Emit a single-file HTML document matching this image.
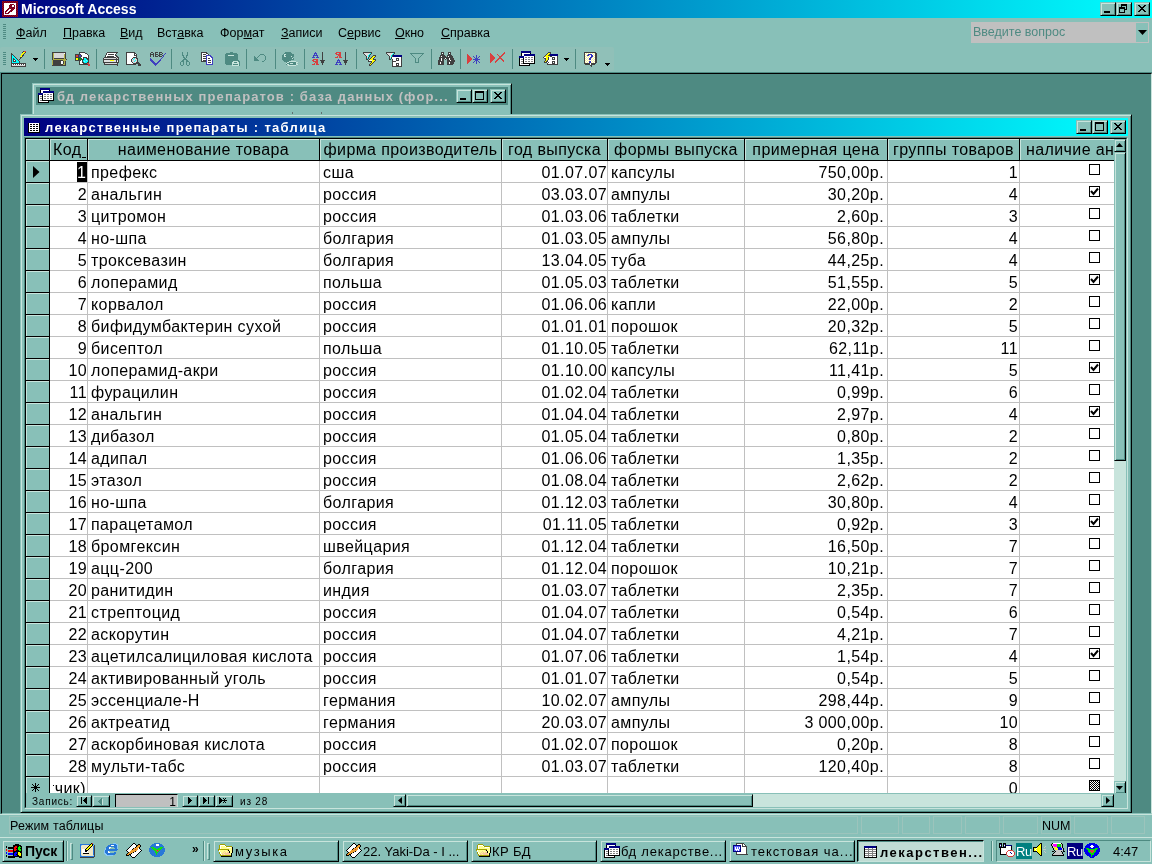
<!DOCTYPE html><html><head><meta charset="utf-8"><style>
html,body{margin:0;padding:0}
body{width:1152px;height:864px;overflow:hidden;position:relative;background:#88C0B8;font-family:"Liberation Sans",sans-serif;color:#000}
div,span,svg{position:absolute;box-sizing:border-box}
.t{white-space:nowrap;line-height:1;will-change:transform}
.rb{background:#88C0B8;border:1px solid;border-color:#88C0B8 #000 #000 #88C0B8;box-shadow:inset 1px 1px 0 #C8E4DC,inset -1px -1px 0 #4E8A82}
.sep{width:2px;border-left:1px solid #4E8A82;border-right:1px solid #C8E4DC}
.cell{font-size:16px;letter-spacing:0.4px;line-height:21px;height:21px;white-space:nowrap;overflow:hidden;will-change:transform}
</style></head><body>

<div style="left:0;top:0;width:1152px;height:18px;background:linear-gradient(to right,#000080,#00FFFF)"></div>
<svg style="left:2px;top:1px;" width="16" height="16" viewBox="0 0 16 16" shape-rendering="crispEdges"><rect x="0" y="0" width="1" height="1" fill="#800040"/><rect x="1" y="0" width="1" height="1" fill="#800000"/><rect x="2" y="0" width="1" height="1" fill="#800040"/><rect x="3" y="0" width="1" height="1" fill="#800000"/><rect x="4" y="0" width="1" height="1" fill="#800040"/><rect x="5" y="0" width="1" height="1" fill="#800000"/><rect x="6" y="0" width="1" height="1" fill="#800040"/><rect x="7" y="0" width="1" height="1" fill="#800000"/><rect x="8" y="0" width="1" height="1" fill="#800040"/><rect x="9" y="0" width="1" height="1" fill="#800000"/><rect x="10" y="0" width="1" height="1" fill="#800040"/><rect x="11" y="0" width="1" height="1" fill="#800000"/><rect x="12" y="0" width="1" height="1" fill="#800040"/><rect x="13" y="0" width="1" height="1" fill="#800000"/><rect x="14" y="0" width="1" height="1" fill="#800040"/><rect x="15" y="0" width="1" height="1" fill="#800000"/><rect x="0" y="1" width="1" height="1" fill="#800000"/><rect x="1" y="1" width="1" height="1" fill="#800040"/><rect x="2" y="1" width="1" height="1" fill="#800000"/><rect x="3" y="1" width="1" height="1" fill="#800040"/><rect x="4" y="1" width="1" height="1" fill="#800000"/><rect x="5" y="1" width="1" height="1" fill="#800040"/><rect x="6" y="1" width="1" height="1" fill="#800000"/><rect x="7" y="1" width="1" height="1" fill="#800040"/><rect x="8" y="1" width="1" height="1" fill="#800000"/><rect x="9" y="1" width="1" height="1" fill="#800040"/><rect x="10" y="1" width="1" height="1" fill="#800000"/><rect x="11" y="1" width="1" height="1" fill="#800040"/><rect x="12" y="1" width="1" height="1" fill="#800000"/><rect x="13" y="1" width="1" height="1" fill="#800040"/><rect x="14" y="1" width="1" height="1" fill="#800000"/><rect x="15" y="1" width="1" height="1" fill="#800040"/><rect x="0" y="2" width="1" height="1" fill="#800040"/><rect x="1" y="2" width="1" height="1" fill="#800000"/><rect x="2" y="2" width="12" height="1" fill="#FFFFFF"/><rect x="14" y="2" width="1" height="1" fill="#800040"/><rect x="15" y="2" width="1" height="1" fill="#800000"/><rect x="0" y="3" width="1" height="1" fill="#800000"/><rect x="1" y="3" width="1" height="1" fill="#800040"/><rect x="2" y="3" width="6" height="1" fill="#FFFFFF"/><rect x="8" y="3" width="1" height="1" fill="#800000"/><rect x="9" y="3" width="1" height="1" fill="#800040"/><rect x="10" y="3" width="1" height="1" fill="#800000"/><rect x="11" y="3" width="1" height="1" fill="#800040"/><rect x="12" y="3" width="2" height="1" fill="#FFFFFF"/><rect x="14" y="3" width="1" height="1" fill="#800000"/><rect x="15" y="3" width="1" height="1" fill="#800040"/><rect x="0" y="4" width="1" height="1" fill="#800040"/><rect x="1" y="4" width="1" height="1" fill="#800000"/><rect x="2" y="4" width="5" height="1" fill="#FFFFFF"/><rect x="7" y="4" width="1" height="1" fill="#800000"/><rect x="8" y="4" width="1" height="1" fill="#800040"/><rect x="9" y="4" width="1" height="1" fill="#800000"/><rect x="10" y="4" width="2" height="1" fill="#FFFFFF"/><rect x="12" y="4" width="1" height="1" fill="#800000"/><rect x="13" y="4" width="1" height="1" fill="#FFFFFF"/><rect x="14" y="4" width="1" height="1" fill="#800040"/><rect x="15" y="4" width="1" height="1" fill="#800000"/><rect x="0" y="5" width="1" height="1" fill="#800000"/><rect x="1" y="5" width="1" height="1" fill="#800040"/><rect x="2" y="5" width="5" height="1" fill="#FFFFFF"/><rect x="7" y="5" width="1" height="1" fill="#800040"/><rect x="8" y="5" width="1" height="1" fill="#800000"/><rect x="9" y="5" width="1" height="1" fill="#800040"/><rect x="10" y="5" width="2" height="1" fill="#FFFFFF"/><rect x="12" y="5" width="1" height="1" fill="#800040"/><rect x="13" y="5" width="1" height="1" fill="#FFFFFF"/><rect x="14" y="5" width="1" height="1" fill="#800000"/><rect x="15" y="5" width="1" height="1" fill="#800040"/><rect x="0" y="6" width="1" height="1" fill="#800040"/><rect x="1" y="6" width="1" height="1" fill="#800000"/><rect x="2" y="6" width="5" height="1" fill="#FFFFFF"/><rect x="7" y="6" width="1" height="1" fill="#800000"/><rect x="8" y="6" width="1" height="1" fill="#800040"/><rect x="9" y="6" width="1" height="1" fill="#800000"/><rect x="10" y="6" width="1" height="1" fill="#800040"/><rect x="11" y="6" width="1" height="1" fill="#800000"/><rect x="12" y="6" width="1" height="1" fill="#800040"/><rect x="13" y="6" width="1" height="1" fill="#FFFFFF"/><rect x="14" y="6" width="1" height="1" fill="#800040"/><rect x="15" y="6" width="1" height="1" fill="#800000"/><rect x="0" y="7" width="1" height="1" fill="#800000"/><rect x="1" y="7" width="1" height="1" fill="#800040"/><rect x="2" y="7" width="4" height="1" fill="#FFFFFF"/><rect x="6" y="7" width="1" height="1" fill="#800000"/><rect x="7" y="7" width="1" height="1" fill="#800040"/><rect x="8" y="7" width="1" height="1" fill="#800000"/><rect x="9" y="7" width="1" height="1" fill="#800040"/><rect x="10" y="7" width="1" height="1" fill="#800000"/><rect x="11" y="7" width="1" height="1" fill="#800040"/><rect x="12" y="7" width="1" height="1" fill="#800000"/><rect x="13" y="7" width="1" height="1" fill="#FFFFFF"/><rect x="14" y="7" width="1" height="1" fill="#800000"/><rect x="15" y="7" width="1" height="1" fill="#800040"/><rect x="0" y="8" width="1" height="1" fill="#800040"/><rect x="1" y="8" width="1" height="1" fill="#800000"/><rect x="2" y="8" width="3" height="1" fill="#FFFFFF"/><rect x="5" y="8" width="1" height="1" fill="#800000"/><rect x="6" y="8" width="1" height="1" fill="#800040"/><rect x="7" y="8" width="2" height="1" fill="#FFFFFF"/><rect x="9" y="8" width="1" height="1" fill="#800000"/><rect x="10" y="8" width="1" height="1" fill="#800040"/><rect x="11" y="8" width="1" height="1" fill="#800000"/><rect x="12" y="8" width="2" height="1" fill="#FFFFFF"/><rect x="14" y="8" width="1" height="1" fill="#800040"/><rect x="15" y="8" width="1" height="1" fill="#800000"/><rect x="0" y="9" width="1" height="1" fill="#800000"/><rect x="1" y="9" width="1" height="1" fill="#800040"/><rect x="2" y="9" width="2" height="1" fill="#FFFFFF"/><rect x="4" y="9" width="1" height="1" fill="#800000"/><rect x="5" y="9" width="1" height="1" fill="#800040"/><rect x="6" y="9" width="2" height="1" fill="#FFFFFF"/><rect x="8" y="9" width="1" height="1" fill="#800040"/><rect x="9" y="9" width="1" height="1" fill="#800000"/><rect x="10" y="9" width="1" height="1" fill="#800040"/><rect x="11" y="9" width="3" height="1" fill="#FFFFFF"/><rect x="14" y="9" width="1" height="1" fill="#800000"/><rect x="15" y="9" width="1" height="1" fill="#800040"/><rect x="0" y="10" width="1" height="1" fill="#800040"/><rect x="1" y="10" width="1" height="1" fill="#800000"/><rect x="2" y="10" width="1" height="1" fill="#FFFFFF"/><rect x="3" y="10" width="1" height="1" fill="#800000"/><rect x="4" y="10" width="1" height="1" fill="#800040"/><rect x="5" y="10" width="2" height="1" fill="#FFFFFF"/><rect x="7" y="10" width="1" height="1" fill="#800000"/><rect x="8" y="10" width="1" height="1" fill="#800040"/><rect x="9" y="10" width="1" height="1" fill="#800000"/><rect x="10" y="10" width="4" height="1" fill="#FFFFFF"/><rect x="14" y="10" width="1" height="1" fill="#800040"/><rect x="15" y="10" width="1" height="1" fill="#800000"/><rect x="0" y="11" width="1" height="1" fill="#800000"/><rect x="1" y="11" width="1" height="1" fill="#800040"/><rect x="2" y="11" width="1" height="1" fill="#FFFFFF"/><rect x="3" y="11" width="1" height="1" fill="#800040"/><rect x="4" y="11" width="2" height="1" fill="#FFFFFF"/><rect x="6" y="11" width="1" height="1" fill="#800000"/><rect x="7" y="11" width="1" height="1" fill="#800040"/><rect x="8" y="11" width="6" height="1" fill="#FFFFFF"/><rect x="14" y="11" width="1" height="1" fill="#800000"/><rect x="15" y="11" width="1" height="1" fill="#800040"/><rect x="0" y="12" width="1" height="1" fill="#800040"/><rect x="1" y="12" width="1" height="1" fill="#800000"/><rect x="2" y="12" width="1" height="1" fill="#FFFFFF"/><rect x="3" y="12" width="1" height="1" fill="#800000"/><rect x="4" y="12" width="1" height="1" fill="#800040"/><rect x="5" y="12" width="1" height="1" fill="#800000"/><rect x="6" y="12" width="1" height="1" fill="#800040"/><rect x="7" y="12" width="7" height="1" fill="#FFFFFF"/><rect x="14" y="12" width="1" height="1" fill="#800040"/><rect x="15" y="12" width="1" height="1" fill="#800000"/><rect x="0" y="13" width="1" height="1" fill="#800000"/><rect x="1" y="13" width="1" height="1" fill="#800040"/><rect x="2" y="13" width="12" height="1" fill="#FFFFFF"/><rect x="14" y="13" width="1" height="1" fill="#800000"/><rect x="15" y="13" width="1" height="1" fill="#800040"/><rect x="0" y="14" width="1" height="1" fill="#800040"/><rect x="1" y="14" width="1" height="1" fill="#800000"/><rect x="2" y="14" width="1" height="1" fill="#800040"/><rect x="3" y="14" width="1" height="1" fill="#800000"/><rect x="4" y="14" width="1" height="1" fill="#800040"/><rect x="5" y="14" width="1" height="1" fill="#800000"/><rect x="6" y="14" width="1" height="1" fill="#800040"/><rect x="7" y="14" width="1" height="1" fill="#800000"/><rect x="8" y="14" width="1" height="1" fill="#800040"/><rect x="9" y="14" width="1" height="1" fill="#800000"/><rect x="10" y="14" width="1" height="1" fill="#800040"/><rect x="11" y="14" width="1" height="1" fill="#800000"/><rect x="12" y="14" width="1" height="1" fill="#800040"/><rect x="13" y="14" width="1" height="1" fill="#800000"/><rect x="14" y="14" width="1" height="1" fill="#800040"/><rect x="15" y="14" width="1" height="1" fill="#800000"/><rect x="0" y="15" width="1" height="1" fill="#800000"/><rect x="1" y="15" width="1" height="1" fill="#800040"/><rect x="2" y="15" width="1" height="1" fill="#800000"/><rect x="3" y="15" width="1" height="1" fill="#800040"/><rect x="4" y="15" width="1" height="1" fill="#800000"/><rect x="5" y="15" width="1" height="1" fill="#800040"/><rect x="6" y="15" width="1" height="1" fill="#800000"/><rect x="7" y="15" width="1" height="1" fill="#800040"/><rect x="8" y="15" width="1" height="1" fill="#800000"/><rect x="9" y="15" width="1" height="1" fill="#800040"/><rect x="10" y="15" width="1" height="1" fill="#800000"/><rect x="11" y="15" width="1" height="1" fill="#800040"/><rect x="12" y="15" width="1" height="1" fill="#800000"/><rect x="13" y="15" width="1" height="1" fill="#800040"/><rect x="14" y="15" width="1" height="1" fill="#800000"/><rect x="15" y="15" width="1" height="1" fill="#800040"/></svg>
<div class="t" style="left:21px;top:2px;font-size:14px;font-weight:bold;color:#fff;line-height:14px">Microsoft Access</div>
<div class="rb" style="left:1100px;top:2px;width:16px;height:14px;"></div>
<div style="left:1104px;top:11px;width:6px;height:2px;background:#000"></div>
<div class="rb" style="left:1116px;top:2px;width:16px;height:14px;"></div>
<svg style="left:1119px;top:4px" width="9" height="9" viewBox="0 0 9 9" shape-rendering="crispEdges">
<path d="M2 0h6v6h-2v-1h1v-3h-4v1h-1z" fill="#000"/><rect x="2" y="0" width="6" height="2" fill="#000"/>
<path d="M0 3h6v6h-6z M1 5v3h4v-3z" fill="#000" fill-rule="evenodd"/></svg>
<div class="rb" style="left:1134px;top:2px;width:16px;height:14px;"></div>
<svg style="left:1138px;top:5px" width="8" height="7" viewBox="0 0 8 7" shape-rendering="crispEdges">
<path d="M0 0h2v1h-2z M6 0h2v1h-2z M1 1h2v1h-2z M5 1h2v1h-2z M2 2h4v1h-4z M3 3h2v1h-2z M2 4h4v1h-4z M1 5h2v1h-2z M5 5h2v1h-2z M0 6h2v1h-2z M6 6h2v1h-2z" fill="#000"/></svg>
<div style="left:3px;top:24px;width:3px;height:1px;background:#4E8A82"></div>
<div style="left:3px;top:26px;width:3px;height:1px;background:#4E8A82"></div>
<div style="left:3px;top:28px;width:3px;height:1px;background:#4E8A82"></div>
<div style="left:3px;top:30px;width:3px;height:1px;background:#4E8A82"></div>
<div style="left:3px;top:32px;width:3px;height:1px;background:#4E8A82"></div>
<div style="left:3px;top:34px;width:3px;height:1px;background:#4E8A82"></div>
<div style="left:3px;top:36px;width:3px;height:1px;background:#4E8A82"></div>
<div style="left:3px;top:38px;width:3px;height:1px;background:#4E8A82"></div>
<div class="t" style="left:16px;top:27px;font-size:12.5px;line-height:13px"><span style="position:static;text-decoration:underline;text-underline-offset:1px">Ф</span>айл</div>
<div class="t" style="left:63px;top:27px;font-size:12.5px;line-height:13px"><span style="position:static;text-decoration:underline;text-underline-offset:1px">П</span>равка</div>
<div class="t" style="left:120px;top:27px;font-size:12.5px;line-height:13px"><span style="position:static;text-decoration:underline;text-underline-offset:1px">В</span>ид</div>
<div class="t" style="left:157px;top:27px;font-size:12.5px;line-height:13px">Вст<span style="position:static;text-decoration:underline;text-underline-offset:1px">а</span>вка</div>
<div class="t" style="left:220px;top:27px;font-size:12.5px;line-height:13px">Фор<span style="position:static;text-decoration:underline;text-underline-offset:1px">м</span>ат</div>
<div class="t" style="left:281px;top:27px;font-size:12.5px;line-height:13px"><span style="position:static;text-decoration:underline;text-underline-offset:1px">З</span>аписи</div>
<div class="t" style="left:338px;top:27px;font-size:12.5px;line-height:13px">С<span style="position:static;text-decoration:underline;text-underline-offset:1px">е</span>рвис</div>
<div class="t" style="left:395px;top:27px;font-size:12.5px;line-height:13px"><span style="position:static;text-decoration:underline;text-underline-offset:1px">О</span>кно</div>
<div class="t" style="left:441px;top:27px;font-size:12.5px;line-height:13px"><span style="position:static;text-decoration:underline;text-underline-offset:1px">С</span>правка</div>
<div style="left:971px;top:22px;width:178px;height:21px;background:#C0C0C0"></div>
<div style="left:1136px;top:23px;width:12px;height:19px;background:#88C0B8"></div>
<svg style="left:1138px;top:30px" width="9" height="5" viewBox="0 0 9 5"><path d="M0 0h9l-4.5 5z" fill="#000"/></svg>
<div class="t" style="left:973px;top:26px;font-size:12.5px;line-height:13px;color:#4E8A82">Введите вопрос</div>
<div style="left:0;top:47px;width:614px;height:24px;background:#90C0B8;border-radius:2px"></div>
<div style="left:3px;top:52px;width:3px;height:1px;background:#4E8A82"></div>
<div style="left:3px;top:54px;width:3px;height:1px;background:#4E8A82"></div>
<div style="left:3px;top:56px;width:3px;height:1px;background:#4E8A82"></div>
<div style="left:3px;top:58px;width:3px;height:1px;background:#4E8A82"></div>
<div style="left:3px;top:60px;width:3px;height:1px;background:#4E8A82"></div>
<div style="left:3px;top:62px;width:3px;height:1px;background:#4E8A82"></div>
<div style="left:3px;top:64px;width:3px;height:1px;background:#4E8A82"></div>
<div style="left:44px;top:49px;width:1px;height:20px;background:#4E8A82"></div>
<div style="left:96px;top:49px;width:1px;height:20px;background:#4E8A82"></div>
<div style="left:171px;top:49px;width:1px;height:20px;background:#4E8A82"></div>
<div style="left:246px;top:49px;width:1px;height:20px;background:#4E8A82"></div>
<div style="left:275px;top:49px;width:1px;height:20px;background:#4E8A82"></div>
<div style="left:304px;top:49px;width:1px;height:20px;background:#4E8A82"></div>
<div style="left:356px;top:49px;width:1px;height:20px;background:#4E8A82"></div>
<div style="left:431px;top:49px;width:1px;height:20px;background:#4E8A82"></div>
<div style="left:460px;top:49px;width:1px;height:20px;background:#4E8A82"></div>
<div style="left:512px;top:49px;width:1px;height:20px;background:#4E8A82"></div>
<div style="left:575px;top:49px;width:1px;height:20px;background:#4E8A82"></div>
<svg style="left:11px;top:51px;" width="16" height="16" viewBox="0 0 16 16" shape-rendering="crispEdges"><rect x="12" y="0" width="1" height="1" fill="#404040"/><rect x="13" y="0" width="2" height="1" fill="#D84040"/><rect x="11" y="1" width="1" height="1" fill="#404040"/><rect x="12" y="1" width="2" height="1" fill="#FFFF00"/><rect x="14" y="1" width="1" height="1" fill="#404040"/><rect x="0" y="2" width="1" height="1" fill="#404040"/><rect x="11" y="2" width="2" height="1" fill="#FFFF00"/><rect x="13" y="2" width="1" height="1" fill="#404040"/><rect x="0" y="3" width="2" height="1" fill="#404040"/><rect x="10" y="3" width="2" height="1" fill="#FFFF00"/><rect x="12" y="3" width="1" height="1" fill="#404040"/><rect x="0" y="4" width="1" height="1" fill="#404040"/><rect x="1" y="4" width="1" height="1" fill="#00FFFF"/><rect x="2" y="4" width="1" height="1" fill="#404040"/><rect x="10" y="4" width="1" height="1" fill="#FFFF00"/><rect x="11" y="4" width="2" height="1" fill="#404040"/><rect x="0" y="5" width="1" height="1" fill="#404040"/><rect x="1" y="5" width="2" height="1" fill="#00FFFF"/><rect x="3" y="5" width="1" height="1" fill="#404040"/><rect x="9" y="5" width="2" height="1" fill="#FFFF00"/><rect x="11" y="5" width="1" height="1" fill="#404040"/><rect x="0" y="6" width="1" height="1" fill="#404040"/><rect x="1" y="6" width="3" height="1" fill="#00FFFF"/><rect x="4" y="6" width="1" height="1" fill="#404040"/><rect x="9" y="6" width="2" height="1" fill="#404040"/><rect x="0" y="7" width="1" height="1" fill="#404040"/><rect x="1" y="7" width="1" height="1" fill="#00FFFF"/><rect x="2" y="7" width="1" height="1" fill="#404040"/><rect x="3" y="7" width="2" height="1" fill="#00FFFF"/><rect x="5" y="7" width="1" height="1" fill="#404040"/><rect x="9" y="7" width="1" height="1" fill="#404040"/><rect x="0" y="8" width="1" height="1" fill="#404040"/><rect x="1" y="8" width="1" height="1" fill="#00FFFF"/><rect x="2" y="8" width="2" height="1" fill="#404040"/><rect x="4" y="8" width="2" height="1" fill="#00FFFF"/><rect x="6" y="8" width="1" height="1" fill="#404040"/><rect x="8" y="8" width="1" height="1" fill="#404040"/><rect x="0" y="9" width="1" height="1" fill="#404040"/><rect x="1" y="9" width="1" height="1" fill="#00FFFF"/><rect x="2" y="9" width="1" height="1" fill="#404040"/><rect x="3" y="9" width="1" height="1" fill="#FFFFFF"/><rect x="4" y="9" width="1" height="1" fill="#404040"/><rect x="5" y="9" width="2" height="1" fill="#00FFFF"/><rect x="7" y="9" width="1" height="1" fill="#404040"/><rect x="0" y="10" width="1" height="1" fill="#404040"/><rect x="1" y="10" width="1" height="1" fill="#00FFFF"/><rect x="2" y="10" width="3" height="1" fill="#404040"/><rect x="5" y="10" width="3" height="1" fill="#00FFFF"/><rect x="8" y="10" width="1" height="1" fill="#404040"/><rect x="0" y="11" width="1" height="1" fill="#404040"/><rect x="1" y="11" width="7" height="1" fill="#00FFFF"/><rect x="8" y="11" width="1" height="1" fill="#404040"/><rect x="0" y="12" width="15" height="1" fill="#404040"/><rect x="0" y="13" width="1" height="1" fill="#404040"/><rect x="1" y="13" width="1" height="1" fill="#FFFFFF"/><rect x="2" y="13" width="1" height="1" fill="#404040"/><rect x="3" y="13" width="1" height="1" fill="#FFFFFF"/><rect x="4" y="13" width="1" height="1" fill="#404040"/><rect x="5" y="13" width="1" height="1" fill="#FFFFFF"/><rect x="6" y="13" width="1" height="1" fill="#404040"/><rect x="7" y="13" width="1" height="1" fill="#FFFFFF"/><rect x="8" y="13" width="1" height="1" fill="#404040"/><rect x="9" y="13" width="1" height="1" fill="#FFFFFF"/><rect x="10" y="13" width="1" height="1" fill="#404040"/><rect x="11" y="13" width="1" height="1" fill="#FFFFFF"/><rect x="12" y="13" width="1" height="1" fill="#404040"/><rect x="13" y="13" width="1" height="1" fill="#FFFFFF"/><rect x="14" y="13" width="1" height="1" fill="#404040"/><rect x="0" y="14" width="1" height="1" fill="#404040"/><rect x="1" y="14" width="13" height="1" fill="#D8D8D8"/><rect x="14" y="14" width="1" height="1" fill="#404040"/><rect x="0" y="15" width="15" height="1" fill="#404040"/></svg>
<svg style="left:33px;top:58px;" width="5" height="3" viewBox="0 0 5 3" shape-rendering="crispEdges"><rect x="0" y="0" width="5" height="1" fill="#000000"/><rect x="1" y="1" width="3" height="1" fill="#000000"/><rect x="2" y="2" width="1" height="1" fill="#000000"/></svg>
<svg style="left:52px;top:52px;" width="15" height="14" viewBox="0 0 15 14" shape-rendering="crispEdges"><rect x="0" y="0" width="14" height="1" fill="#404040"/><rect x="0" y="1" width="1" height="1" fill="#404040"/><rect x="1" y="1" width="1" height="1" fill="#B0B048"/><rect x="2" y="1" width="10" height="1" fill="#D8D8D8"/><rect x="12" y="1" width="1" height="1" fill="#FFFFFF"/><rect x="13" y="1" width="1" height="1" fill="#404040"/><rect x="0" y="2" width="1" height="1" fill="#404040"/><rect x="1" y="2" width="1" height="1" fill="#B0B048"/><rect x="2" y="2" width="10" height="1" fill="#D8D8D8"/><rect x="12" y="2" width="1" height="1" fill="#B0B048"/><rect x="13" y="2" width="1" height="1" fill="#404040"/><rect x="0" y="3" width="1" height="1" fill="#404040"/><rect x="1" y="3" width="1" height="1" fill="#B0B048"/><rect x="2" y="3" width="10" height="1" fill="#D8D8D8"/><rect x="12" y="3" width="1" height="1" fill="#B0B048"/><rect x="13" y="3" width="1" height="1" fill="#404040"/><rect x="0" y="4" width="1" height="1" fill="#404040"/><rect x="1" y="4" width="1" height="1" fill="#B0B048"/><rect x="2" y="4" width="10" height="1" fill="#D8D8D8"/><rect x="12" y="4" width="1" height="1" fill="#B0B048"/><rect x="13" y="4" width="1" height="1" fill="#404040"/><rect x="0" y="5" width="1" height="1" fill="#404040"/><rect x="1" y="5" width="1" height="1" fill="#B0B048"/><rect x="2" y="5" width="10" height="1" fill="#D8D8D8"/><rect x="12" y="5" width="1" height="1" fill="#B0B048"/><rect x="13" y="5" width="1" height="1" fill="#404040"/><rect x="0" y="6" width="1" height="1" fill="#404040"/><rect x="1" y="6" width="1" height="1" fill="#B0B048"/><rect x="2" y="6" width="10" height="1" fill="#404040"/><rect x="12" y="6" width="1" height="1" fill="#B0B048"/><rect x="13" y="6" width="1" height="1" fill="#404040"/><rect x="0" y="7" width="1" height="1" fill="#404040"/><rect x="1" y="7" width="13" height="1" fill="#B0B048"/><rect x="14" y="7" width="1" height="1" fill="#404040"/><rect x="0" y="8" width="1" height="1" fill="#B0B048"/><rect x="1" y="8" width="10" height="1" fill="#404040"/><rect x="11" y="8" width="3" height="1" fill="#B0B048"/><rect x="0" y="9" width="1" height="1" fill="#B0B048"/><rect x="1" y="9" width="8" height="1" fill="#404040"/><rect x="9" y="9" width="2" height="1" fill="#FFFFFF"/><rect x="11" y="9" width="1" height="1" fill="#404040"/><rect x="12" y="9" width="1" height="1" fill="#B0B048"/><rect x="13" y="9" width="1" height="1" fill="#404040"/><rect x="0" y="10" width="1" height="1" fill="#B0B048"/><rect x="1" y="10" width="8" height="1" fill="#404040"/><rect x="9" y="10" width="2" height="1" fill="#FFFFFF"/><rect x="11" y="10" width="1" height="1" fill="#404040"/><rect x="12" y="10" width="1" height="1" fill="#B0B048"/><rect x="13" y="10" width="1" height="1" fill="#404040"/><rect x="0" y="11" width="1" height="1" fill="#B0B048"/><rect x="1" y="11" width="8" height="1" fill="#404040"/><rect x="9" y="11" width="2" height="1" fill="#FFFFFF"/><rect x="11" y="11" width="1" height="1" fill="#404040"/><rect x="12" y="11" width="1" height="1" fill="#B0B048"/><rect x="13" y="11" width="1" height="1" fill="#404040"/><rect x="0" y="12" width="1" height="1" fill="#B0B048"/><rect x="1" y="12" width="10" height="1" fill="#404040"/><rect x="11" y="12" width="2" height="1" fill="#B0B048"/><rect x="13" y="12" width="1" height="1" fill="#404040"/><rect x="0" y="13" width="14" height="1" fill="#404040"/></svg>
<svg style="left:75px;top:52px;" width="16" height="14" viewBox="0 0 16 14" shape-rendering="crispEdges"><rect x="4" y="0" width="6" height="1" fill="#404040"/><rect x="4" y="1" width="1" height="1" fill="#404040"/><rect x="5" y="1" width="5" height="1" fill="#FFFFFF"/><rect x="10" y="1" width="2" height="1" fill="#404040"/><rect x="0" y="2" width="6" height="1" fill="#404040"/><rect x="6" y="2" width="6" height="1" fill="#FFFFFF"/><rect x="12" y="2" width="1" height="1" fill="#404040"/><rect x="0" y="3" width="1" height="1" fill="#404040"/><rect x="1" y="3" width="2" height="1" fill="#D84040"/><rect x="3" y="3" width="1" height="1" fill="#404040"/><rect x="4" y="3" width="2" height="1" fill="#4040C0"/><rect x="6" y="3" width="1" height="1" fill="#404040"/><rect x="7" y="3" width="6" height="1" fill="#FFFFFF"/><rect x="13" y="3" width="1" height="1" fill="#404040"/><rect x="0" y="4" width="1" height="1" fill="#404040"/><rect x="1" y="4" width="2" height="1" fill="#D84040"/><rect x="3" y="4" width="1" height="1" fill="#404040"/><rect x="4" y="4" width="2" height="1" fill="#4040C0"/><rect x="6" y="4" width="1" height="1" fill="#404040"/><rect x="7" y="4" width="6" height="1" fill="#FFFFFF"/><rect x="13" y="4" width="1" height="1" fill="#404040"/><rect x="0" y="5" width="6" height="1" fill="#404040"/><rect x="6" y="5" width="2" height="1" fill="#FFFFFF"/><rect x="8" y="5" width="4" height="1" fill="#404040"/><rect x="12" y="5" width="1" height="1" fill="#FFFFFF"/><rect x="13" y="5" width="1" height="1" fill="#404040"/><rect x="0" y="6" width="1" height="1" fill="#404040"/><rect x="1" y="6" width="2" height="1" fill="#FFFF00"/><rect x="3" y="6" width="1" height="1" fill="#404040"/><rect x="4" y="6" width="2" height="1" fill="#00A000"/><rect x="6" y="6" width="1" height="1" fill="#404040"/><rect x="7" y="6" width="1" height="1" fill="#FFFFFF"/><rect x="8" y="6" width="1" height="1" fill="#404040"/><rect x="9" y="6" width="2" height="1" fill="#00FFFF"/><rect x="11" y="6" width="3" height="1" fill="#404040"/><rect x="0" y="7" width="1" height="1" fill="#404040"/><rect x="1" y="7" width="2" height="1" fill="#FFFF00"/><rect x="3" y="7" width="1" height="1" fill="#404040"/><rect x="4" y="7" width="2" height="1" fill="#00A000"/><rect x="6" y="7" width="3" height="1" fill="#404040"/><rect x="9" y="7" width="3" height="1" fill="#00FFFF"/><rect x="12" y="7" width="2" height="1" fill="#404040"/><rect x="0" y="8" width="6" height="1" fill="#404040"/><rect x="6" y="8" width="1" height="1" fill="#FFFFFF"/><rect x="7" y="8" width="1" height="1" fill="#404040"/><rect x="8" y="8" width="3" height="1" fill="#00FFFF"/><rect x="11" y="8" width="1" height="1" fill="#A0E0F0"/><rect x="12" y="8" width="1" height="1" fill="#00FFFF"/><rect x="13" y="8" width="1" height="1" fill="#404040"/><rect x="4" y="9" width="1" height="1" fill="#404040"/><rect x="5" y="9" width="2" height="1" fill="#FFFFFF"/><rect x="7" y="9" width="1" height="1" fill="#404040"/><rect x="8" y="9" width="1" height="1" fill="#00FFFF"/><rect x="9" y="9" width="1" height="1" fill="#A0E0F0"/><rect x="10" y="9" width="3" height="1" fill="#00FFFF"/><rect x="13" y="9" width="1" height="1" fill="#404040"/><rect x="4" y="10" width="1" height="1" fill="#404040"/><rect x="5" y="10" width="2" height="1" fill="#FFFFFF"/><rect x="7" y="10" width="2" height="1" fill="#404040"/><rect x="9" y="10" width="3" height="1" fill="#00FFFF"/><rect x="12" y="10" width="2" height="1" fill="#404040"/><rect x="4" y="11" width="1" height="1" fill="#404040"/><rect x="5" y="11" width="3" height="1" fill="#FFFFFF"/><rect x="8" y="11" width="4" height="1" fill="#404040"/><rect x="12" y="11" width="2" height="1" fill="#D84040"/><rect x="4" y="12" width="9" height="1" fill="#404040"/><rect x="13" y="12" width="2" height="1" fill="#D84040"/><rect x="13" y="13" width="2" height="1" fill="#D84040"/></svg>
<svg style="left:103px;top:52px;" width="16" height="14" viewBox="0 0 16 14" shape-rendering="crispEdges"><rect x="4" y="0" width="11" height="1" fill="#404040"/><rect x="3" y="1" width="1" height="1" fill="#404040"/><rect x="4" y="1" width="9" height="1" fill="#FFFFFF"/><rect x="13" y="1" width="1" height="1" fill="#404040"/><rect x="3" y="2" width="1" height="1" fill="#404040"/><rect x="4" y="2" width="1" height="1" fill="#FFFFFF"/><rect x="5" y="2" width="6" height="1" fill="#404040"/><rect x="11" y="2" width="1" height="1" fill="#FFFFFF"/><rect x="12" y="2" width="1" height="1" fill="#404040"/><rect x="2" y="3" width="1" height="1" fill="#404040"/><rect x="3" y="3" width="9" height="1" fill="#FFFFFF"/><rect x="12" y="3" width="2" height="1" fill="#404040"/><rect x="2" y="4" width="1" height="1" fill="#404040"/><rect x="3" y="4" width="1" height="1" fill="#FFFFFF"/><rect x="4" y="4" width="7" height="1" fill="#404040"/><rect x="11" y="4" width="2" height="1" fill="#FFFFFF"/><rect x="13" y="4" width="2" height="1" fill="#404040"/><rect x="1" y="5" width="12" height="1" fill="#404040"/><rect x="13" y="5" width="1" height="1" fill="#D8D8D8"/><rect x="14" y="5" width="2" height="1" fill="#404040"/><rect x="0" y="6" width="1" height="1" fill="#404040"/><rect x="1" y="6" width="12" height="1" fill="#D8D8D8"/><rect x="13" y="6" width="1" height="1" fill="#404040"/><rect x="14" y="6" width="1" height="1" fill="#D8D8D8"/><rect x="15" y="6" width="1" height="1" fill="#404040"/><rect x="0" y="7" width="16" height="1" fill="#404040"/><rect x="0" y="8" width="1" height="1" fill="#404040"/><rect x="1" y="8" width="6" height="1" fill="#E0E0E0"/><rect x="7" y="8" width="4" height="1" fill="#FFFF00"/><rect x="11" y="8" width="2" height="1" fill="#E0E0E0"/><rect x="13" y="8" width="1" height="1" fill="#404040"/><rect x="14" y="8" width="1" height="1" fill="#D8D8D8"/><rect x="15" y="8" width="1" height="1" fill="#404040"/><rect x="0" y="9" width="1" height="1" fill="#404040"/><rect x="1" y="9" width="12" height="1" fill="#E0E0E0"/><rect x="13" y="9" width="1" height="1" fill="#404040"/><rect x="14" y="9" width="1" height="1" fill="#FFFFFF"/><rect x="15" y="9" width="1" height="1" fill="#404040"/><rect x="0" y="10" width="16" height="1" fill="#404040"/><rect x="1" y="11" width="1" height="1" fill="#404040"/><rect x="2" y="11" width="12" height="1" fill="#D8D8D8"/><rect x="14" y="11" width="1" height="1" fill="#404040"/><rect x="1" y="12" width="14" height="1" fill="#404040"/><rect x="14" y="13" width="1" height="1" fill="#404040"/></svg>
<svg style="left:126px;top:52px;" width="16" height="14" viewBox="0 0 16 14" shape-rendering="crispEdges"><rect x="0" y="0" width="9" height="1" fill="#404040"/><rect x="0" y="1" width="1" height="1" fill="#404040"/><rect x="1" y="1" width="7" height="1" fill="#FFFFFF"/><rect x="8" y="1" width="2" height="1" fill="#404040"/><rect x="0" y="2" width="1" height="1" fill="#404040"/><rect x="1" y="2" width="7" height="1" fill="#FFFFFF"/><rect x="8" y="2" width="1" height="1" fill="#404040"/><rect x="9" y="2" width="1" height="1" fill="#FFFFFF"/><rect x="10" y="2" width="1" height="1" fill="#404040"/><rect x="0" y="3" width="1" height="1" fill="#404040"/><rect x="1" y="3" width="7" height="1" fill="#FFFFFF"/><rect x="8" y="3" width="3" height="1" fill="#404040"/><rect x="0" y="4" width="1" height="1" fill="#404040"/><rect x="1" y="4" width="9" height="1" fill="#FFFFFF"/><rect x="10" y="4" width="1" height="1" fill="#404040"/><rect x="0" y="5" width="1" height="1" fill="#404040"/><rect x="1" y="5" width="6" height="1" fill="#FFFFFF"/><rect x="7" y="5" width="4" height="1" fill="#404040"/><rect x="0" y="6" width="1" height="1" fill="#404040"/><rect x="1" y="6" width="5" height="1" fill="#FFFFFF"/><rect x="6" y="6" width="1" height="1" fill="#404040"/><rect x="7" y="6" width="1" height="1" fill="#D8D8D8"/><rect x="8" y="6" width="1" height="1" fill="#00FFFF"/><rect x="9" y="6" width="1" height="1" fill="#D8D8D8"/><rect x="10" y="6" width="2" height="1" fill="#404040"/><rect x="0" y="7" width="1" height="1" fill="#404040"/><rect x="1" y="7" width="4" height="1" fill="#FFFFFF"/><rect x="5" y="7" width="1" height="1" fill="#404040"/><rect x="6" y="7" width="1" height="1" fill="#D8D8D8"/><rect x="7" y="7" width="1" height="1" fill="#00FFFF"/><rect x="8" y="7" width="3" height="1" fill="#D8D8D8"/><rect x="11" y="7" width="1" height="1" fill="#404040"/><rect x="0" y="8" width="1" height="1" fill="#404040"/><rect x="1" y="8" width="4" height="1" fill="#FFFFFF"/><rect x="5" y="8" width="1" height="1" fill="#404040"/><rect x="6" y="8" width="3" height="1" fill="#D8D8D8"/><rect x="9" y="8" width="1" height="1" fill="#00FFFF"/><rect x="10" y="8" width="1" height="1" fill="#D8D8D8"/><rect x="11" y="8" width="1" height="1" fill="#404040"/><rect x="0" y="9" width="1" height="1" fill="#404040"/><rect x="1" y="9" width="4" height="1" fill="#FFFFFF"/><rect x="5" y="9" width="1" height="1" fill="#404040"/><rect x="6" y="9" width="2" height="1" fill="#D8D8D8"/><rect x="8" y="9" width="1" height="1" fill="#00FFFF"/><rect x="9" y="9" width="2" height="1" fill="#D8D8D8"/><rect x="11" y="9" width="1" height="1" fill="#404040"/><rect x="0" y="10" width="1" height="1" fill="#404040"/><rect x="1" y="10" width="5" height="1" fill="#FFFFFF"/><rect x="6" y="10" width="1" height="1" fill="#404040"/><rect x="7" y="10" width="3" height="1" fill="#D8D8D8"/><rect x="10" y="10" width="3" height="1" fill="#404040"/><rect x="0" y="11" width="1" height="1" fill="#404040"/><rect x="1" y="11" width="6" height="1" fill="#FFFFFF"/><rect x="7" y="11" width="7" height="1" fill="#404040"/><rect x="0" y="12" width="10" height="1" fill="#404040"/><rect x="12" y="12" width="3" height="1" fill="#404040"/><rect x="12" y="13" width="3" height="1" fill="#404040"/></svg>
<svg style="left:150px;top:52px;" width="16" height="14" viewBox="0 0 16 14" shape-rendering="crispEdges"><rect x="1" y="0" width="2" height="1" fill="#404040"/><rect x="5" y="0" width="3" height="1" fill="#404040"/><rect x="9" y="0" width="3" height="1" fill="#404040"/><rect x="0" y="1" width="1" height="1" fill="#404040"/><rect x="3" y="1" width="1" height="1" fill="#404040"/><rect x="5" y="1" width="1" height="1" fill="#404040"/><rect x="9" y="1" width="1" height="1" fill="#404040"/><rect x="12" y="1" width="1" height="1" fill="#404040"/><rect x="15" y="1" width="1" height="1" fill="#4040C0"/><rect x="0" y="2" width="4" height="1" fill="#404040"/><rect x="5" y="2" width="3" height="1" fill="#404040"/><rect x="9" y="2" width="3" height="1" fill="#404040"/><rect x="14" y="2" width="1" height="1" fill="#4040C0"/><rect x="0" y="3" width="1" height="1" fill="#404040"/><rect x="3" y="3" width="1" height="1" fill="#404040"/><rect x="5" y="3" width="1" height="1" fill="#404040"/><rect x="8" y="3" width="2" height="1" fill="#404040"/><rect x="12" y="3" width="1" height="1" fill="#404040"/><rect x="13" y="3" width="1" height="1" fill="#4040C0"/><rect x="0" y="4" width="1" height="1" fill="#404040"/><rect x="3" y="4" width="1" height="1" fill="#404040"/><rect x="5" y="4" width="3" height="1" fill="#404040"/><rect x="9" y="4" width="3" height="1" fill="#404040"/><rect x="13" y="4" width="1" height="1" fill="#4040C0"/><rect x="12" y="5" width="1" height="1" fill="#4040C0"/><rect x="0" y="6" width="1" height="1" fill="#4040C0"/><rect x="11" y="6" width="1" height="1" fill="#4040C0"/><rect x="0" y="7" width="2" height="1" fill="#4040C0"/><rect x="10" y="7" width="1" height="1" fill="#4040C0"/><rect x="0" y="8" width="3" height="1" fill="#4040C0"/><rect x="9" y="8" width="2" height="1" fill="#4040C0"/><rect x="1" y="9" width="3" height="1" fill="#4040C0"/><rect x="8" y="9" width="2" height="1" fill="#4040C0"/><rect x="2" y="10" width="3" height="1" fill="#4040C0"/><rect x="7" y="10" width="2" height="1" fill="#4040C0"/><rect x="3" y="11" width="5" height="1" fill="#4040C0"/><rect x="4" y="12" width="3" height="1" fill="#4040C0"/><rect x="5" y="13" width="1" height="1" fill="#4040C0"/></svg>
<svg style="left:180px;top:52px;" width="10" height="14" viewBox="0 0 10 14" shape-rendering="crispEdges"><rect x="2" y="0" width="1" height="1" fill="#4E8A82"/><rect x="7" y="0" width="1" height="1" fill="#4E8A82"/><rect x="2" y="1" width="1" height="1" fill="#4E8A82"/><rect x="7" y="1" width="1" height="1" fill="#4E8A82"/><rect x="2" y="2" width="1" height="1" fill="#4E8A82"/><rect x="7" y="2" width="1" height="1" fill="#4E8A82"/><rect x="2" y="3" width="2" height="1" fill="#4E8A82"/><rect x="6" y="3" width="2" height="1" fill="#4E8A82"/><rect x="3" y="4" width="1" height="1" fill="#4E8A82"/><rect x="6" y="4" width="1" height="1" fill="#4E8A82"/><rect x="3" y="5" width="2" height="1" fill="#4E8A82"/><rect x="6" y="5" width="1" height="1" fill="#4E8A82"/><rect x="4" y="6" width="2" height="1" fill="#4E8A82"/><rect x="3" y="7" width="4" height="1" fill="#4E8A82"/><rect x="2" y="8" width="2" height="1" fill="#4E8A82"/><rect x="6" y="8" width="2" height="1" fill="#4E8A82"/><rect x="1" y="9" width="3" height="1" fill="#4E8A82"/><rect x="6" y="9" width="3" height="1" fill="#4E8A82"/><rect x="0" y="10" width="1" height="1" fill="#4E8A82"/><rect x="3" y="10" width="1" height="1" fill="#4E8A82"/><rect x="6" y="10" width="1" height="1" fill="#4E8A82"/><rect x="9" y="10" width="1" height="1" fill="#4E8A82"/><rect x="0" y="11" width="1" height="1" fill="#4E8A82"/><rect x="3" y="11" width="1" height="1" fill="#4E8A82"/><rect x="6" y="11" width="1" height="1" fill="#4E8A82"/><rect x="9" y="11" width="1" height="1" fill="#4E8A82"/><rect x="0" y="12" width="1" height="1" fill="#4E8A82"/><rect x="3" y="12" width="1" height="1" fill="#4E8A82"/><rect x="6" y="12" width="1" height="1" fill="#4E8A82"/><rect x="9" y="12" width="1" height="1" fill="#4E8A82"/><rect x="1" y="13" width="2" height="1" fill="#4E8A82"/><rect x="7" y="13" width="2" height="1" fill="#4E8A82"/></svg>
<svg style="left:201px;top:52px;" width="12" height="13" viewBox="0 0 12 13" shape-rendering="crispEdges"><rect x="0" y="0" width="6" height="1" fill="#404040"/><rect x="0" y="1" width="1" height="1" fill="#404040"/><rect x="1" y="1" width="4" height="1" fill="#FFFFFF"/><rect x="5" y="1" width="2" height="1" fill="#404040"/><rect x="0" y="2" width="1" height="1" fill="#404040"/><rect x="1" y="2" width="1" height="1" fill="#FFFFFF"/><rect x="2" y="2" width="3" height="1" fill="#404040"/><rect x="5" y="2" width="2" height="1" fill="#FFFFFF"/><rect x="7" y="2" width="1" height="1" fill="#404040"/><rect x="0" y="3" width="1" height="1" fill="#404040"/><rect x="1" y="3" width="4" height="1" fill="#FFFFFF"/><rect x="5" y="3" width="5" height="1" fill="#4040C0"/><rect x="0" y="4" width="1" height="1" fill="#404040"/><rect x="1" y="4" width="1" height="1" fill="#FFFFFF"/><rect x="2" y="4" width="3" height="1" fill="#404040"/><rect x="5" y="4" width="1" height="1" fill="#4040C0"/><rect x="6" y="4" width="3" height="1" fill="#FFFFFF"/><rect x="9" y="4" width="2" height="1" fill="#4040C0"/><rect x="0" y="5" width="1" height="1" fill="#404040"/><rect x="1" y="5" width="4" height="1" fill="#FFFFFF"/><rect x="5" y="5" width="1" height="1" fill="#4040C0"/><rect x="6" y="5" width="4" height="1" fill="#FFFFFF"/><rect x="10" y="5" width="2" height="1" fill="#4040C0"/><rect x="0" y="6" width="1" height="1" fill="#404040"/><rect x="1" y="6" width="1" height="1" fill="#FFFFFF"/><rect x="2" y="6" width="3" height="1" fill="#404040"/><rect x="5" y="6" width="1" height="1" fill="#4040C0"/><rect x="6" y="6" width="1" height="1" fill="#FFFFFF"/><rect x="7" y="6" width="2" height="1" fill="#404040"/><rect x="9" y="6" width="2" height="1" fill="#FFFFFF"/><rect x="11" y="6" width="1" height="1" fill="#4040C0"/><rect x="0" y="7" width="1" height="1" fill="#404040"/><rect x="1" y="7" width="4" height="1" fill="#FFFFFF"/><rect x="5" y="7" width="1" height="1" fill="#4040C0"/><rect x="6" y="7" width="5" height="1" fill="#FFFFFF"/><rect x="11" y="7" width="1" height="1" fill="#4040C0"/><rect x="0" y="8" width="1" height="1" fill="#404040"/><rect x="1" y="8" width="1" height="1" fill="#FFFFFF"/><rect x="2" y="8" width="3" height="1" fill="#404040"/><rect x="5" y="8" width="1" height="1" fill="#4040C0"/><rect x="6" y="8" width="1" height="1" fill="#FFFFFF"/><rect x="7" y="8" width="3" height="1" fill="#404040"/><rect x="10" y="8" width="1" height="1" fill="#FFFFFF"/><rect x="11" y="8" width="1" height="1" fill="#4040C0"/><rect x="0" y="9" width="5" height="1" fill="#404040"/><rect x="5" y="9" width="1" height="1" fill="#4040C0"/><rect x="6" y="9" width="5" height="1" fill="#FFFFFF"/><rect x="11" y="9" width="1" height="1" fill="#4040C0"/><rect x="5" y="10" width="1" height="1" fill="#4040C0"/><rect x="6" y="10" width="1" height="1" fill="#FFFFFF"/><rect x="7" y="10" width="3" height="1" fill="#404040"/><rect x="10" y="10" width="1" height="1" fill="#FFFFFF"/><rect x="11" y="10" width="1" height="1" fill="#4040C0"/><rect x="5" y="11" width="1" height="1" fill="#4040C0"/><rect x="6" y="11" width="5" height="1" fill="#FFFFFF"/><rect x="11" y="11" width="1" height="1" fill="#4040C0"/><rect x="5" y="12" width="7" height="1" fill="#4040C0"/></svg>
<svg style="left:224px;top:52px;" width="16" height="14" viewBox="0 0 16 14" shape-rendering="crispEdges"><rect x="6" y="0" width="3" height="1" fill="#4E8A82"/><rect x="2" y="1" width="11" height="1" fill="#4E8A82"/><rect x="1" y="2" width="13" height="1" fill="#4E8A82"/><rect x="1" y="3" width="3" height="1" fill="#4E8A82"/><rect x="4" y="3" width="6" height="1" fill="#C8E4DC"/><rect x="10" y="3" width="4" height="1" fill="#4E8A82"/><rect x="1" y="4" width="13" height="1" fill="#4E8A82"/><rect x="1" y="5" width="13" height="1" fill="#4E8A82"/><rect x="1" y="6" width="13" height="1" fill="#4E8A82"/><rect x="1" y="7" width="13" height="1" fill="#4E8A82"/><rect x="1" y="8" width="14" height="1" fill="#4E8A82"/><rect x="1" y="9" width="8" height="1" fill="#4E8A82"/><rect x="9" y="9" width="5" height="1" fill="#C8E4DC"/><rect x="14" y="9" width="2" height="1" fill="#4E8A82"/><rect x="1" y="10" width="7" height="1" fill="#4E8A82"/><rect x="8" y="10" width="2" height="1" fill="#C8E4DC"/><rect x="10" y="10" width="3" height="1" fill="#4E8A82"/><rect x="13" y="10" width="2" height="1" fill="#C8E4DC"/><rect x="15" y="10" width="1" height="1" fill="#4E8A82"/><rect x="1" y="11" width="7" height="1" fill="#4E8A82"/><rect x="8" y="11" width="7" height="1" fill="#C8E4DC"/><rect x="15" y="11" width="1" height="1" fill="#4E8A82"/><rect x="2" y="12" width="6" height="1" fill="#4E8A82"/><rect x="8" y="12" width="1" height="1" fill="#C8E4DC"/><rect x="9" y="12" width="5" height="1" fill="#4E8A82"/><rect x="14" y="12" width="1" height="1" fill="#C8E4DC"/><rect x="15" y="12" width="1" height="1" fill="#4E8A82"/><rect x="8" y="13" width="7" height="1" fill="#C8E4DC"/><rect x="15" y="13" width="1" height="1" fill="#4E8A82"/></svg>
<svg style="left:254px;top:54px;" width="13" height="8" viewBox="0 0 13 8" shape-rendering="crispEdges"><rect x="6" y="0" width="4" height="1" fill="#4E8A82"/><rect x="5" y="1" width="1" height="1" fill="#4E8A82"/><rect x="10" y="1" width="1" height="1" fill="#4E8A82"/><rect x="0" y="2" width="1" height="1" fill="#4E8A82"/><rect x="4" y="2" width="1" height="1" fill="#4E8A82"/><rect x="11" y="2" width="1" height="1" fill="#4E8A82"/><rect x="0" y="3" width="2" height="1" fill="#4E8A82"/><rect x="3" y="3" width="1" height="1" fill="#4E8A82"/><rect x="11" y="3" width="1" height="1" fill="#4E8A82"/><rect x="0" y="4" width="3" height="1" fill="#4E8A82"/><rect x="11" y="4" width="1" height="1" fill="#4E8A82"/><rect x="0" y="5" width="4" height="1" fill="#4E8A82"/><rect x="11" y="5" width="1" height="1" fill="#4E8A82"/><rect x="0" y="6" width="5" height="1" fill="#4E8A82"/><rect x="10" y="6" width="1" height="1" fill="#4E8A82"/><rect x="8" y="7" width="2" height="1" fill="#4E8A82"/></svg>
<svg style="left:282px;top:52px;" width="16" height="14" viewBox="0 0 16 14" shape-rendering="crispEdges"><rect x="3" y="0" width="6" height="1" fill="#4E8A82"/><rect x="2" y="1" width="8" height="1" fill="#4E8A82"/><rect x="1" y="2" width="1" height="1" fill="#4E8A82"/><rect x="2" y="2" width="2" height="1" fill="#C8E4DC"/><rect x="4" y="2" width="8" height="1" fill="#4E8A82"/><rect x="0" y="3" width="2" height="1" fill="#4E8A82"/><rect x="2" y="3" width="1" height="1" fill="#C8E4DC"/><rect x="3" y="3" width="9" height="1" fill="#4E8A82"/><rect x="0" y="4" width="2" height="1" fill="#4E8A82"/><rect x="2" y="4" width="2" height="1" fill="#C8E4DC"/><rect x="4" y="4" width="5" height="1" fill="#4E8A82"/><rect x="9" y="4" width="1" height="1" fill="#C8E4DC"/><rect x="10" y="4" width="2" height="1" fill="#4E8A82"/><rect x="0" y="5" width="11" height="1" fill="#4E8A82"/><rect x="0" y="6" width="10" height="1" fill="#4E8A82"/><rect x="10" y="6" width="1" height="1" fill="#C8E4DC"/><rect x="11" y="6" width="1" height="1" fill="#4E8A82"/><rect x="0" y="7" width="12" height="1" fill="#4E8A82"/><rect x="1" y="8" width="8" height="1" fill="#4E8A82"/><rect x="2" y="9" width="5" height="1" fill="#4E8A82"/><rect x="7" y="9" width="7" height="1" fill="#C8E4DC"/><rect x="4" y="10" width="1" height="1" fill="#4E8A82"/><rect x="5" y="10" width="2" height="1" fill="#C8E4DC"/><rect x="7" y="10" width="7" height="1" fill="#4E8A82"/><rect x="14" y="10" width="2" height="1" fill="#C8E4DC"/><rect x="4" y="11" width="1" height="1" fill="#C8E4DC"/><rect x="5" y="11" width="3" height="1" fill="#4E8A82"/><rect x="8" y="11" width="3" height="1" fill="#C8E4DC"/><rect x="11" y="11" width="3" height="1" fill="#4E8A82"/><rect x="14" y="11" width="1" height="1" fill="#C8E4DC"/><rect x="4" y="12" width="1" height="1" fill="#4E8A82"/><rect x="5" y="12" width="2" height="1" fill="#C8E4DC"/><rect x="7" y="12" width="7" height="1" fill="#4E8A82"/><rect x="14" y="12" width="2" height="1" fill="#C8E4DC"/><rect x="6" y="13" width="8" height="1" fill="#C8E4DC"/></svg>
<svg style="left:312px;top:52px;" width="13" height="13" viewBox="0 0 13 13" shape-rendering="crispEdges"><rect x="3" y="0" width="1" height="1" fill="#4040C0"/><rect x="10" y="0" width="1" height="1" fill="#404040"/><rect x="2" y="1" width="3" height="1" fill="#4040C0"/><rect x="10" y="1" width="1" height="1" fill="#404040"/><rect x="2" y="2" width="1" height="1" fill="#4040C0"/><rect x="4" y="2" width="1" height="1" fill="#4040C0"/><rect x="10" y="2" width="1" height="1" fill="#404040"/><rect x="1" y="3" width="5" height="1" fill="#4040C0"/><rect x="10" y="3" width="1" height="1" fill="#404040"/><rect x="1" y="4" width="1" height="1" fill="#4040C0"/><rect x="5" y="4" width="1" height="1" fill="#4040C0"/><rect x="10" y="4" width="1" height="1" fill="#404040"/><rect x="0" y="5" width="3" height="1" fill="#4040C0"/><rect x="4" y="5" width="3" height="1" fill="#4040C0"/><rect x="10" y="5" width="1" height="1" fill="#404040"/><rect x="10" y="6" width="1" height="1" fill="#404040"/><rect x="1" y="7" width="5" height="1" fill="#D84040"/><rect x="10" y="7" width="1" height="1" fill="#404040"/><rect x="0" y="8" width="2" height="1" fill="#D84040"/><rect x="4" y="8" width="2" height="1" fill="#D84040"/><rect x="8" y="8" width="5" height="1" fill="#404040"/><rect x="1" y="9" width="5" height="1" fill="#D84040"/><rect x="9" y="9" width="3" height="1" fill="#404040"/><rect x="3" y="10" width="3" height="1" fill="#D84040"/><rect x="9" y="10" width="3" height="1" fill="#404040"/><rect x="2" y="11" width="1" height="1" fill="#D84040"/><rect x="4" y="11" width="2" height="1" fill="#D84040"/><rect x="10" y="11" width="1" height="1" fill="#404040"/><rect x="0" y="12" width="3" height="1" fill="#D84040"/><rect x="4" y="12" width="3" height="1" fill="#D84040"/><rect x="10" y="12" width="1" height="1" fill="#404040"/></svg>
<svg style="left:335px;top:52px;" width="13" height="13" viewBox="0 0 13 13" shape-rendering="crispEdges"><rect x="1" y="0" width="5" height="1" fill="#D84040"/><rect x="10" y="0" width="1" height="1" fill="#404040"/><rect x="0" y="1" width="2" height="1" fill="#D84040"/><rect x="4" y="1" width="2" height="1" fill="#D84040"/><rect x="10" y="1" width="1" height="1" fill="#404040"/><rect x="1" y="2" width="5" height="1" fill="#D84040"/><rect x="10" y="2" width="1" height="1" fill="#404040"/><rect x="3" y="3" width="3" height="1" fill="#D84040"/><rect x="10" y="3" width="1" height="1" fill="#404040"/><rect x="2" y="4" width="1" height="1" fill="#D84040"/><rect x="4" y="4" width="2" height="1" fill="#D84040"/><rect x="10" y="4" width="1" height="1" fill="#404040"/><rect x="0" y="5" width="3" height="1" fill="#D84040"/><rect x="4" y="5" width="3" height="1" fill="#D84040"/><rect x="10" y="5" width="1" height="1" fill="#404040"/><rect x="10" y="6" width="1" height="1" fill="#404040"/><rect x="3" y="7" width="1" height="1" fill="#4040C0"/><rect x="10" y="7" width="1" height="1" fill="#404040"/><rect x="2" y="8" width="3" height="1" fill="#4040C0"/><rect x="8" y="8" width="5" height="1" fill="#404040"/><rect x="2" y="9" width="1" height="1" fill="#4040C0"/><rect x="4" y="9" width="1" height="1" fill="#4040C0"/><rect x="9" y="9" width="3" height="1" fill="#404040"/><rect x="1" y="10" width="5" height="1" fill="#4040C0"/><rect x="9" y="10" width="3" height="1" fill="#404040"/><rect x="1" y="11" width="1" height="1" fill="#4040C0"/><rect x="5" y="11" width="1" height="1" fill="#4040C0"/><rect x="10" y="11" width="1" height="1" fill="#404040"/><rect x="0" y="12" width="3" height="1" fill="#4040C0"/><rect x="4" y="12" width="3" height="1" fill="#4040C0"/><rect x="10" y="12" width="1" height="1" fill="#404040"/></svg>
<svg style="left:363px;top:52px;" width="16" height="14" viewBox="0 0 16 14" shape-rendering="crispEdges"><rect x="0" y="0" width="9" height="1" fill="#404040"/><rect x="0" y="1" width="1" height="1" fill="#404040"/><rect x="1" y="1" width="6" height="1" fill="#E0E0E0"/><rect x="7" y="1" width="1" height="1" fill="#00FFFF"/><rect x="8" y="1" width="1" height="1" fill="#404040"/><rect x="1" y="2" width="1" height="1" fill="#404040"/><rect x="2" y="2" width="4" height="1" fill="#E0E0E0"/><rect x="6" y="2" width="1" height="1" fill="#00FFFF"/><rect x="7" y="2" width="1" height="1" fill="#404040"/><rect x="2" y="3" width="1" height="1" fill="#404040"/><rect x="3" y="3" width="2" height="1" fill="#E0E0E0"/><rect x="5" y="3" width="1" height="1" fill="#00FFFF"/><rect x="6" y="3" width="1" height="1" fill="#404040"/><rect x="10" y="3" width="3" height="1" fill="#404040"/><rect x="3" y="4" width="1" height="1" fill="#404040"/><rect x="4" y="4" width="1" height="1" fill="#E0E0E0"/><rect x="5" y="4" width="1" height="1" fill="#00FFFF"/><rect x="6" y="4" width="1" height="1" fill="#404040"/><rect x="9" y="4" width="1" height="1" fill="#404040"/><rect x="10" y="4" width="2" height="1" fill="#FFFF00"/><rect x="12" y="4" width="1" height="1" fill="#404040"/><rect x="3" y="5" width="1" height="1" fill="#404040"/><rect x="4" y="5" width="1" height="1" fill="#E0E0E0"/><rect x="5" y="5" width="1" height="1" fill="#404040"/><rect x="8" y="5" width="1" height="1" fill="#404040"/><rect x="9" y="5" width="2" height="1" fill="#FFFF00"/><rect x="11" y="5" width="1" height="1" fill="#404040"/><rect x="3" y="6" width="1" height="1" fill="#404040"/><rect x="4" y="6" width="1" height="1" fill="#00FFFF"/><rect x="5" y="6" width="1" height="1" fill="#404040"/><rect x="7" y="6" width="1" height="1" fill="#404040"/><rect x="8" y="6" width="2" height="1" fill="#FFFF00"/><rect x="10" y="6" width="1" height="1" fill="#404040"/><rect x="3" y="7" width="2" height="1" fill="#404040"/><rect x="6" y="7" width="1" height="1" fill="#404040"/><rect x="7" y="7" width="3" height="1" fill="#FFFF00"/><rect x="10" y="7" width="3" height="1" fill="#404040"/><rect x="5" y="8" width="1" height="1" fill="#404040"/><rect x="6" y="8" width="3" height="1" fill="#FFFFFF"/><rect x="9" y="8" width="3" height="1" fill="#FFFF00"/><rect x="12" y="8" width="1" height="1" fill="#404040"/><rect x="5" y="9" width="4" height="1" fill="#404040"/><rect x="9" y="9" width="2" height="1" fill="#FFFF00"/><rect x="11" y="9" width="1" height="1" fill="#404040"/><rect x="8" y="10" width="1" height="1" fill="#404040"/><rect x="9" y="10" width="1" height="1" fill="#FFFF00"/><rect x="10" y="10" width="1" height="1" fill="#404040"/><rect x="7" y="11" width="1" height="1" fill="#404040"/><rect x="8" y="11" width="1" height="1" fill="#FFFF00"/><rect x="9" y="11" width="1" height="1" fill="#404040"/><rect x="6" y="12" width="1" height="1" fill="#404040"/><rect x="7" y="12" width="1" height="1" fill="#FFFF00"/><rect x="8" y="12" width="1" height="1" fill="#404040"/><rect x="6" y="13" width="2" height="1" fill="#404040"/></svg>
<svg style="left:386px;top:52px;" width="16" height="15" viewBox="0 0 16 15" shape-rendering="crispEdges"><rect x="0" y="0" width="9" height="1" fill="#404040"/><rect x="0" y="1" width="1" height="1" fill="#404040"/><rect x="1" y="1" width="6" height="1" fill="#E0E0E0"/><rect x="7" y="1" width="1" height="1" fill="#00FFFF"/><rect x="8" y="1" width="1" height="1" fill="#404040"/><rect x="1" y="2" width="1" height="1" fill="#404040"/><rect x="2" y="2" width="4" height="1" fill="#E0E0E0"/><rect x="6" y="2" width="1" height="1" fill="#00FFFF"/><rect x="7" y="2" width="1" height="1" fill="#404040"/><rect x="2" y="3" width="1" height="1" fill="#404040"/><rect x="3" y="3" width="2" height="1" fill="#E0E0E0"/><rect x="5" y="3" width="1" height="1" fill="#00FFFF"/><rect x="6" y="3" width="1" height="1" fill="#404040"/><rect x="7" y="3" width="9" height="1" fill="#000080"/><rect x="3" y="4" width="1" height="1" fill="#404040"/><rect x="4" y="4" width="1" height="1" fill="#E0E0E0"/><rect x="5" y="4" width="1" height="1" fill="#00FFFF"/><rect x="6" y="4" width="1" height="1" fill="#404040"/><rect x="7" y="4" width="9" height="1" fill="#000080"/><rect x="3" y="5" width="1" height="1" fill="#404040"/><rect x="4" y="5" width="1" height="1" fill="#E0E0E0"/><rect x="5" y="5" width="1" height="1" fill="#404040"/><rect x="6" y="5" width="9" height="1" fill="#FFFFFF"/><rect x="15" y="5" width="1" height="1" fill="#404040"/><rect x="3" y="6" width="1" height="1" fill="#404040"/><rect x="4" y="6" width="1" height="1" fill="#00FFFF"/><rect x="5" y="6" width="1" height="1" fill="#404040"/><rect x="6" y="6" width="4" height="1" fill="#FFFFFF"/><rect x="10" y="6" width="3" height="1" fill="#404040"/><rect x="13" y="6" width="2" height="1" fill="#FFFFFF"/><rect x="15" y="6" width="1" height="1" fill="#404040"/><rect x="3" y="7" width="2" height="1" fill="#404040"/><rect x="6" y="7" width="1" height="1" fill="#404040"/><rect x="7" y="7" width="3" height="1" fill="#FFFFFF"/><rect x="10" y="7" width="1" height="1" fill="#404040"/><rect x="11" y="7" width="1" height="1" fill="#FFFFFF"/><rect x="12" y="7" width="1" height="1" fill="#404040"/><rect x="13" y="7" width="2" height="1" fill="#FFFFFF"/><rect x="15" y="7" width="1" height="1" fill="#404040"/><rect x="6" y="8" width="1" height="1" fill="#404040"/><rect x="7" y="8" width="3" height="1" fill="#FFFFFF"/><rect x="10" y="8" width="3" height="1" fill="#404040"/><rect x="13" y="8" width="2" height="1" fill="#FFFFFF"/><rect x="15" y="8" width="1" height="1" fill="#404040"/><rect x="6" y="9" width="4" height="1" fill="#404040"/><rect x="10" y="9" width="5" height="1" fill="#FFFFFF"/><rect x="15" y="9" width="1" height="1" fill="#404040"/><rect x="6" y="10" width="1" height="1" fill="#404040"/><rect x="7" y="10" width="8" height="1" fill="#FFFFFF"/><rect x="15" y="10" width="1" height="1" fill="#404040"/><rect x="6" y="11" width="1" height="1" fill="#404040"/><rect x="7" y="11" width="3" height="1" fill="#FFFFFF"/><rect x="10" y="11" width="3" height="1" fill="#404040"/><rect x="13" y="11" width="2" height="1" fill="#FFFFFF"/><rect x="15" y="11" width="1" height="1" fill="#404040"/><rect x="6" y="12" width="1" height="1" fill="#404040"/><rect x="7" y="12" width="3" height="1" fill="#FFFFFF"/><rect x="10" y="12" width="1" height="1" fill="#404040"/><rect x="11" y="12" width="1" height="1" fill="#FFFFFF"/><rect x="12" y="12" width="1" height="1" fill="#404040"/><rect x="13" y="12" width="2" height="1" fill="#FFFFFF"/><rect x="15" y="12" width="1" height="1" fill="#404040"/><rect x="6" y="13" width="1" height="1" fill="#404040"/><rect x="7" y="13" width="3" height="1" fill="#FFFFFF"/><rect x="10" y="13" width="3" height="1" fill="#404040"/><rect x="13" y="13" width="2" height="1" fill="#FFFFFF"/><rect x="15" y="13" width="1" height="1" fill="#404040"/><rect x="6" y="14" width="10" height="1" fill="#404040"/></svg>
<svg style="left:410px;top:53px;" width="14" height="10" viewBox="0 0 14 10" shape-rendering="crispEdges"><rect x="0" y="0" width="14" height="1" fill="#4E8A82"/><rect x="1" y="1" width="1" height="1" fill="#4E8A82"/><rect x="12" y="1" width="1" height="1" fill="#4E8A82"/><rect x="2" y="2" width="1" height="1" fill="#4E8A82"/><rect x="11" y="2" width="1" height="1" fill="#4E8A82"/><rect x="3" y="3" width="1" height="1" fill="#4E8A82"/><rect x="10" y="3" width="1" height="1" fill="#4E8A82"/><rect x="4" y="4" width="1" height="1" fill="#4E8A82"/><rect x="9" y="4" width="1" height="1" fill="#4E8A82"/><rect x="5" y="5" width="1" height="1" fill="#4E8A82"/><rect x="8" y="5" width="1" height="1" fill="#4E8A82"/><rect x="5" y="6" width="1" height="1" fill="#4E8A82"/><rect x="8" y="6" width="1" height="1" fill="#4E8A82"/><rect x="5" y="7" width="1" height="1" fill="#4E8A82"/><rect x="8" y="7" width="1" height="1" fill="#4E8A82"/><rect x="5" y="8" width="1" height="1" fill="#4E8A82"/><rect x="8" y="8" width="1" height="1" fill="#4E8A82"/><rect x="5" y="9" width="4" height="1" fill="#4E8A82"/></svg>
<svg style="left:438px;top:52px;" width="17" height="13" viewBox="0 0 17 13" shape-rendering="crispEdges"><rect x="3" y="0" width="3" height="1" fill="#404040"/><rect x="10" y="0" width="3" height="1" fill="#404040"/><rect x="3" y="1" width="1" height="1" fill="#404040"/><rect x="4" y="1" width="1" height="1" fill="#FFFFFF"/><rect x="5" y="1" width="1" height="1" fill="#404040"/><rect x="10" y="1" width="1" height="1" fill="#404040"/><rect x="11" y="1" width="1" height="1" fill="#FFFFFF"/><rect x="12" y="1" width="1" height="1" fill="#404040"/><rect x="3" y="2" width="3" height="1" fill="#404040"/><rect x="10" y="2" width="3" height="1" fill="#404040"/><rect x="2" y="3" width="5" height="1" fill="#404040"/><rect x="9" y="3" width="5" height="1" fill="#404040"/><rect x="2" y="4" width="1" height="1" fill="#404040"/><rect x="3" y="4" width="1" height="1" fill="#FFFFFF"/><rect x="4" y="4" width="4" height="1" fill="#404040"/><rect x="9" y="4" width="1" height="1" fill="#404040"/><rect x="10" y="4" width="1" height="1" fill="#FFFFFF"/><rect x="11" y="4" width="4" height="1" fill="#404040"/><rect x="1" y="5" width="14" height="1" fill="#404040"/><rect x="1" y="6" width="2" height="1" fill="#404040"/><rect x="3" y="6" width="1" height="1" fill="#FFFFFF"/><rect x="4" y="6" width="3" height="1" fill="#404040"/><rect x="7" y="6" width="1" height="1" fill="#FFFFFF"/><rect x="8" y="6" width="3" height="1" fill="#404040"/><rect x="11" y="6" width="1" height="1" fill="#FFFFFF"/><rect x="12" y="6" width="4" height="1" fill="#404040"/><rect x="1" y="7" width="2" height="1" fill="#404040"/><rect x="3" y="7" width="1" height="1" fill="#FFFFFF"/><rect x="4" y="7" width="2" height="1" fill="#404040"/><rect x="7" y="7" width="1" height="1" fill="#404040"/><rect x="9" y="7" width="2" height="1" fill="#404040"/><rect x="11" y="7" width="1" height="1" fill="#FFFFFF"/><rect x="12" y="7" width="4" height="1" fill="#404040"/><rect x="0" y="8" width="3" height="1" fill="#404040"/><rect x="3" y="8" width="1" height="1" fill="#FFFFFF"/><rect x="4" y="8" width="2" height="1" fill="#404040"/><rect x="9" y="8" width="3" height="1" fill="#404040"/><rect x="12" y="8" width="1" height="1" fill="#FFFFFF"/><rect x="13" y="8" width="4" height="1" fill="#404040"/><rect x="0" y="9" width="6" height="1" fill="#404040"/><rect x="9" y="9" width="8" height="1" fill="#404040"/><rect x="0" y="10" width="2" height="1" fill="#404040"/><rect x="2" y="10" width="1" height="1" fill="#FFFFFF"/><rect x="3" y="10" width="3" height="1" fill="#404040"/><rect x="9" y="10" width="2" height="1" fill="#404040"/><rect x="11" y="10" width="1" height="1" fill="#FFFFFF"/><rect x="12" y="10" width="4" height="1" fill="#404040"/><rect x="0" y="11" width="2" height="1" fill="#404040"/><rect x="2" y="11" width="1" height="1" fill="#FFFFFF"/><rect x="3" y="11" width="3" height="1" fill="#404040"/><rect x="9" y="11" width="2" height="1" fill="#404040"/><rect x="11" y="11" width="1" height="1" fill="#FFFFFF"/><rect x="12" y="11" width="4" height="1" fill="#404040"/><rect x="0" y="12" width="6" height="1" fill="#404040"/><rect x="9" y="12" width="6" height="1" fill="#404040"/></svg>
<svg style="left:467px;top:54px;" width="13" height="10" viewBox="0 0 13 10" shape-rendering="crispEdges"><rect x="0" y="0" width="1" height="1" fill="#D84040"/><rect x="0" y="1" width="2" height="1" fill="#D84040"/><rect x="9" y="1" width="1" height="1" fill="#4040C0"/><rect x="0" y="2" width="3" height="1" fill="#D84040"/><rect x="6" y="2" width="1" height="1" fill="#4040C0"/><rect x="9" y="2" width="1" height="1" fill="#4040C0"/><rect x="12" y="2" width="1" height="1" fill="#4040C0"/><rect x="0" y="3" width="4" height="1" fill="#D84040"/><rect x="7" y="3" width="1" height="1" fill="#4040C0"/><rect x="9" y="3" width="1" height="1" fill="#4040C0"/><rect x="11" y="3" width="1" height="1" fill="#4040C0"/><rect x="0" y="4" width="5" height="1" fill="#D84040"/><rect x="8" y="4" width="3" height="1" fill="#4040C0"/><rect x="0" y="5" width="5" height="1" fill="#D84040"/><rect x="6" y="5" width="7" height="1" fill="#4040C0"/><rect x="0" y="6" width="4" height="1" fill="#D84040"/><rect x="8" y="6" width="3" height="1" fill="#4040C0"/><rect x="0" y="7" width="3" height="1" fill="#D84040"/><rect x="7" y="7" width="1" height="1" fill="#4040C0"/><rect x="9" y="7" width="1" height="1" fill="#4040C0"/><rect x="11" y="7" width="1" height="1" fill="#4040C0"/><rect x="0" y="8" width="2" height="1" fill="#D84040"/><rect x="6" y="8" width="1" height="1" fill="#4040C0"/><rect x="9" y="8" width="1" height="1" fill="#4040C0"/><rect x="12" y="8" width="1" height="1" fill="#4040C0"/><rect x="0" y="9" width="1" height="1" fill="#D84040"/><rect x="9" y="9" width="1" height="1" fill="#4040C0"/></svg>
<svg style="left:490px;top:52px;" width="15" height="11" viewBox="0 0 15 11" shape-rendering="crispEdges"><rect x="14" y="0" width="1" height="1" fill="#D84040"/><rect x="0" y="1" width="1" height="1" fill="#D84040"/><rect x="13" y="1" width="2" height="1" fill="#D84040"/><rect x="0" y="2" width="2" height="1" fill="#D84040"/><rect x="7" y="2" width="1" height="1" fill="#D84040"/><rect x="12" y="2" width="2" height="1" fill="#D84040"/><rect x="0" y="3" width="3" height="1" fill="#D84040"/><rect x="8" y="3" width="1" height="1" fill="#D84040"/><rect x="11" y="3" width="2" height="1" fill="#D84040"/><rect x="0" y="4" width="4" height="1" fill="#D84040"/><rect x="9" y="4" width="3" height="1" fill="#D84040"/><rect x="0" y="5" width="5" height="1" fill="#D84040"/><rect x="9" y="5" width="2" height="1" fill="#D84040"/><rect x="0" y="6" width="5" height="1" fill="#D84040"/><rect x="8" y="6" width="4" height="1" fill="#D84040"/><rect x="0" y="7" width="4" height="1" fill="#D84040"/><rect x="7" y="7" width="2" height="1" fill="#D84040"/><rect x="11" y="7" width="2" height="1" fill="#D84040"/><rect x="0" y="8" width="3" height="1" fill="#D84040"/><rect x="6" y="8" width="2" height="1" fill="#D84040"/><rect x="12" y="8" width="2" height="1" fill="#D84040"/><rect x="0" y="9" width="2" height="1" fill="#D84040"/><rect x="5" y="9" width="2" height="1" fill="#D84040"/><rect x="13" y="9" width="1" height="1" fill="#D84040"/><rect x="0" y="10" width="1" height="1" fill="#D84040"/><rect x="5" y="10" width="1" height="1" fill="#D84040"/></svg>
<svg style="left:519px;top:51px;" width="16" height="15" viewBox="0 0 16 15" shape-rendering="crispEdges"><rect x="2" y="0" width="10" height="1" fill="#000080"/><rect x="2" y="1" width="10" height="1" fill="#000080"/><rect x="2" y="2" width="1" height="1" fill="#000000"/><rect x="3" y="2" width="8" height="1" fill="#FFFFFF"/><rect x="11" y="2" width="1" height="1" fill="#000000"/><rect x="2" y="3" width="1" height="1" fill="#000000"/><rect x="3" y="3" width="2" height="1" fill="#FFFFFF"/><rect x="5" y="3" width="11" height="1" fill="#000080"/><rect x="2" y="4" width="1" height="1" fill="#000000"/><rect x="3" y="4" width="2" height="1" fill="#FFFFFF"/><rect x="5" y="4" width="11" height="1" fill="#000080"/><rect x="0" y="5" width="5" height="1" fill="#000080"/><rect x="5" y="5" width="10" height="1" fill="#FFFFFF"/><rect x="15" y="5" width="1" height="1" fill="#000000"/><rect x="0" y="6" width="5" height="1" fill="#000080"/><rect x="5" y="6" width="1" height="1" fill="#FFFFFF"/><rect x="6" y="6" width="2" height="1" fill="#808080"/><rect x="8" y="6" width="1" height="1" fill="#FFFFFF"/><rect x="9" y="6" width="2" height="1" fill="#808080"/><rect x="11" y="6" width="1" height="1" fill="#FFFFFF"/><rect x="12" y="6" width="2" height="1" fill="#808080"/><rect x="14" y="6" width="1" height="1" fill="#FFFFFF"/><rect x="15" y="6" width="1" height="1" fill="#000000"/><rect x="0" y="7" width="1" height="1" fill="#000000"/><rect x="1" y="7" width="3" height="1" fill="#FFFFFF"/><rect x="4" y="7" width="1" height="1" fill="#000000"/><rect x="5" y="7" width="10" height="1" fill="#FFFFFF"/><rect x="15" y="7" width="1" height="1" fill="#000000"/><rect x="0" y="8" width="1" height="1" fill="#000000"/><rect x="1" y="8" width="1" height="1" fill="#FFFFFF"/><rect x="2" y="8" width="2" height="1" fill="#808080"/><rect x="4" y="8" width="1" height="1" fill="#000000"/><rect x="5" y="8" width="1" height="1" fill="#FFFFFF"/><rect x="6" y="8" width="2" height="1" fill="#808080"/><rect x="8" y="8" width="1" height="1" fill="#FFFFFF"/><rect x="9" y="8" width="2" height="1" fill="#808080"/><rect x="11" y="8" width="1" height="1" fill="#FFFFFF"/><rect x="12" y="8" width="2" height="1" fill="#808080"/><rect x="14" y="8" width="1" height="1" fill="#FFFFFF"/><rect x="15" y="8" width="1" height="1" fill="#000000"/><rect x="0" y="9" width="1" height="1" fill="#000000"/><rect x="1" y="9" width="3" height="1" fill="#FFFFFF"/><rect x="4" y="9" width="1" height="1" fill="#000000"/><rect x="5" y="9" width="10" height="1" fill="#FFFFFF"/><rect x="15" y="9" width="1" height="1" fill="#000000"/><rect x="0" y="10" width="1" height="1" fill="#000000"/><rect x="1" y="10" width="1" height="1" fill="#FFFFFF"/><rect x="2" y="10" width="2" height="1" fill="#808080"/><rect x="4" y="10" width="1" height="1" fill="#000000"/><rect x="5" y="10" width="1" height="1" fill="#FFFFFF"/><rect x="6" y="10" width="2" height="1" fill="#808080"/><rect x="8" y="10" width="1" height="1" fill="#FFFFFF"/><rect x="9" y="10" width="2" height="1" fill="#808080"/><rect x="11" y="10" width="1" height="1" fill="#FFFFFF"/><rect x="12" y="10" width="2" height="1" fill="#808080"/><rect x="14" y="10" width="1" height="1" fill="#FFFFFF"/><rect x="15" y="10" width="1" height="1" fill="#000000"/><rect x="0" y="11" width="1" height="1" fill="#000000"/><rect x="1" y="11" width="3" height="1" fill="#FFFFFF"/><rect x="4" y="11" width="1" height="1" fill="#000000"/><rect x="5" y="11" width="10" height="1" fill="#FFFFFF"/><rect x="15" y="11" width="1" height="1" fill="#000000"/><rect x="0" y="12" width="1" height="1" fill="#000000"/><rect x="1" y="12" width="1" height="1" fill="#FFFFFF"/><rect x="2" y="12" width="2" height="1" fill="#808080"/><rect x="4" y="12" width="12" height="1" fill="#000000"/><rect x="0" y="13" width="1" height="1" fill="#000000"/><rect x="1" y="13" width="9" height="1" fill="#FFFFFF"/><rect x="10" y="13" width="1" height="1" fill="#000000"/><rect x="0" y="14" width="11" height="1" fill="#000000"/></svg>
<svg style="left:542px;top:52px;" width="16" height="13" viewBox="0 0 16 13" shape-rendering="crispEdges"><rect x="6" y="0" width="3" height="1" fill="#404040"/><rect x="5" y="1" width="1" height="1" fill="#404040"/><rect x="6" y="1" width="2" height="1" fill="#FFFF00"/><rect x="8" y="1" width="1" height="1" fill="#404040"/><rect x="4" y="2" width="1" height="1" fill="#404040"/><rect x="5" y="2" width="2" height="1" fill="#FFFF00"/><rect x="7" y="2" width="1" height="1" fill="#404040"/><rect x="8" y="2" width="8" height="1" fill="#000080"/><rect x="3" y="3" width="1" height="1" fill="#404040"/><rect x="4" y="3" width="2" height="1" fill="#FFFF00"/><rect x="6" y="3" width="2" height="1" fill="#404040"/><rect x="8" y="3" width="8" height="1" fill="#000080"/><rect x="2" y="4" width="1" height="1" fill="#404040"/><rect x="3" y="4" width="5" height="1" fill="#FFFF00"/><rect x="8" y="4" width="2" height="1" fill="#404040"/><rect x="10" y="4" width="5" height="1" fill="#FFFFFF"/><rect x="15" y="4" width="1" height="1" fill="#404040"/><rect x="1" y="5" width="1" height="1" fill="#404040"/><rect x="2" y="5" width="2" height="1" fill="#FFFFFF"/><rect x="4" y="5" width="2" height="1" fill="#FFFF00"/><rect x="6" y="5" width="1" height="1" fill="#404040"/><rect x="7" y="5" width="3" height="1" fill="#FFFFFF"/><rect x="10" y="5" width="3" height="1" fill="#404040"/><rect x="13" y="5" width="2" height="1" fill="#FFFFFF"/><rect x="15" y="5" width="1" height="1" fill="#404040"/><rect x="2" y="6" width="2" height="1" fill="#404040"/><rect x="4" y="6" width="2" height="1" fill="#FFFF00"/><rect x="6" y="6" width="1" height="1" fill="#404040"/><rect x="7" y="6" width="3" height="1" fill="#FFFFFF"/><rect x="10" y="6" width="1" height="1" fill="#404040"/><rect x="11" y="6" width="1" height="1" fill="#FFFFFF"/><rect x="12" y="6" width="1" height="1" fill="#404040"/><rect x="13" y="6" width="2" height="1" fill="#FFFFFF"/><rect x="15" y="6" width="1" height="1" fill="#404040"/><rect x="3" y="7" width="1" height="1" fill="#404040"/><rect x="4" y="7" width="2" height="1" fill="#FFFF00"/><rect x="6" y="7" width="1" height="1" fill="#404040"/><rect x="7" y="7" width="3" height="1" fill="#FFFFFF"/><rect x="10" y="7" width="3" height="1" fill="#404040"/><rect x="13" y="7" width="2" height="1" fill="#FFFFFF"/><rect x="15" y="7" width="1" height="1" fill="#404040"/><rect x="3" y="8" width="1" height="1" fill="#404040"/><rect x="4" y="8" width="1" height="1" fill="#FFFF00"/><rect x="5" y="8" width="1" height="1" fill="#404040"/><rect x="6" y="8" width="9" height="1" fill="#FFFFFF"/><rect x="15" y="8" width="1" height="1" fill="#404040"/><rect x="2" y="9" width="1" height="1" fill="#404040"/><rect x="3" y="9" width="1" height="1" fill="#FFFF00"/><rect x="4" y="9" width="2" height="1" fill="#404040"/><rect x="6" y="9" width="4" height="1" fill="#FFFFFF"/><rect x="10" y="9" width="3" height="1" fill="#404040"/><rect x="13" y="9" width="2" height="1" fill="#FFFFFF"/><rect x="15" y="9" width="1" height="1" fill="#404040"/><rect x="2" y="10" width="3" height="1" fill="#404040"/><rect x="5" y="10" width="1" height="1" fill="#FFFFFF"/><rect x="6" y="10" width="1" height="1" fill="#404040"/><rect x="7" y="10" width="3" height="1" fill="#FFFFFF"/><rect x="10" y="10" width="1" height="1" fill="#404040"/><rect x="11" y="10" width="1" height="1" fill="#FFFFFF"/><rect x="12" y="10" width="1" height="1" fill="#404040"/><rect x="13" y="10" width="2" height="1" fill="#FFFFFF"/><rect x="15" y="10" width="1" height="1" fill="#404040"/><rect x="5" y="11" width="1" height="1" fill="#404040"/><rect x="6" y="11" width="4" height="1" fill="#FFFFFF"/><rect x="10" y="11" width="3" height="1" fill="#404040"/><rect x="13" y="11" width="2" height="1" fill="#FFFFFF"/><rect x="15" y="11" width="1" height="1" fill="#404040"/><rect x="5" y="12" width="11" height="1" fill="#404040"/></svg>
<svg style="left:564px;top:58px;" width="5" height="3" viewBox="0 0 5 3" shape-rendering="crispEdges"><rect x="0" y="0" width="5" height="1" fill="#000000"/><rect x="1" y="1" width="3" height="1" fill="#000000"/><rect x="2" y="2" width="1" height="1" fill="#000000"/></svg>
<svg style="left:584px;top:52px;" width="13" height="15" viewBox="0 0 13 15" shape-rendering="crispEdges"><rect x="0" y="0" width="12" height="1" fill="#404040"/><rect x="0" y="1" width="1" height="1" fill="#404040"/><rect x="1" y="1" width="1" height="1" fill="#FFFFFF"/><rect x="2" y="1" width="1" height="1" fill="#F8F0A0"/><rect x="3" y="1" width="1" height="1" fill="#FFFFFF"/><rect x="4" y="1" width="1" height="1" fill="#F8F0A0"/><rect x="5" y="1" width="1" height="1" fill="#FFFFFF"/><rect x="6" y="1" width="1" height="1" fill="#F8F0A0"/><rect x="7" y="1" width="1" height="1" fill="#FFFFFF"/><rect x="8" y="1" width="1" height="1" fill="#F8F0A0"/><rect x="9" y="1" width="1" height="1" fill="#FFFFFF"/><rect x="10" y="1" width="1" height="1" fill="#F8F0A0"/><rect x="11" y="1" width="2" height="1" fill="#404040"/><rect x="0" y="2" width="1" height="1" fill="#404040"/><rect x="1" y="2" width="1" height="1" fill="#F8F0A0"/><rect x="2" y="2" width="1" height="1" fill="#FFFFFF"/><rect x="3" y="2" width="1" height="1" fill="#F8F0A0"/><rect x="4" y="2" width="4" height="1" fill="#3030C0"/><rect x="8" y="2" width="1" height="1" fill="#FFFFFF"/><rect x="9" y="2" width="1" height="1" fill="#F8F0A0"/><rect x="10" y="2" width="1" height="1" fill="#FFFFFF"/><rect x="11" y="2" width="2" height="1" fill="#404040"/><rect x="0" y="3" width="1" height="1" fill="#404040"/><rect x="1" y="3" width="1" height="1" fill="#FFFFFF"/><rect x="2" y="3" width="1" height="1" fill="#F8F0A0"/><rect x="3" y="3" width="2" height="1" fill="#3030C0"/><rect x="5" y="3" width="1" height="1" fill="#F8F0A0"/><rect x="6" y="3" width="1" height="1" fill="#FFFFFF"/><rect x="7" y="3" width="2" height="1" fill="#3030C0"/><rect x="9" y="3" width="1" height="1" fill="#FFFFFF"/><rect x="10" y="3" width="1" height="1" fill="#F8F0A0"/><rect x="11" y="3" width="2" height="1" fill="#404040"/><rect x="0" y="4" width="1" height="1" fill="#404040"/><rect x="1" y="4" width="1" height="1" fill="#F8F0A0"/><rect x="2" y="4" width="1" height="1" fill="#FFFFFF"/><rect x="3" y="4" width="1" height="1" fill="#F8F0A0"/><rect x="4" y="4" width="1" height="1" fill="#FFFFFF"/><rect x="5" y="4" width="1" height="1" fill="#F8F0A0"/><rect x="6" y="4" width="1" height="1" fill="#FFFFFF"/><rect x="7" y="4" width="2" height="1" fill="#3030C0"/><rect x="9" y="4" width="1" height="1" fill="#F8F0A0"/><rect x="10" y="4" width="1" height="1" fill="#FFFFFF"/><rect x="11" y="4" width="2" height="1" fill="#404040"/><rect x="0" y="5" width="1" height="1" fill="#404040"/><rect x="1" y="5" width="1" height="1" fill="#FFFFFF"/><rect x="2" y="5" width="1" height="1" fill="#F8F0A0"/><rect x="3" y="5" width="1" height="1" fill="#FFFFFF"/><rect x="4" y="5" width="1" height="1" fill="#F8F0A0"/><rect x="5" y="5" width="1" height="1" fill="#FFFFFF"/><rect x="6" y="5" width="2" height="1" fill="#3030C0"/><rect x="8" y="5" width="1" height="1" fill="#F8F0A0"/><rect x="9" y="5" width="1" height="1" fill="#FFFFFF"/><rect x="10" y="5" width="1" height="1" fill="#F8F0A0"/><rect x="11" y="5" width="2" height="1" fill="#404040"/><rect x="0" y="6" width="1" height="1" fill="#404040"/><rect x="1" y="6" width="1" height="1" fill="#F8F0A0"/><rect x="2" y="6" width="1" height="1" fill="#FFFFFF"/><rect x="3" y="6" width="1" height="1" fill="#F8F0A0"/><rect x="4" y="6" width="1" height="1" fill="#FFFFFF"/><rect x="5" y="6" width="2" height="1" fill="#3030C0"/><rect x="7" y="6" width="1" height="1" fill="#F8F0A0"/><rect x="8" y="6" width="1" height="1" fill="#FFFFFF"/><rect x="9" y="6" width="1" height="1" fill="#F8F0A0"/><rect x="10" y="6" width="1" height="1" fill="#FFFFFF"/><rect x="11" y="6" width="2" height="1" fill="#404040"/><rect x="0" y="7" width="1" height="1" fill="#404040"/><rect x="1" y="7" width="1" height="1" fill="#FFFFFF"/><rect x="2" y="7" width="1" height="1" fill="#F8F0A0"/><rect x="3" y="7" width="1" height="1" fill="#FFFFFF"/><rect x="4" y="7" width="1" height="1" fill="#F8F0A0"/><rect x="5" y="7" width="2" height="1" fill="#3030C0"/><rect x="7" y="7" width="1" height="1" fill="#FFFFFF"/><rect x="8" y="7" width="1" height="1" fill="#F8F0A0"/><rect x="9" y="7" width="1" height="1" fill="#FFFFFF"/><rect x="10" y="7" width="1" height="1" fill="#F8F0A0"/><rect x="11" y="7" width="2" height="1" fill="#404040"/><rect x="0" y="8" width="1" height="1" fill="#404040"/><rect x="1" y="8" width="1" height="1" fill="#F8F0A0"/><rect x="2" y="8" width="1" height="1" fill="#FFFFFF"/><rect x="3" y="8" width="1" height="1" fill="#F8F0A0"/><rect x="4" y="8" width="1" height="1" fill="#FFFFFF"/><rect x="5" y="8" width="1" height="1" fill="#F8F0A0"/><rect x="6" y="8" width="1" height="1" fill="#FFFFFF"/><rect x="7" y="8" width="1" height="1" fill="#F8F0A0"/><rect x="8" y="8" width="1" height="1" fill="#FFFFFF"/><rect x="9" y="8" width="1" height="1" fill="#F8F0A0"/><rect x="10" y="8" width="1" height="1" fill="#FFFFFF"/><rect x="11" y="8" width="2" height="1" fill="#404040"/><rect x="0" y="9" width="1" height="1" fill="#404040"/><rect x="1" y="9" width="1" height="1" fill="#FFFFFF"/><rect x="2" y="9" width="1" height="1" fill="#F8F0A0"/><rect x="3" y="9" width="1" height="1" fill="#FFFFFF"/><rect x="4" y="9" width="1" height="1" fill="#F8F0A0"/><rect x="5" y="9" width="2" height="1" fill="#3030C0"/><rect x="7" y="9" width="1" height="1" fill="#FFFFFF"/><rect x="8" y="9" width="1" height="1" fill="#F8F0A0"/><rect x="9" y="9" width="1" height="1" fill="#FFFFFF"/><rect x="10" y="9" width="1" height="1" fill="#F8F0A0"/><rect x="11" y="9" width="2" height="1" fill="#404040"/><rect x="0" y="10" width="1" height="1" fill="#404040"/><rect x="1" y="10" width="1" height="1" fill="#F8F0A0"/><rect x="2" y="10" width="1" height="1" fill="#FFFFFF"/><rect x="3" y="10" width="1" height="1" fill="#F8F0A0"/><rect x="4" y="10" width="1" height="1" fill="#FFFFFF"/><rect x="5" y="10" width="2" height="1" fill="#3030C0"/><rect x="7" y="10" width="1" height="1" fill="#F8F0A0"/><rect x="8" y="10" width="1" height="1" fill="#FFFFFF"/><rect x="9" y="10" width="1" height="1" fill="#F8F0A0"/><rect x="10" y="10" width="1" height="1" fill="#FFFFFF"/><rect x="11" y="10" width="2" height="1" fill="#404040"/><rect x="0" y="11" width="6" height="1" fill="#404040"/><rect x="6" y="11" width="1" height="1" fill="#FFFFFF"/><rect x="7" y="11" width="5" height="1" fill="#404040"/><rect x="1" y="12" width="5" height="1" fill="#404040"/><rect x="6" y="12" width="1" height="1" fill="#FFFFFF"/><rect x="7" y="12" width="4" height="1" fill="#404040"/><rect x="6" y="13" width="2" height="1" fill="#404040"/><rect x="7" y="14" width="1" height="1" fill="#404040"/></svg>
<svg style="left:605px;top:63px;" width="5" height="3" viewBox="0 0 5 3" shape-rendering="crispEdges"><rect x="0" y="0" width="5" height="1" fill="#000000"/><rect x="1" y="1" width="3" height="1" fill="#000000"/><rect x="2" y="2" width="1" height="1" fill="#000000"/></svg>
<div style="left:0;top:72px;width:1152px;height:742px;background:#4E8A82;border-top:1px solid #4E8A82;border-left:1px solid #4E8A82"></div>
<div style="left:1px;top:73px;width:1151px;height:741px;border-top:1px solid #000;border-left:1px solid #000;border-right:1px solid #C8E4DC;border-bottom:1px solid #88C0B8"></div>
<div style="left:32px;top:83px;width:480px;height:100px;background:#88C0B8;border:1px solid;border-color:#88C0B8 #000 #000 #88C0B8;box-shadow:inset 1px 1px 0 #C8E4DC,inset -1px -1px 0 #4E8A82"></div>
<div style="left:36px;top:87px;width:472px;height:18px;background:#4E8A82"></div>
<svg style="left:38px;top:88px;" width="16" height="15" viewBox="0 0 16 15" shape-rendering="crispEdges"><rect x="2" y="0" width="10" height="1" fill="#000080"/><rect x="2" y="1" width="10" height="1" fill="#000080"/><rect x="2" y="2" width="1" height="1" fill="#000000"/><rect x="3" y="2" width="8" height="1" fill="#FFFFFF"/><rect x="11" y="2" width="1" height="1" fill="#000000"/><rect x="2" y="3" width="1" height="1" fill="#000000"/><rect x="3" y="3" width="2" height="1" fill="#FFFFFF"/><rect x="5" y="3" width="11" height="1" fill="#000080"/><rect x="2" y="4" width="1" height="1" fill="#000000"/><rect x="3" y="4" width="2" height="1" fill="#FFFFFF"/><rect x="5" y="4" width="11" height="1" fill="#000080"/><rect x="0" y="5" width="5" height="1" fill="#000080"/><rect x="5" y="5" width="10" height="1" fill="#FFFFFF"/><rect x="15" y="5" width="1" height="1" fill="#000000"/><rect x="0" y="6" width="5" height="1" fill="#000080"/><rect x="5" y="6" width="1" height="1" fill="#FFFFFF"/><rect x="6" y="6" width="2" height="1" fill="#808080"/><rect x="8" y="6" width="1" height="1" fill="#FFFFFF"/><rect x="9" y="6" width="2" height="1" fill="#808080"/><rect x="11" y="6" width="1" height="1" fill="#FFFFFF"/><rect x="12" y="6" width="2" height="1" fill="#808080"/><rect x="14" y="6" width="1" height="1" fill="#FFFFFF"/><rect x="15" y="6" width="1" height="1" fill="#000000"/><rect x="0" y="7" width="1" height="1" fill="#000000"/><rect x="1" y="7" width="3" height="1" fill="#FFFFFF"/><rect x="4" y="7" width="1" height="1" fill="#000000"/><rect x="5" y="7" width="10" height="1" fill="#FFFFFF"/><rect x="15" y="7" width="1" height="1" fill="#000000"/><rect x="0" y="8" width="1" height="1" fill="#000000"/><rect x="1" y="8" width="1" height="1" fill="#FFFFFF"/><rect x="2" y="8" width="2" height="1" fill="#808080"/><rect x="4" y="8" width="1" height="1" fill="#000000"/><rect x="5" y="8" width="1" height="1" fill="#FFFFFF"/><rect x="6" y="8" width="2" height="1" fill="#808080"/><rect x="8" y="8" width="1" height="1" fill="#FFFFFF"/><rect x="9" y="8" width="2" height="1" fill="#808080"/><rect x="11" y="8" width="1" height="1" fill="#FFFFFF"/><rect x="12" y="8" width="2" height="1" fill="#808080"/><rect x="14" y="8" width="1" height="1" fill="#FFFFFF"/><rect x="15" y="8" width="1" height="1" fill="#000000"/><rect x="0" y="9" width="1" height="1" fill="#000000"/><rect x="1" y="9" width="3" height="1" fill="#FFFFFF"/><rect x="4" y="9" width="1" height="1" fill="#000000"/><rect x="5" y="9" width="10" height="1" fill="#FFFFFF"/><rect x="15" y="9" width="1" height="1" fill="#000000"/><rect x="0" y="10" width="1" height="1" fill="#000000"/><rect x="1" y="10" width="1" height="1" fill="#FFFFFF"/><rect x="2" y="10" width="2" height="1" fill="#808080"/><rect x="4" y="10" width="1" height="1" fill="#000000"/><rect x="5" y="10" width="1" height="1" fill="#FFFFFF"/><rect x="6" y="10" width="2" height="1" fill="#808080"/><rect x="8" y="10" width="1" height="1" fill="#FFFFFF"/><rect x="9" y="10" width="2" height="1" fill="#808080"/><rect x="11" y="10" width="1" height="1" fill="#FFFFFF"/><rect x="12" y="10" width="2" height="1" fill="#808080"/><rect x="14" y="10" width="1" height="1" fill="#FFFFFF"/><rect x="15" y="10" width="1" height="1" fill="#000000"/><rect x="0" y="11" width="1" height="1" fill="#000000"/><rect x="1" y="11" width="3" height="1" fill="#FFFFFF"/><rect x="4" y="11" width="1" height="1" fill="#000000"/><rect x="5" y="11" width="10" height="1" fill="#FFFFFF"/><rect x="15" y="11" width="1" height="1" fill="#000000"/><rect x="0" y="12" width="1" height="1" fill="#000000"/><rect x="1" y="12" width="1" height="1" fill="#FFFFFF"/><rect x="2" y="12" width="2" height="1" fill="#808080"/><rect x="4" y="12" width="12" height="1" fill="#000000"/><rect x="0" y="13" width="1" height="1" fill="#000000"/><rect x="1" y="13" width="9" height="1" fill="#FFFFFF"/><rect x="10" y="13" width="1" height="1" fill="#000000"/><rect x="0" y="14" width="11" height="1" fill="#000000"/></svg>
<div class="t" style="left:57px;top:90px;font-size:13px;font-weight:bold;line-height:14px;color:#C0C0C0;letter-spacing:1.1px">бд лекарственных препаратов : база данных (фор...</div>
<div style="left:292px;top:112px;width:1px;height:2px;background:#607070"></div><div style="left:321px;top:112px;width:1px;height:2px;background:#607070"></div>
<div class="rb" style="left:456px;top:89px;width:16px;height:14px;"></div>
<div style="left:460px;top:98px;width:6px;height:2px;background:#000"></div>
<div class="rb" style="left:472px;top:89px;width:16px;height:14px;"></div>
<svg style="left:475px;top:91px" width="9" height="9" viewBox="0 0 9 9" shape-rendering="crispEdges">
<path d="M0 0h9v9h-9z M1 2v6h7v-6z" fill="#000" fill-rule="evenodd"/></svg>
<div class="rb" style="left:490px;top:89px;width:16px;height:14px;"></div>
<svg style="left:494px;top:92px" width="8" height="7" viewBox="0 0 8 7" shape-rendering="crispEdges">
<path d="M0 0h2v1h-2z M6 0h2v1h-2z M1 1h2v1h-2z M5 1h2v1h-2z M2 2h4v1h-4z M3 3h2v1h-2z M2 4h4v1h-4z M1 5h2v1h-2z M5 5h2v1h-2z M0 6h2v1h-2z M6 6h2v1h-2z" fill="#000"/></svg>
<div style="left:20px;top:114px;width:1112px;height:699px;background:#88C0B8;border:1px solid;border-color:#88C0B8 #000 #000 #88C0B8;box-shadow:inset 1px 1px 0 #C8E4DC,inset -1px -1px 0 #4E8A82"></div>
<div style="left:24px;top:118px;width:1104px;height:18px;background:linear-gradient(to right,#000080,#00FFFF)"></div>
<svg style="left:28px;top:123px;" width="12" height="10" viewBox="0 0 12 10" shape-rendering="crispEdges"><rect x="0" y="0" width="1" height="1" fill="#000000"/><rect x="1" y="0" width="10" height="1" fill="#FFFFFF"/><rect x="11" y="0" width="1" height="1" fill="#000000"/><rect x="0" y="1" width="1" height="1" fill="#000000"/><rect x="1" y="1" width="1" height="1" fill="#FFFFFF"/><rect x="2" y="1" width="2" height="1" fill="#000000"/><rect x="4" y="1" width="1" height="1" fill="#FFFFFF"/><rect x="5" y="1" width="2" height="1" fill="#000000"/><rect x="7" y="1" width="1" height="1" fill="#FFFFFF"/><rect x="8" y="1" width="2" height="1" fill="#000000"/><rect x="10" y="1" width="1" height="1" fill="#FFFFFF"/><rect x="11" y="1" width="1" height="1" fill="#000000"/><rect x="0" y="2" width="1" height="1" fill="#000000"/><rect x="1" y="2" width="10" height="1" fill="#FFFFFF"/><rect x="11" y="2" width="1" height="1" fill="#000000"/><rect x="0" y="3" width="1" height="1" fill="#000000"/><rect x="1" y="3" width="1" height="1" fill="#FFFFFF"/><rect x="2" y="3" width="2" height="1" fill="#000000"/><rect x="4" y="3" width="1" height="1" fill="#FFFFFF"/><rect x="5" y="3" width="2" height="1" fill="#000000"/><rect x="7" y="3" width="1" height="1" fill="#FFFFFF"/><rect x="8" y="3" width="2" height="1" fill="#000000"/><rect x="10" y="3" width="1" height="1" fill="#FFFFFF"/><rect x="11" y="3" width="1" height="1" fill="#000000"/><rect x="0" y="4" width="1" height="1" fill="#000000"/><rect x="1" y="4" width="10" height="1" fill="#FFFFFF"/><rect x="11" y="4" width="1" height="1" fill="#000000"/><rect x="0" y="5" width="1" height="1" fill="#000000"/><rect x="1" y="5" width="1" height="1" fill="#FFFFFF"/><rect x="2" y="5" width="2" height="1" fill="#000000"/><rect x="4" y="5" width="1" height="1" fill="#FFFFFF"/><rect x="5" y="5" width="2" height="1" fill="#000000"/><rect x="7" y="5" width="1" height="1" fill="#FFFFFF"/><rect x="8" y="5" width="2" height="1" fill="#000000"/><rect x="10" y="5" width="1" height="1" fill="#FFFFFF"/><rect x="11" y="5" width="1" height="1" fill="#000000"/><rect x="0" y="6" width="1" height="1" fill="#000000"/><rect x="1" y="6" width="10" height="1" fill="#FFFFFF"/><rect x="11" y="6" width="1" height="1" fill="#000000"/><rect x="0" y="7" width="1" height="1" fill="#000000"/><rect x="1" y="7" width="1" height="1" fill="#FFFFFF"/><rect x="2" y="7" width="2" height="1" fill="#000000"/><rect x="4" y="7" width="1" height="1" fill="#FFFFFF"/><rect x="5" y="7" width="2" height="1" fill="#000000"/><rect x="7" y="7" width="1" height="1" fill="#FFFFFF"/><rect x="8" y="7" width="2" height="1" fill="#000000"/><rect x="10" y="7" width="1" height="1" fill="#FFFFFF"/><rect x="11" y="7" width="1" height="1" fill="#000000"/><rect x="0" y="8" width="1" height="1" fill="#000000"/><rect x="1" y="8" width="10" height="1" fill="#FFFFFF"/><rect x="11" y="8" width="1" height="1" fill="#000000"/><rect x="0" y="9" width="12" height="1" fill="#000000"/></svg>
<div class="t" style="left:45px;top:121px;font-size:13px;font-weight:bold;line-height:14px;color:#fff;letter-spacing:1.3px">лекарственные препараты : таблица</div>
<div class="rb" style="left:1076px;top:120px;width:16px;height:14px;"></div>
<div style="left:1080px;top:129px;width:6px;height:2px;background:#000"></div>
<div class="rb" style="left:1092px;top:120px;width:16px;height:14px;"></div>
<svg style="left:1095px;top:122px" width="9" height="9" viewBox="0 0 9 9" shape-rendering="crispEdges">
<path d="M0 0h9v9h-9z M1 2v6h7v-6z" fill="#000" fill-rule="evenodd"/></svg>
<div class="rb" style="left:1110px;top:120px;width:16px;height:14px;"></div>
<svg style="left:1114px;top:123px" width="8" height="7" viewBox="0 0 8 7" shape-rendering="crispEdges">
<path d="M0 0h2v1h-2z M6 0h2v1h-2z M1 1h2v1h-2z M5 1h2v1h-2z M2 2h4v1h-4z M3 3h2v1h-2z M2 4h4v1h-4z M1 5h2v1h-2z M5 5h2v1h-2z M0 6h2v1h-2z M6 6h2v1h-2z" fill="#000"/></svg>
<div style="left:24px;top:137px;width:1104px;height:672px;border-top:1px solid #4E8A82;border-left:1px solid #4E8A82;border-right:1px solid #C8E4DC;border-bottom:1px solid #C8E4DC"></div>
<div style="left:25px;top:138px;width:1102px;height:670px;border-top:1px solid #000;border-left:1px solid #000;border-right:1px solid #88C0B8;border-bottom:1px solid #88C0B8;background:#fff"></div>
<div style="left:26px;top:139px;width:1088px;height:654px;overflow:hidden;background:#fff">
<div style="left:0px;top:0px;width:1200px;height:21px;background:#88C0B8"></div>
<div style="left:0px;top:21px;width:1200px;height:1px;background:#000"></div>
<div style="left:0px;top:22px;width:23px;height:700px;background:#88C0B8"></div>
<div style="left:23px;top:0px;width:1px;height:700px;background:#000"></div>
<div style="left:0px;top:0px;width:1200px;height:1px;background:#C8E4DC"></div>
<div style="left:0px;top:0px;width:1px;height:21px;background:#C8E4DC"></div>
<div style="left:23px;top:0px;width:1px;height:21px;background:#000"></div>
<div style="left:24px;top:0px;width:1px;height:21px;background:#C8E4DC"></div>
<div style="left:61px;top:0px;width:1px;height:21px;background:#000"></div>
<div style="left:62px;top:0px;width:1px;height:21px;background:#C8E4DC"></div>
<div style="left:293px;top:0px;width:1px;height:21px;background:#000"></div>
<div style="left:294px;top:0px;width:1px;height:21px;background:#C8E4DC"></div>
<div style="left:475px;top:0px;width:1px;height:21px;background:#000"></div>
<div style="left:476px;top:0px;width:1px;height:21px;background:#C8E4DC"></div>
<div style="left:581px;top:0px;width:1px;height:21px;background:#000"></div>
<div style="left:582px;top:0px;width:1px;height:21px;background:#C8E4DC"></div>
<div style="left:718px;top:0px;width:1px;height:21px;background:#000"></div>
<div style="left:719px;top:0px;width:1px;height:21px;background:#C8E4DC"></div>
<div style="left:861px;top:0px;width:1px;height:21px;background:#000"></div>
<div style="left:862px;top:0px;width:1px;height:21px;background:#C8E4DC"></div>
<div style="left:993px;top:0px;width:1px;height:21px;background:#000"></div>
<div style="left:994px;top:0px;width:1px;height:21px;background:#C8E4DC"></div>
<div style="left:61px;top:22px;width:1px;height:700px;background:#C0C0C0"></div>
<div style="left:293px;top:22px;width:1px;height:700px;background:#C0C0C0"></div>
<div style="left:475px;top:22px;width:1px;height:700px;background:#C0C0C0"></div>
<div style="left:581px;top:22px;width:1px;height:700px;background:#C0C0C0"></div>
<div style="left:718px;top:22px;width:1px;height:700px;background:#C0C0C0"></div>
<div style="left:861px;top:22px;width:1px;height:700px;background:#C0C0C0"></div>
<div style="left:993px;top:22px;width:1px;height:700px;background:#C0C0C0"></div>
<div style="left:0px;top:22px;width:23px;height:1px;background:#C8E4DC"></div>
<div style="left:0px;top:22px;width:1px;height:21px;background:#C8E4DC"></div>
<div style="left:0px;top:43px;width:23px;height:1px;background:#000"></div>
<div style="left:24px;top:43px;width:1200px;height:1px;background:#C0C0C0"></div>
<div style="left:0px;top:44px;width:23px;height:1px;background:#C8E4DC"></div>
<div style="left:0px;top:44px;width:1px;height:21px;background:#C8E4DC"></div>
<div style="left:0px;top:65px;width:23px;height:1px;background:#000"></div>
<div style="left:24px;top:65px;width:1200px;height:1px;background:#C0C0C0"></div>
<div style="left:0px;top:66px;width:23px;height:1px;background:#C8E4DC"></div>
<div style="left:0px;top:66px;width:1px;height:21px;background:#C8E4DC"></div>
<div style="left:0px;top:87px;width:23px;height:1px;background:#000"></div>
<div style="left:24px;top:87px;width:1200px;height:1px;background:#C0C0C0"></div>
<div style="left:0px;top:88px;width:23px;height:1px;background:#C8E4DC"></div>
<div style="left:0px;top:88px;width:1px;height:21px;background:#C8E4DC"></div>
<div style="left:0px;top:109px;width:23px;height:1px;background:#000"></div>
<div style="left:24px;top:109px;width:1200px;height:1px;background:#C0C0C0"></div>
<div style="left:0px;top:110px;width:23px;height:1px;background:#C8E4DC"></div>
<div style="left:0px;top:110px;width:1px;height:21px;background:#C8E4DC"></div>
<div style="left:0px;top:131px;width:23px;height:1px;background:#000"></div>
<div style="left:24px;top:131px;width:1200px;height:1px;background:#C0C0C0"></div>
<div style="left:0px;top:132px;width:23px;height:1px;background:#C8E4DC"></div>
<div style="left:0px;top:132px;width:1px;height:21px;background:#C8E4DC"></div>
<div style="left:0px;top:153px;width:23px;height:1px;background:#000"></div>
<div style="left:24px;top:153px;width:1200px;height:1px;background:#C0C0C0"></div>
<div style="left:0px;top:154px;width:23px;height:1px;background:#C8E4DC"></div>
<div style="left:0px;top:154px;width:1px;height:21px;background:#C8E4DC"></div>
<div style="left:0px;top:175px;width:23px;height:1px;background:#000"></div>
<div style="left:24px;top:175px;width:1200px;height:1px;background:#C0C0C0"></div>
<div style="left:0px;top:176px;width:23px;height:1px;background:#C8E4DC"></div>
<div style="left:0px;top:176px;width:1px;height:21px;background:#C8E4DC"></div>
<div style="left:0px;top:197px;width:23px;height:1px;background:#000"></div>
<div style="left:24px;top:197px;width:1200px;height:1px;background:#C0C0C0"></div>
<div style="left:0px;top:198px;width:23px;height:1px;background:#C8E4DC"></div>
<div style="left:0px;top:198px;width:1px;height:21px;background:#C8E4DC"></div>
<div style="left:0px;top:219px;width:23px;height:1px;background:#000"></div>
<div style="left:24px;top:219px;width:1200px;height:1px;background:#C0C0C0"></div>
<div style="left:0px;top:220px;width:23px;height:1px;background:#C8E4DC"></div>
<div style="left:0px;top:220px;width:1px;height:21px;background:#C8E4DC"></div>
<div style="left:0px;top:241px;width:23px;height:1px;background:#000"></div>
<div style="left:24px;top:241px;width:1200px;height:1px;background:#C0C0C0"></div>
<div style="left:0px;top:242px;width:23px;height:1px;background:#C8E4DC"></div>
<div style="left:0px;top:242px;width:1px;height:21px;background:#C8E4DC"></div>
<div style="left:0px;top:263px;width:23px;height:1px;background:#000"></div>
<div style="left:24px;top:263px;width:1200px;height:1px;background:#C0C0C0"></div>
<div style="left:0px;top:264px;width:23px;height:1px;background:#C8E4DC"></div>
<div style="left:0px;top:264px;width:1px;height:21px;background:#C8E4DC"></div>
<div style="left:0px;top:285px;width:23px;height:1px;background:#000"></div>
<div style="left:24px;top:285px;width:1200px;height:1px;background:#C0C0C0"></div>
<div style="left:0px;top:286px;width:23px;height:1px;background:#C8E4DC"></div>
<div style="left:0px;top:286px;width:1px;height:21px;background:#C8E4DC"></div>
<div style="left:0px;top:307px;width:23px;height:1px;background:#000"></div>
<div style="left:24px;top:307px;width:1200px;height:1px;background:#C0C0C0"></div>
<div style="left:0px;top:308px;width:23px;height:1px;background:#C8E4DC"></div>
<div style="left:0px;top:308px;width:1px;height:21px;background:#C8E4DC"></div>
<div style="left:0px;top:329px;width:23px;height:1px;background:#000"></div>
<div style="left:24px;top:329px;width:1200px;height:1px;background:#C0C0C0"></div>
<div style="left:0px;top:330px;width:23px;height:1px;background:#C8E4DC"></div>
<div style="left:0px;top:330px;width:1px;height:21px;background:#C8E4DC"></div>
<div style="left:0px;top:351px;width:23px;height:1px;background:#000"></div>
<div style="left:24px;top:351px;width:1200px;height:1px;background:#C0C0C0"></div>
<div style="left:0px;top:352px;width:23px;height:1px;background:#C8E4DC"></div>
<div style="left:0px;top:352px;width:1px;height:21px;background:#C8E4DC"></div>
<div style="left:0px;top:373px;width:23px;height:1px;background:#000"></div>
<div style="left:24px;top:373px;width:1200px;height:1px;background:#C0C0C0"></div>
<div style="left:0px;top:374px;width:23px;height:1px;background:#C8E4DC"></div>
<div style="left:0px;top:374px;width:1px;height:21px;background:#C8E4DC"></div>
<div style="left:0px;top:395px;width:23px;height:1px;background:#000"></div>
<div style="left:24px;top:395px;width:1200px;height:1px;background:#C0C0C0"></div>
<div style="left:0px;top:396px;width:23px;height:1px;background:#C8E4DC"></div>
<div style="left:0px;top:396px;width:1px;height:21px;background:#C8E4DC"></div>
<div style="left:0px;top:417px;width:23px;height:1px;background:#000"></div>
<div style="left:24px;top:417px;width:1200px;height:1px;background:#C0C0C0"></div>
<div style="left:0px;top:418px;width:23px;height:1px;background:#C8E4DC"></div>
<div style="left:0px;top:418px;width:1px;height:21px;background:#C8E4DC"></div>
<div style="left:0px;top:439px;width:23px;height:1px;background:#000"></div>
<div style="left:24px;top:439px;width:1200px;height:1px;background:#C0C0C0"></div>
<div style="left:0px;top:440px;width:23px;height:1px;background:#C8E4DC"></div>
<div style="left:0px;top:440px;width:1px;height:21px;background:#C8E4DC"></div>
<div style="left:0px;top:461px;width:23px;height:1px;background:#000"></div>
<div style="left:24px;top:461px;width:1200px;height:1px;background:#C0C0C0"></div>
<div style="left:0px;top:462px;width:23px;height:1px;background:#C8E4DC"></div>
<div style="left:0px;top:462px;width:1px;height:21px;background:#C8E4DC"></div>
<div style="left:0px;top:483px;width:23px;height:1px;background:#000"></div>
<div style="left:24px;top:483px;width:1200px;height:1px;background:#C0C0C0"></div>
<div style="left:0px;top:484px;width:23px;height:1px;background:#C8E4DC"></div>
<div style="left:0px;top:484px;width:1px;height:21px;background:#C8E4DC"></div>
<div style="left:0px;top:505px;width:23px;height:1px;background:#000"></div>
<div style="left:24px;top:505px;width:1200px;height:1px;background:#C0C0C0"></div>
<div style="left:0px;top:506px;width:23px;height:1px;background:#C8E4DC"></div>
<div style="left:0px;top:506px;width:1px;height:21px;background:#C8E4DC"></div>
<div style="left:0px;top:527px;width:23px;height:1px;background:#000"></div>
<div style="left:24px;top:527px;width:1200px;height:1px;background:#C0C0C0"></div>
<div style="left:0px;top:528px;width:23px;height:1px;background:#C8E4DC"></div>
<div style="left:0px;top:528px;width:1px;height:21px;background:#C8E4DC"></div>
<div style="left:0px;top:549px;width:23px;height:1px;background:#000"></div>
<div style="left:24px;top:549px;width:1200px;height:1px;background:#C0C0C0"></div>
<div style="left:0px;top:550px;width:23px;height:1px;background:#C8E4DC"></div>
<div style="left:0px;top:550px;width:1px;height:21px;background:#C8E4DC"></div>
<div style="left:0px;top:571px;width:23px;height:1px;background:#000"></div>
<div style="left:24px;top:571px;width:1200px;height:1px;background:#C0C0C0"></div>
<div style="left:0px;top:572px;width:23px;height:1px;background:#C8E4DC"></div>
<div style="left:0px;top:572px;width:1px;height:21px;background:#C8E4DC"></div>
<div style="left:0px;top:593px;width:23px;height:1px;background:#000"></div>
<div style="left:24px;top:593px;width:1200px;height:1px;background:#C0C0C0"></div>
<div style="left:0px;top:594px;width:23px;height:1px;background:#C8E4DC"></div>
<div style="left:0px;top:594px;width:1px;height:21px;background:#C8E4DC"></div>
<div style="left:0px;top:615px;width:23px;height:1px;background:#000"></div>
<div style="left:24px;top:615px;width:1200px;height:1px;background:#C0C0C0"></div>
<div style="left:0px;top:616px;width:23px;height:1px;background:#C8E4DC"></div>
<div style="left:0px;top:616px;width:1px;height:21px;background:#C8E4DC"></div>
<div style="left:0px;top:637px;width:23px;height:1px;background:#000"></div>
<div style="left:24px;top:637px;width:1200px;height:1px;background:#C0C0C0"></div>
<div style="left:0px;top:638px;width:23px;height:1px;background:#C8E4DC"></div>
<div style="left:0px;top:638px;width:1px;height:21px;background:#C8E4DC"></div>
<div style="left:0px;top:659px;width:23px;height:1px;background:#000"></div>
<div style="left:24px;top:659px;width:1200px;height:1px;background:#C0C0C0"></div>
<div class="cell t" style="left:27px;top:0px">Код</div>
<div style="left:56px;top:18px;width:4px;height:1px;background:#000"></div>
<div class="cell" style="left:62px;top:0px;width:231px;text-align:center">наименование товара</div>
<div class="cell" style="left:294px;top:0px;width:181px;text-align:center">фирма производитель</div>
<div class="cell" style="left:476px;top:0px;width:105px;text-align:center">год выпуска</div>
<div class="cell" style="left:582px;top:0px;width:136px;text-align:center">формы выпуска</div>
<div class="cell" style="left:719px;top:0px;width:142px;text-align:center">примерная цена</div>
<div class="cell" style="left:862px;top:0px;width:131px;text-align:center">группы товаров</div>
<div class="cell" style="left:1000px;top:0px">наличие аналогов</div>
<div class="cell" style="left:65px;top:23px;width:228px">префекс</div>
<div class="cell" style="left:297px;top:23px;width:178px">сша</div>
<div class="cell" style="left:476px;top:23px;width:105px;text-align:right;padding-right:0px">01.07.07</div>
<div class="cell" style="left:585px;top:23px;width:133px">капсулы</div>
<div class="cell" style="left:719px;top:23px;width:142px;text-align:right;padding-right:3px">750,00р.</div>
<div class="cell" style="left:862px;top:23px;width:131px;text-align:right;padding-right:1px">1</div>
<div style="left:1063px;top:25px;width:11px;height:11px;border:1px solid #000;background:#fff"></div>
<div class="cell" style="left:24px;top:45px;width:37px;text-align:right;padding-right:0px">2</div>
<div class="cell" style="left:65px;top:45px;width:228px">анальгин</div>
<div class="cell" style="left:297px;top:45px;width:178px">россия</div>
<div class="cell" style="left:476px;top:45px;width:105px;text-align:right;padding-right:0px">03.03.07</div>
<div class="cell" style="left:585px;top:45px;width:133px">ампулы</div>
<div class="cell" style="left:719px;top:45px;width:142px;text-align:right;padding-right:3px">30,20р.</div>
<div class="cell" style="left:862px;top:45px;width:131px;text-align:right;padding-right:1px">4</div>
<div style="left:1063px;top:47px;width:11px;height:11px;border:1px solid #000;background:#fff"></div>
<svg style="left:1064px;top:48px" width="9" height="9" viewBox="0 0 9 9"><path d="M1 4 L3.5 7 L8 1.5" stroke="#000" stroke-width="2" fill="none"/></svg>
<div class="cell" style="left:24px;top:67px;width:37px;text-align:right;padding-right:0px">3</div>
<div class="cell" style="left:65px;top:67px;width:228px">цитромон</div>
<div class="cell" style="left:297px;top:67px;width:178px">россия</div>
<div class="cell" style="left:476px;top:67px;width:105px;text-align:right;padding-right:0px">01.03.06</div>
<div class="cell" style="left:585px;top:67px;width:133px">таблетки</div>
<div class="cell" style="left:719px;top:67px;width:142px;text-align:right;padding-right:3px">2,60р.</div>
<div class="cell" style="left:862px;top:67px;width:131px;text-align:right;padding-right:1px">3</div>
<div style="left:1063px;top:69px;width:11px;height:11px;border:1px solid #000;background:#fff"></div>
<div class="cell" style="left:24px;top:89px;width:37px;text-align:right;padding-right:0px">4</div>
<div class="cell" style="left:65px;top:89px;width:228px">но-шпа</div>
<div class="cell" style="left:297px;top:89px;width:178px">болгария</div>
<div class="cell" style="left:476px;top:89px;width:105px;text-align:right;padding-right:0px">01.03.05</div>
<div class="cell" style="left:585px;top:89px;width:133px">ампулы</div>
<div class="cell" style="left:719px;top:89px;width:142px;text-align:right;padding-right:3px">56,80р.</div>
<div class="cell" style="left:862px;top:89px;width:131px;text-align:right;padding-right:1px">4</div>
<div style="left:1063px;top:91px;width:11px;height:11px;border:1px solid #000;background:#fff"></div>
<div class="cell" style="left:24px;top:111px;width:37px;text-align:right;padding-right:0px">5</div>
<div class="cell" style="left:65px;top:111px;width:228px">троксевазин</div>
<div class="cell" style="left:297px;top:111px;width:178px">болгария</div>
<div class="cell" style="left:476px;top:111px;width:105px;text-align:right;padding-right:0px">13.04.05</div>
<div class="cell" style="left:585px;top:111px;width:133px">туба</div>
<div class="cell" style="left:719px;top:111px;width:142px;text-align:right;padding-right:3px">44,25р.</div>
<div class="cell" style="left:862px;top:111px;width:131px;text-align:right;padding-right:1px">4</div>
<div style="left:1063px;top:113px;width:11px;height:11px;border:1px solid #000;background:#fff"></div>
<div class="cell" style="left:24px;top:133px;width:37px;text-align:right;padding-right:0px">6</div>
<div class="cell" style="left:65px;top:133px;width:228px">лоперамид</div>
<div class="cell" style="left:297px;top:133px;width:178px">польша</div>
<div class="cell" style="left:476px;top:133px;width:105px;text-align:right;padding-right:0px">01.05.03</div>
<div class="cell" style="left:585px;top:133px;width:133px">таблетки</div>
<div class="cell" style="left:719px;top:133px;width:142px;text-align:right;padding-right:3px">51,55р.</div>
<div class="cell" style="left:862px;top:133px;width:131px;text-align:right;padding-right:1px">5</div>
<div style="left:1063px;top:135px;width:11px;height:11px;border:1px solid #000;background:#fff"></div>
<svg style="left:1064px;top:136px" width="9" height="9" viewBox="0 0 9 9"><path d="M1 4 L3.5 7 L8 1.5" stroke="#000" stroke-width="2" fill="none"/></svg>
<div class="cell" style="left:24px;top:155px;width:37px;text-align:right;padding-right:0px">7</div>
<div class="cell" style="left:65px;top:155px;width:228px">корвалол</div>
<div class="cell" style="left:297px;top:155px;width:178px">россия</div>
<div class="cell" style="left:476px;top:155px;width:105px;text-align:right;padding-right:0px">01.06.06</div>
<div class="cell" style="left:585px;top:155px;width:133px">капли</div>
<div class="cell" style="left:719px;top:155px;width:142px;text-align:right;padding-right:3px">22,00р.</div>
<div class="cell" style="left:862px;top:155px;width:131px;text-align:right;padding-right:1px">2</div>
<div style="left:1063px;top:157px;width:11px;height:11px;border:1px solid #000;background:#fff"></div>
<div class="cell" style="left:24px;top:177px;width:37px;text-align:right;padding-right:0px">8</div>
<div class="cell" style="left:65px;top:177px;width:228px">бифидумбактерин сухой</div>
<div class="cell" style="left:297px;top:177px;width:178px">россия</div>
<div class="cell" style="left:476px;top:177px;width:105px;text-align:right;padding-right:0px">01.01.01</div>
<div class="cell" style="left:585px;top:177px;width:133px">порошок</div>
<div class="cell" style="left:719px;top:177px;width:142px;text-align:right;padding-right:3px">20,32р.</div>
<div class="cell" style="left:862px;top:177px;width:131px;text-align:right;padding-right:1px">5</div>
<div style="left:1063px;top:179px;width:11px;height:11px;border:1px solid #000;background:#fff"></div>
<div class="cell" style="left:24px;top:199px;width:37px;text-align:right;padding-right:0px">9</div>
<div class="cell" style="left:65px;top:199px;width:228px">бисептол</div>
<div class="cell" style="left:297px;top:199px;width:178px">польша</div>
<div class="cell" style="left:476px;top:199px;width:105px;text-align:right;padding-right:0px">01.10.05</div>
<div class="cell" style="left:585px;top:199px;width:133px">таблетки</div>
<div class="cell" style="left:719px;top:199px;width:142px;text-align:right;padding-right:3px">62,11р.</div>
<div class="cell" style="left:862px;top:199px;width:131px;text-align:right;padding-right:1px">11</div>
<div style="left:1063px;top:201px;width:11px;height:11px;border:1px solid #000;background:#fff"></div>
<div class="cell" style="left:24px;top:221px;width:37px;text-align:right;padding-right:0px">10</div>
<div class="cell" style="left:65px;top:221px;width:228px">лоперамид-акри</div>
<div class="cell" style="left:297px;top:221px;width:178px">россия</div>
<div class="cell" style="left:476px;top:221px;width:105px;text-align:right;padding-right:0px">01.10.00</div>
<div class="cell" style="left:585px;top:221px;width:133px">капсулы</div>
<div class="cell" style="left:719px;top:221px;width:142px;text-align:right;padding-right:3px">11,41р.</div>
<div class="cell" style="left:862px;top:221px;width:131px;text-align:right;padding-right:1px">5</div>
<div style="left:1063px;top:223px;width:11px;height:11px;border:1px solid #000;background:#fff"></div>
<svg style="left:1064px;top:224px" width="9" height="9" viewBox="0 0 9 9"><path d="M1 4 L3.5 7 L8 1.5" stroke="#000" stroke-width="2" fill="none"/></svg>
<div class="cell" style="left:24px;top:243px;width:37px;text-align:right;padding-right:0px">11</div>
<div class="cell" style="left:65px;top:243px;width:228px">фурацилин</div>
<div class="cell" style="left:297px;top:243px;width:178px">россия</div>
<div class="cell" style="left:476px;top:243px;width:105px;text-align:right;padding-right:0px">01.02.04</div>
<div class="cell" style="left:585px;top:243px;width:133px">таблетки</div>
<div class="cell" style="left:719px;top:243px;width:142px;text-align:right;padding-right:3px">0,99р.</div>
<div class="cell" style="left:862px;top:243px;width:131px;text-align:right;padding-right:1px">6</div>
<div style="left:1063px;top:245px;width:11px;height:11px;border:1px solid #000;background:#fff"></div>
<div class="cell" style="left:24px;top:265px;width:37px;text-align:right;padding-right:0px">12</div>
<div class="cell" style="left:65px;top:265px;width:228px">анальгин</div>
<div class="cell" style="left:297px;top:265px;width:178px">россия</div>
<div class="cell" style="left:476px;top:265px;width:105px;text-align:right;padding-right:0px">01.04.04</div>
<div class="cell" style="left:585px;top:265px;width:133px">таблетки</div>
<div class="cell" style="left:719px;top:265px;width:142px;text-align:right;padding-right:3px">2,97р.</div>
<div class="cell" style="left:862px;top:265px;width:131px;text-align:right;padding-right:1px">4</div>
<div style="left:1063px;top:267px;width:11px;height:11px;border:1px solid #000;background:#fff"></div>
<svg style="left:1064px;top:268px" width="9" height="9" viewBox="0 0 9 9"><path d="M1 4 L3.5 7 L8 1.5" stroke="#000" stroke-width="2" fill="none"/></svg>
<div class="cell" style="left:24px;top:287px;width:37px;text-align:right;padding-right:0px">13</div>
<div class="cell" style="left:65px;top:287px;width:228px">дибазол</div>
<div class="cell" style="left:297px;top:287px;width:178px">россия</div>
<div class="cell" style="left:476px;top:287px;width:105px;text-align:right;padding-right:0px">01.05.04</div>
<div class="cell" style="left:585px;top:287px;width:133px">таблетки</div>
<div class="cell" style="left:719px;top:287px;width:142px;text-align:right;padding-right:3px">0,80р.</div>
<div class="cell" style="left:862px;top:287px;width:131px;text-align:right;padding-right:1px">2</div>
<div style="left:1063px;top:289px;width:11px;height:11px;border:1px solid #000;background:#fff"></div>
<div class="cell" style="left:24px;top:309px;width:37px;text-align:right;padding-right:0px">14</div>
<div class="cell" style="left:65px;top:309px;width:228px">адипал</div>
<div class="cell" style="left:297px;top:309px;width:178px">россия</div>
<div class="cell" style="left:476px;top:309px;width:105px;text-align:right;padding-right:0px">01.06.06</div>
<div class="cell" style="left:585px;top:309px;width:133px">таблетки</div>
<div class="cell" style="left:719px;top:309px;width:142px;text-align:right;padding-right:3px">1,35р.</div>
<div class="cell" style="left:862px;top:309px;width:131px;text-align:right;padding-right:1px">2</div>
<div style="left:1063px;top:311px;width:11px;height:11px;border:1px solid #000;background:#fff"></div>
<div class="cell" style="left:24px;top:331px;width:37px;text-align:right;padding-right:0px">15</div>
<div class="cell" style="left:65px;top:331px;width:228px">этазол</div>
<div class="cell" style="left:297px;top:331px;width:178px">россия</div>
<div class="cell" style="left:476px;top:331px;width:105px;text-align:right;padding-right:0px">01.08.04</div>
<div class="cell" style="left:585px;top:331px;width:133px">таблетки</div>
<div class="cell" style="left:719px;top:331px;width:142px;text-align:right;padding-right:3px">2,62р.</div>
<div class="cell" style="left:862px;top:331px;width:131px;text-align:right;padding-right:1px">2</div>
<div style="left:1063px;top:333px;width:11px;height:11px;border:1px solid #000;background:#fff"></div>
<div class="cell" style="left:24px;top:353px;width:37px;text-align:right;padding-right:0px">16</div>
<div class="cell" style="left:65px;top:353px;width:228px">но-шпа</div>
<div class="cell" style="left:297px;top:353px;width:178px">болгария</div>
<div class="cell" style="left:476px;top:353px;width:105px;text-align:right;padding-right:0px">01.12.03</div>
<div class="cell" style="left:585px;top:353px;width:133px">таблетки</div>
<div class="cell" style="left:719px;top:353px;width:142px;text-align:right;padding-right:3px">30,80р.</div>
<div class="cell" style="left:862px;top:353px;width:131px;text-align:right;padding-right:1px">4</div>
<div style="left:1063px;top:355px;width:11px;height:11px;border:1px solid #000;background:#fff"></div>
<div class="cell" style="left:24px;top:375px;width:37px;text-align:right;padding-right:0px">17</div>
<div class="cell" style="left:65px;top:375px;width:228px">парацетамол</div>
<div class="cell" style="left:297px;top:375px;width:178px">россия</div>
<div class="cell" style="left:476px;top:375px;width:105px;text-align:right;padding-right:0px">01.11.05</div>
<div class="cell" style="left:585px;top:375px;width:133px">таблетки</div>
<div class="cell" style="left:719px;top:375px;width:142px;text-align:right;padding-right:3px">0,92р.</div>
<div class="cell" style="left:862px;top:375px;width:131px;text-align:right;padding-right:1px">3</div>
<div style="left:1063px;top:377px;width:11px;height:11px;border:1px solid #000;background:#fff"></div>
<svg style="left:1064px;top:378px" width="9" height="9" viewBox="0 0 9 9"><path d="M1 4 L3.5 7 L8 1.5" stroke="#000" stroke-width="2" fill="none"/></svg>
<div class="cell" style="left:24px;top:397px;width:37px;text-align:right;padding-right:0px">18</div>
<div class="cell" style="left:65px;top:397px;width:228px">бромгексин</div>
<div class="cell" style="left:297px;top:397px;width:178px">швейцария</div>
<div class="cell" style="left:476px;top:397px;width:105px;text-align:right;padding-right:0px">01.12.04</div>
<div class="cell" style="left:585px;top:397px;width:133px">таблетки</div>
<div class="cell" style="left:719px;top:397px;width:142px;text-align:right;padding-right:3px">16,50р.</div>
<div class="cell" style="left:862px;top:397px;width:131px;text-align:right;padding-right:1px">7</div>
<div style="left:1063px;top:399px;width:11px;height:11px;border:1px solid #000;background:#fff"></div>
<div class="cell" style="left:24px;top:419px;width:37px;text-align:right;padding-right:0px">19</div>
<div class="cell" style="left:65px;top:419px;width:228px">ацц-200</div>
<div class="cell" style="left:297px;top:419px;width:178px">болгария</div>
<div class="cell" style="left:476px;top:419px;width:105px;text-align:right;padding-right:0px">01.12.04</div>
<div class="cell" style="left:585px;top:419px;width:133px">порошок</div>
<div class="cell" style="left:719px;top:419px;width:142px;text-align:right;padding-right:3px">10,21р.</div>
<div class="cell" style="left:862px;top:419px;width:131px;text-align:right;padding-right:1px">7</div>
<div style="left:1063px;top:421px;width:11px;height:11px;border:1px solid #000;background:#fff"></div>
<div class="cell" style="left:24px;top:441px;width:37px;text-align:right;padding-right:0px">20</div>
<div class="cell" style="left:65px;top:441px;width:228px">ранитидин</div>
<div class="cell" style="left:297px;top:441px;width:178px">индия</div>
<div class="cell" style="left:476px;top:441px;width:105px;text-align:right;padding-right:0px">01.03.07</div>
<div class="cell" style="left:585px;top:441px;width:133px">таблетки</div>
<div class="cell" style="left:719px;top:441px;width:142px;text-align:right;padding-right:3px">2,35р.</div>
<div class="cell" style="left:862px;top:441px;width:131px;text-align:right;padding-right:1px">7</div>
<div style="left:1063px;top:443px;width:11px;height:11px;border:1px solid #000;background:#fff"></div>
<div class="cell" style="left:24px;top:463px;width:37px;text-align:right;padding-right:0px">21</div>
<div class="cell" style="left:65px;top:463px;width:228px">стрептоцид</div>
<div class="cell" style="left:297px;top:463px;width:178px">россия</div>
<div class="cell" style="left:476px;top:463px;width:105px;text-align:right;padding-right:0px">01.04.07</div>
<div class="cell" style="left:585px;top:463px;width:133px">таблетки</div>
<div class="cell" style="left:719px;top:463px;width:142px;text-align:right;padding-right:3px">0,54р.</div>
<div class="cell" style="left:862px;top:463px;width:131px;text-align:right;padding-right:1px">6</div>
<div style="left:1063px;top:465px;width:11px;height:11px;border:1px solid #000;background:#fff"></div>
<div class="cell" style="left:24px;top:485px;width:37px;text-align:right;padding-right:0px">22</div>
<div class="cell" style="left:65px;top:485px;width:228px">аскорутин</div>
<div class="cell" style="left:297px;top:485px;width:178px">россия</div>
<div class="cell" style="left:476px;top:485px;width:105px;text-align:right;padding-right:0px">01.04.07</div>
<div class="cell" style="left:585px;top:485px;width:133px">таблетки</div>
<div class="cell" style="left:719px;top:485px;width:142px;text-align:right;padding-right:3px">4,21р.</div>
<div class="cell" style="left:862px;top:485px;width:131px;text-align:right;padding-right:1px">7</div>
<div style="left:1063px;top:487px;width:11px;height:11px;border:1px solid #000;background:#fff"></div>
<div class="cell" style="left:24px;top:507px;width:37px;text-align:right;padding-right:0px">23</div>
<div class="cell" style="left:65px;top:507px;width:228px">ацетилсалициловая кислота</div>
<div class="cell" style="left:297px;top:507px;width:178px">россия</div>
<div class="cell" style="left:476px;top:507px;width:105px;text-align:right;padding-right:0px">01.07.06</div>
<div class="cell" style="left:585px;top:507px;width:133px">таблетки</div>
<div class="cell" style="left:719px;top:507px;width:142px;text-align:right;padding-right:3px">1,54р.</div>
<div class="cell" style="left:862px;top:507px;width:131px;text-align:right;padding-right:1px">4</div>
<div style="left:1063px;top:509px;width:11px;height:11px;border:1px solid #000;background:#fff"></div>
<svg style="left:1064px;top:510px" width="9" height="9" viewBox="0 0 9 9"><path d="M1 4 L3.5 7 L8 1.5" stroke="#000" stroke-width="2" fill="none"/></svg>
<div class="cell" style="left:24px;top:529px;width:37px;text-align:right;padding-right:0px">24</div>
<div class="cell" style="left:65px;top:529px;width:228px">активированный уголь</div>
<div class="cell" style="left:297px;top:529px;width:178px">россия</div>
<div class="cell" style="left:476px;top:529px;width:105px;text-align:right;padding-right:0px">01.01.07</div>
<div class="cell" style="left:585px;top:529px;width:133px">таблетки</div>
<div class="cell" style="left:719px;top:529px;width:142px;text-align:right;padding-right:3px">0,54р.</div>
<div class="cell" style="left:862px;top:529px;width:131px;text-align:right;padding-right:1px">5</div>
<div style="left:1063px;top:531px;width:11px;height:11px;border:1px solid #000;background:#fff"></div>
<div class="cell" style="left:24px;top:551px;width:37px;text-align:right;padding-right:0px">25</div>
<div class="cell" style="left:65px;top:551px;width:228px">эссенциале-Н</div>
<div class="cell" style="left:297px;top:551px;width:178px">германия</div>
<div class="cell" style="left:476px;top:551px;width:105px;text-align:right;padding-right:0px">10.02.07</div>
<div class="cell" style="left:585px;top:551px;width:133px">ампулы</div>
<div class="cell" style="left:719px;top:551px;width:142px;text-align:right;padding-right:3px">298,44р.</div>
<div class="cell" style="left:862px;top:551px;width:131px;text-align:right;padding-right:1px">9</div>
<div style="left:1063px;top:553px;width:11px;height:11px;border:1px solid #000;background:#fff"></div>
<div class="cell" style="left:24px;top:573px;width:37px;text-align:right;padding-right:0px">26</div>
<div class="cell" style="left:65px;top:573px;width:228px">актреатид</div>
<div class="cell" style="left:297px;top:573px;width:178px">германия</div>
<div class="cell" style="left:476px;top:573px;width:105px;text-align:right;padding-right:0px">20.03.07</div>
<div class="cell" style="left:585px;top:573px;width:133px">ампулы</div>
<div class="cell" style="left:719px;top:573px;width:142px;text-align:right;padding-right:3px">3 000,00р.</div>
<div class="cell" style="left:862px;top:573px;width:131px;text-align:right;padding-right:1px">10</div>
<div style="left:1063px;top:575px;width:11px;height:11px;border:1px solid #000;background:#fff"></div>
<div class="cell" style="left:24px;top:595px;width:37px;text-align:right;padding-right:0px">27</div>
<div class="cell" style="left:65px;top:595px;width:228px">аскорбиновая кислота</div>
<div class="cell" style="left:297px;top:595px;width:178px">россия</div>
<div class="cell" style="left:476px;top:595px;width:105px;text-align:right;padding-right:0px">01.02.07</div>
<div class="cell" style="left:585px;top:595px;width:133px">порошок</div>
<div class="cell" style="left:719px;top:595px;width:142px;text-align:right;padding-right:3px">0,20р.</div>
<div class="cell" style="left:862px;top:595px;width:131px;text-align:right;padding-right:1px">8</div>
<div style="left:1063px;top:597px;width:11px;height:11px;border:1px solid #000;background:#fff"></div>
<div class="cell" style="left:24px;top:617px;width:37px;text-align:right;padding-right:0px">28</div>
<div class="cell" style="left:65px;top:617px;width:228px">мульти-табс</div>
<div class="cell" style="left:297px;top:617px;width:178px">россия</div>
<div class="cell" style="left:476px;top:617px;width:105px;text-align:right;padding-right:0px">01.03.07</div>
<div class="cell" style="left:585px;top:617px;width:133px">таблетки</div>
<div class="cell" style="left:719px;top:617px;width:142px;text-align:right;padding-right:3px">120,40р.</div>
<div class="cell" style="left:862px;top:617px;width:131px;text-align:right;padding-right:1px">8</div>
<div style="left:1063px;top:619px;width:11px;height:11px;border:1px solid #000;background:#fff"></div>
<div style="left:51px;top:23px;width:10px;height:20px;background:#000"></div>
<div class="cell" style="left:51px;top:23px;width:10px;text-align:right;color:#fff;padding-right:1px">1</div>
<svg style="left:7px;top:27px" width="7" height="12" viewBox="0 0 7 12"><path d="M0 0L6.5 6L0 12z" fill="#000"/></svg>
<svg style="left:5px;top:644px" width="9" height="9" viewBox="0 0 9 9" shape-rendering="crispEdges"><path d="M4 0h1v9h-1z M0 4h9v1h-9z M1 1h1v1h-1z M7 1h1v1h-1z M1 7h1v1h-1z M7 7h1v1h-1z M2 2h1v1h-1z M6 2h1v1h-1z M2 6h1v1h-1z M6 6h1v1h-1z M3 3h3v3h-3z" fill="#000"/></svg>
<div class="cell" style="left:24px;top:639px;width:37px;text-align:right;padding-right:1px">чик)</div>
<div style="left:27px;top:646px;width:1px;height:1px;background:#000"></div>
<div class="cell" style="left:862px;top:639px;width:131px;text-align:right;padding-right:1px">0</div>
<div style="left:1063px;top:641px;width:11px;height:11px;border:1px solid #000;background:repeating-conic-gradient(#000 0 25%,#fff 0 50%) 0 0/2px 2px"></div>
</div>
<div style="left:1114px;top:139px;width:12px;height:655px;background:#C8E4DC"></div>
<div class="rb" style="left:1114px;top:139px;width:12px;height:13px;"></div>
<svg style="left:1116px;top:143px" width="7" height="4" viewBox="0 0 7 4"><path d="M3.5 0L7 4H0z" fill="#000"/></svg>
<div class="rb" style="left:1114px;top:152px;width:12px;height:309px;"></div>
<div class="rb" style="left:1114px;top:781px;width:12px;height:13px;"></div>
<svg style="left:1116px;top:786px" width="7" height="4" viewBox="0 0 7 4"><path d="M0 0h7L3.5 4z" fill="#000"/></svg>
<div style="left:26px;top:793px;width:1100px;height:15px;background:#88C0B8"></div>
<div class="t" style="left:32px;top:797px;font-size:10px;line-height:10px;letter-spacing:0.8px;color:#000">Запись:</div>
<div class="rb" style="left:76px;top:795px;width:16px;height:12px;"></div>
<div class="rb" style="left:92px;top:795px;width:18px;height:12px;"></div>
<div class="rb" style="left:182px;top:795px;width:16px;height:12px;"></div>
<div class="rb" style="left:198px;top:795px;width:17px;height:12px;"></div>
<div class="rb" style="left:215px;top:795px;width:18px;height:12px;"></div>
<div style="left:115px;top:794px;width:63px;height:13px;background:#C0C0C0;border-top:1px solid #000;border-left:1px solid #000;border-right:1px solid #C8E4DC"></div>
<div class="t" style="left:150px;top:796px;width:26px;text-align:right;font-size:12px;line-height:12px">1</div>
<svg style="left:81px;top:797px;" width="6" height="7" viewBox="0 0 6 7" shape-rendering="crispEdges"><rect x="0" y="0" width="1" height="1" fill="#000000"/><rect x="5" y="0" width="1" height="1" fill="#000000"/><rect x="0" y="1" width="1" height="1" fill="#000000"/><rect x="4" y="1" width="2" height="1" fill="#000000"/><rect x="0" y="2" width="1" height="1" fill="#000000"/><rect x="3" y="2" width="3" height="1" fill="#000000"/><rect x="0" y="3" width="1" height="1" fill="#000000"/><rect x="2" y="3" width="4" height="1" fill="#000000"/><rect x="0" y="4" width="1" height="1" fill="#000000"/><rect x="3" y="4" width="3" height="1" fill="#000000"/><rect x="0" y="5" width="1" height="1" fill="#000000"/><rect x="4" y="5" width="2" height="1" fill="#000000"/><rect x="0" y="6" width="1" height="1" fill="#000000"/><rect x="5" y="6" width="1" height="1" fill="#000000"/></svg>
<svg style="left:98px;top:798px;" width="5" height="7" viewBox="0 0 5 7" shape-rendering="crispEdges"><rect x="3" y="0" width="1" height="1" fill="#4E8A82"/><rect x="2" y="1" width="2" height="1" fill="#4E8A82"/><rect x="4" y="1" width="1" height="1" fill="#C8E4DC"/><rect x="1" y="2" width="3" height="1" fill="#4E8A82"/><rect x="4" y="2" width="1" height="1" fill="#C8E4DC"/><rect x="0" y="3" width="4" height="1" fill="#4E8A82"/><rect x="4" y="3" width="1" height="1" fill="#C8E4DC"/><rect x="1" y="4" width="3" height="1" fill="#4E8A82"/><rect x="4" y="4" width="1" height="1" fill="#C8E4DC"/><rect x="2" y="5" width="2" height="1" fill="#4E8A82"/><rect x="4" y="5" width="1" height="1" fill="#C8E4DC"/><rect x="3" y="6" width="1" height="1" fill="#4E8A82"/><rect x="4" y="6" width="1" height="1" fill="#C8E4DC"/></svg>
<svg style="left:188px;top:797px;" width="4" height="7" viewBox="0 0 4 7" shape-rendering="crispEdges"><rect x="0" y="0" width="1" height="1" fill="#000000"/><rect x="0" y="1" width="2" height="1" fill="#000000"/><rect x="0" y="2" width="3" height="1" fill="#000000"/><rect x="0" y="3" width="4" height="1" fill="#000000"/><rect x="0" y="4" width="3" height="1" fill="#000000"/><rect x="0" y="5" width="2" height="1" fill="#000000"/><rect x="0" y="6" width="1" height="1" fill="#000000"/></svg>
<svg style="left:203px;top:797px;" width="6" height="7" viewBox="0 0 6 7" shape-rendering="crispEdges"><rect x="0" y="0" width="1" height="1" fill="#000000"/><rect x="5" y="0" width="1" height="1" fill="#000000"/><rect x="0" y="1" width="2" height="1" fill="#000000"/><rect x="5" y="1" width="1" height="1" fill="#000000"/><rect x="0" y="2" width="3" height="1" fill="#000000"/><rect x="5" y="2" width="1" height="1" fill="#000000"/><rect x="0" y="3" width="4" height="1" fill="#000000"/><rect x="5" y="3" width="1" height="1" fill="#000000"/><rect x="0" y="4" width="3" height="1" fill="#000000"/><rect x="5" y="4" width="1" height="1" fill="#000000"/><rect x="0" y="5" width="2" height="1" fill="#000000"/><rect x="5" y="5" width="1" height="1" fill="#000000"/><rect x="0" y="6" width="1" height="1" fill="#000000"/><rect x="5" y="6" width="1" height="1" fill="#000000"/></svg>
<svg style="left:219px;top:797px;" width="8" height="7" viewBox="0 0 8 7" shape-rendering="crispEdges"><rect x="0" y="0" width="1" height="1" fill="#000000"/><rect x="0" y="1" width="2" height="1" fill="#000000"/><rect x="4" y="1" width="1" height="1" fill="#000000"/><rect x="6" y="1" width="1" height="1" fill="#000000"/><rect x="0" y="2" width="3" height="1" fill="#000000"/><rect x="5" y="2" width="1" height="1" fill="#000000"/><rect x="0" y="3" width="8" height="1" fill="#000000"/><rect x="0" y="4" width="3" height="1" fill="#000000"/><rect x="5" y="4" width="1" height="1" fill="#000000"/><rect x="0" y="5" width="2" height="1" fill="#000000"/><rect x="4" y="5" width="1" height="1" fill="#000000"/><rect x="6" y="5" width="1" height="1" fill="#000000"/><rect x="0" y="6" width="1" height="1" fill="#000000"/></svg>
<div class="t" style="left:240px;top:797px;font-size:10px;line-height:10px;letter-spacing:0.8px">из&nbsp;28</div>
<div style="left:394px;top:794px;width:720px;height:13px;background:#C8E4DC"></div>
<div class="rb" style="left:393px;top:794px;width:13px;height:13px;"></div>
<svg style="left:398px;top:797px" width="4" height="7" viewBox="0 0 4 7"><path d="M4 0V7L0 3.5z" fill="#000"/></svg>
<div class="rb" style="left:406px;top:794px;width:347px;height:13px;"></div>
<div class="rb" style="left:1101px;top:794px;width:13px;height:13px;"></div>
<svg style="left:1106px;top:797px" width="4" height="7" viewBox="0 0 4 7"><path d="M0 0V7L4 3.5z" fill="#000"/></svg>
<div style="left:1114px;top:794px;width:12px;height:13px;background:#88C0B8"></div>
<div style="left:0;top:814px;width:1152px;height:22px;background:#88C0B8;border-top:1px solid #C8E4DC"></div>
<div style="left:9px;top:816px;width:849px;height:18px;border:1px solid #9CC4BC"></div>
<div class="t" style="left:10px;top:820px;font-size:12.5px;line-height:13px;letter-spacing:0.15px">Режим таблицы</div>
<div style="left:861px;top:816px;width:38px;height:18px;border:1px solid #9CC4BC"></div>
<div style="left:902px;top:816px;width:28px;height:18px;border:1px solid #9CC4BC"></div>
<div style="left:933px;top:816px;width:29px;height:18px;border:1px solid #9CC4BC"></div>
<div style="left:965px;top:816px;width:35px;height:18px;border:1px solid #9CC4BC"></div>
<div style="left:1003px;top:816px;width:35px;height:18px;border:1px solid #9CC4BC"></div>
<div style="left:1041px;top:816px;width:30px;height:18px;border:1px solid #9CC4BC"></div>
<div style="left:1074px;top:816px;width:34px;height:18px;border:1px solid #9CC4BC"></div>
<div style="left:1111px;top:816px;width:34px;height:18px;border:1px solid #9CC4BC"></div>
<div class="t" style="left:1042px;top:820px;font-size:12.5px;line-height:13px">NUM</div>
<div style="left:0;top:836px;width:1152px;height:28px;background:#88C0B8;border-top:1px solid #88C0B8;box-shadow:inset 0 1px 0 #C8E4DC"></div>
<div class="rb" style="left:2px;top:840px;width:62px;height:22px;"></div>
<svg style="left:6px;top:844px;" width="17" height="14" viewBox="0 0 17 14" shape-rendering="crispEdges"><rect x="9" y="0" width="4" height="1" fill="#000000"/><rect x="7" y="1" width="8" height="1" fill="#000000"/><rect x="0" y="2" width="1" height="1" fill="#000000"/><rect x="7" y="2" width="2" height="1" fill="#000000"/><rect x="9" y="2" width="2" height="1" fill="#FF0000"/><rect x="11" y="2" width="2" height="1" fill="#000000"/><rect x="13" y="2" width="1" height="1" fill="#00FF00"/><rect x="14" y="2" width="2" height="1" fill="#000000"/><rect x="0" y="3" width="1" height="1" fill="#000000"/><rect x="2" y="3" width="6" height="1" fill="#000000"/><rect x="8" y="3" width="3" height="1" fill="#FF0000"/><rect x="11" y="3" width="1" height="1" fill="#000000"/><rect x="12" y="3" width="3" height="1" fill="#00FF00"/><rect x="15" y="3" width="1" height="1" fill="#000000"/><rect x="2" y="4" width="6" height="1" fill="#000000"/><rect x="8" y="4" width="2" height="1" fill="#FF0000"/><rect x="10" y="4" width="2" height="1" fill="#000000"/><rect x="12" y="4" width="2" height="1" fill="#00FF00"/><rect x="14" y="4" width="2" height="1" fill="#000000"/><rect x="0" y="5" width="1" height="1" fill="#FF0000"/><rect x="7" y="5" width="1" height="1" fill="#000000"/><rect x="8" y="5" width="3" height="1" fill="#FF0000"/><rect x="11" y="5" width="1" height="1" fill="#000000"/><rect x="12" y="5" width="3" height="1" fill="#00FF00"/><rect x="15" y="5" width="1" height="1" fill="#000000"/><rect x="0" y="6" width="1" height="1" fill="#FF0000"/><rect x="2" y="6" width="5" height="1" fill="#FF0000"/><rect x="7" y="6" width="1" height="1" fill="#000000"/><rect x="8" y="6" width="2" height="1" fill="#FF0000"/><rect x="10" y="6" width="3" height="1" fill="#000000"/><rect x="13" y="6" width="2" height="1" fill="#00FF00"/><rect x="15" y="6" width="1" height="1" fill="#000000"/><rect x="2" y="7" width="5" height="1" fill="#FF0000"/><rect x="7" y="7" width="9" height="1" fill="#000000"/><rect x="0" y="8" width="1" height="1" fill="#0000FF"/><rect x="7" y="8" width="2" height="1" fill="#000000"/><rect x="9" y="8" width="2" height="1" fill="#0000FF"/><rect x="11" y="8" width="1" height="1" fill="#000000"/><rect x="12" y="8" width="2" height="1" fill="#FFFF00"/><rect x="14" y="8" width="2" height="1" fill="#000000"/><rect x="0" y="9" width="1" height="1" fill="#0000FF"/><rect x="2" y="9" width="5" height="1" fill="#0000FF"/><rect x="7" y="9" width="1" height="1" fill="#000000"/><rect x="8" y="9" width="3" height="1" fill="#0000FF"/><rect x="11" y="9" width="1" height="1" fill="#000000"/><rect x="12" y="9" width="3" height="1" fill="#FFFF00"/><rect x="15" y="9" width="1" height="1" fill="#000000"/><rect x="2" y="10" width="5" height="1" fill="#0000FF"/><rect x="7" y="10" width="1" height="1" fill="#000000"/><rect x="8" y="10" width="2" height="1" fill="#0000FF"/><rect x="10" y="10" width="2" height="1" fill="#000000"/><rect x="12" y="10" width="3" height="1" fill="#FFFF00"/><rect x="15" y="10" width="1" height="1" fill="#000000"/><rect x="0" y="11" width="1" height="1" fill="#000000"/><rect x="7" y="11" width="1" height="1" fill="#000000"/><rect x="8" y="11" width="3" height="1" fill="#0000FF"/><rect x="11" y="11" width="2" height="1" fill="#000000"/><rect x="13" y="11" width="2" height="1" fill="#FFFF00"/><rect x="15" y="11" width="1" height="1" fill="#000000"/><rect x="0" y="12" width="1" height="1" fill="#000000"/><rect x="2" y="12" width="14" height="1" fill="#000000"/><rect x="2" y="13" width="7" height="1" fill="#000000"/><rect x="13" y="13" width="3" height="1" fill="#000000"/></svg>
<div class="t" style="left:25px;top:844px;font-size:14px;font-weight:bold;line-height:14px">Пуск</div>
<div class="sep" style="left:66px;top:841px;height:20px"></div>
<div style="left:70px;top:843px;width:3px;height:17px;border-left:1px solid #C8E4DC;border-top:1px solid #C8E4DC;border-right:1px solid #4E8A82;border-bottom:1px solid #4E8A82"></div>
<svg style="left:80px;top:843px;" width="16" height="15" viewBox="0 0 16 15" shape-rendering="crispEdges"><rect x="11" y="0" width="1" height="1" fill="#000000"/><rect x="12" y="0" width="1" height="1" fill="#D84040"/><rect x="0" y="1" width="10" height="1" fill="#2878D8"/><rect x="10" y="1" width="1" height="1" fill="#000000"/><rect x="11" y="1" width="1" height="1" fill="#FFFF00"/><rect x="12" y="1" width="1" height="1" fill="#000000"/><rect x="13" y="1" width="1" height="1" fill="#2878D8"/><rect x="0" y="2" width="1" height="1" fill="#2878D8"/><rect x="1" y="2" width="1" height="1" fill="#88C8F8"/><rect x="2" y="2" width="7" height="1" fill="#F0E8C8"/><rect x="9" y="2" width="1" height="1" fill="#000000"/><rect x="10" y="2" width="2" height="1" fill="#FFFF00"/><rect x="12" y="2" width="1" height="1" fill="#000000"/><rect x="13" y="2" width="1" height="1" fill="#88C8F8"/><rect x="14" y="2" width="1" height="1" fill="#404040"/><rect x="0" y="3" width="1" height="1" fill="#2878D8"/><rect x="1" y="3" width="7" height="1" fill="#F0E8C8"/><rect x="8" y="3" width="1" height="1" fill="#000000"/><rect x="9" y="3" width="2" height="1" fill="#FFFF00"/><rect x="11" y="3" width="1" height="1" fill="#000000"/><rect x="12" y="3" width="1" height="1" fill="#F0E8C8"/><rect x="13" y="3" width="1" height="1" fill="#2878D8"/><rect x="14" y="3" width="1" height="1" fill="#404040"/><rect x="0" y="4" width="1" height="1" fill="#2878D8"/><rect x="1" y="4" width="6" height="1" fill="#F0E8C8"/><rect x="7" y="4" width="1" height="1" fill="#000000"/><rect x="8" y="4" width="2" height="1" fill="#FFFF00"/><rect x="10" y="4" width="1" height="1" fill="#000000"/><rect x="11" y="4" width="2" height="1" fill="#F0E8C8"/><rect x="13" y="4" width="1" height="1" fill="#2878D8"/><rect x="14" y="4" width="1" height="1" fill="#404040"/><rect x="0" y="5" width="1" height="1" fill="#2878D8"/><rect x="1" y="5" width="5" height="1" fill="#F0E8C8"/><rect x="6" y="5" width="1" height="1" fill="#000000"/><rect x="7" y="5" width="2" height="1" fill="#FFFF00"/><rect x="9" y="5" width="1" height="1" fill="#000000"/><rect x="10" y="5" width="3" height="1" fill="#F0E8C8"/><rect x="13" y="5" width="1" height="1" fill="#2878D8"/><rect x="14" y="5" width="1" height="1" fill="#404040"/><rect x="0" y="6" width="1" height="1" fill="#2878D8"/><rect x="1" y="6" width="1" height="1" fill="#F0E8C8"/><rect x="2" y="6" width="3" height="1" fill="#FFFFFF"/><rect x="5" y="6" width="1" height="1" fill="#000000"/><rect x="6" y="6" width="2" height="1" fill="#FFFF00"/><rect x="8" y="6" width="1" height="1" fill="#000000"/><rect x="9" y="6" width="4" height="1" fill="#F0E8C8"/><rect x="13" y="6" width="1" height="1" fill="#2878D8"/><rect x="14" y="6" width="1" height="1" fill="#404040"/><rect x="0" y="7" width="1" height="1" fill="#2878D8"/><rect x="1" y="7" width="1" height="1" fill="#F0E8C8"/><rect x="2" y="7" width="3" height="1" fill="#FFFFFF"/><rect x="5" y="7" width="3" height="1" fill="#000000"/><rect x="8" y="7" width="5" height="1" fill="#F0E8C8"/><rect x="13" y="7" width="1" height="1" fill="#2878D8"/><rect x="14" y="7" width="1" height="1" fill="#404040"/><rect x="0" y="8" width="1" height="1" fill="#2878D8"/><rect x="1" y="8" width="1" height="1" fill="#F0E8C8"/><rect x="2" y="8" width="3" height="1" fill="#FFFFFF"/><rect x="5" y="8" width="2" height="1" fill="#000000"/><rect x="7" y="8" width="1" height="1" fill="#FFFFFF"/><rect x="8" y="8" width="5" height="1" fill="#F0E8C8"/><rect x="13" y="8" width="1" height="1" fill="#2878D8"/><rect x="14" y="8" width="1" height="1" fill="#404040"/><rect x="0" y="9" width="1" height="1" fill="#2878D8"/><rect x="1" y="9" width="1" height="1" fill="#F0E8C8"/><rect x="2" y="9" width="6" height="1" fill="#FFFFFF"/><rect x="8" y="9" width="5" height="1" fill="#F0E8C8"/><rect x="13" y="9" width="1" height="1" fill="#2878D8"/><rect x="14" y="9" width="1" height="1" fill="#404040"/><rect x="0" y="10" width="1" height="1" fill="#2878D8"/><rect x="1" y="10" width="2" height="1" fill="#F0E8C8"/><rect x="3" y="10" width="6" height="1" fill="#000000"/><rect x="9" y="10" width="4" height="1" fill="#F0E8C8"/><rect x="13" y="10" width="1" height="1" fill="#2878D8"/><rect x="14" y="10" width="1" height="1" fill="#404040"/><rect x="0" y="11" width="1" height="1" fill="#2878D8"/><rect x="1" y="11" width="12" height="1" fill="#F0E8C8"/><rect x="13" y="11" width="1" height="1" fill="#2878D8"/><rect x="14" y="11" width="1" height="1" fill="#404040"/><rect x="0" y="12" width="1" height="1" fill="#2878D8"/><rect x="1" y="12" width="1" height="1" fill="#88C8F8"/><rect x="2" y="12" width="11" height="1" fill="#F0E8C8"/><rect x="13" y="12" width="1" height="1" fill="#88C8F8"/><rect x="14" y="12" width="1" height="1" fill="#404040"/><rect x="0" y="13" width="14" height="1" fill="#2878D8"/><rect x="14" y="13" width="1" height="1" fill="#404040"/><rect x="0" y="14" width="14" height="1" fill="#404040"/></svg>
<svg style="left:103px;top:843px;" width="16" height="13" viewBox="0 0 16 13" shape-rendering="crispEdges"><rect x="10" y="0" width="3" height="1" fill="#88C8F8"/><rect x="7" y="1" width="6" height="1" fill="#2878D8"/><rect x="13" y="1" width="2" height="1" fill="#88C8F8"/><rect x="5" y="2" width="3" height="1" fill="#2878D8"/><rect x="8" y="2" width="3" height="1" fill="#FFFFFF"/><rect x="11" y="2" width="3" height="1" fill="#2878D8"/><rect x="14" y="2" width="1" height="1" fill="#88C8F8"/><rect x="4" y="3" width="10" height="1" fill="#2878D8"/><rect x="14" y="3" width="1" height="1" fill="#88C8F8"/><rect x="3" y="4" width="3" height="1" fill="#2878D8"/><rect x="6" y="4" width="2" height="1" fill="#FFFFFF"/><rect x="11" y="4" width="3" height="1" fill="#2878D8"/><rect x="14" y="4" width="1" height="1" fill="#88C8F8"/><rect x="2" y="5" width="1" height="1" fill="#88C8F8"/><rect x="3" y="5" width="3" height="1" fill="#2878D8"/><rect x="6" y="5" width="1" height="1" fill="#FFFFFF"/><rect x="12" y="5" width="2" height="1" fill="#2878D8"/><rect x="14" y="5" width="1" height="1" fill="#88C8F8"/><rect x="2" y="6" width="1" height="1" fill="#88C8F8"/><rect x="3" y="6" width="12" height="1" fill="#2878D8"/><rect x="1" y="7" width="1" height="1" fill="#88C8F8"/><rect x="2" y="7" width="12" height="1" fill="#2878D8"/><rect x="1" y="8" width="1" height="1" fill="#88C8F8"/><rect x="2" y="8" width="3" height="1" fill="#2878D8"/><rect x="5" y="8" width="1" height="1" fill="#FFFFFF"/><rect x="1" y="9" width="1" height="1" fill="#88C8F8"/><rect x="2" y="9" width="3" height="1" fill="#2878D8"/><rect x="5" y="9" width="2" height="1" fill="#FFFFFF"/><rect x="11" y="9" width="2" height="1" fill="#2878D8"/><rect x="1" y="10" width="2" height="1" fill="#88C8F8"/><rect x="3" y="10" width="10" height="1" fill="#2878D8"/><rect x="2" y="11" width="2" height="1" fill="#88C8F8"/><rect x="4" y="11" width="8" height="1" fill="#2878D8"/><rect x="3" y="12" width="7" height="1" fill="#88C8F8"/></svg>
<svg style="left:126px;top:843px;" width="16" height="15" viewBox="0 0 16 15" shape-rendering="crispEdges"><rect x="7" y="0" width="2" height="1" fill="#000000"/><rect x="6" y="1" width="1" height="1" fill="#000000"/><rect x="7" y="1" width="2" height="1" fill="#FFFFFF"/><rect x="9" y="1" width="1" height="1" fill="#000000"/><rect x="12" y="1" width="2" height="1" fill="#000000"/><rect x="5" y="2" width="1" height="1" fill="#000000"/><rect x="6" y="2" width="4" height="1" fill="#FFFFFF"/><rect x="10" y="2" width="2" height="1" fill="#000000"/><rect x="12" y="2" width="2" height="1" fill="#F0A030"/><rect x="14" y="2" width="1" height="1" fill="#000000"/><rect x="4" y="3" width="1" height="1" fill="#000000"/><rect x="5" y="3" width="5" height="1" fill="#FFFFFF"/><rect x="10" y="3" width="1" height="1" fill="#000000"/><rect x="11" y="3" width="3" height="1" fill="#F0A030"/><rect x="14" y="3" width="1" height="1" fill="#000000"/><rect x="3" y="4" width="1" height="1" fill="#000000"/><rect x="4" y="4" width="5" height="1" fill="#FFFFFF"/><rect x="9" y="4" width="1" height="1" fill="#000000"/><rect x="10" y="4" width="3" height="1" fill="#F0A030"/><rect x="13" y="4" width="1" height="1" fill="#000000"/><rect x="2" y="5" width="1" height="1" fill="#000000"/><rect x="3" y="5" width="4" height="1" fill="#FFFFFF"/><rect x="7" y="5" width="1" height="1" fill="#000000"/><rect x="8" y="5" width="4" height="1" fill="#F0A030"/><rect x="12" y="5" width="1" height="1" fill="#FFFFFF"/><rect x="13" y="5" width="1" height="1" fill="#000000"/><rect x="1" y="6" width="1" height="1" fill="#000000"/><rect x="2" y="6" width="4" height="1" fill="#FFFFFF"/><rect x="6" y="6" width="1" height="1" fill="#000000"/><rect x="7" y="6" width="2" height="1" fill="#F0A030"/><rect x="9" y="6" width="1" height="1" fill="#D84040"/><rect x="10" y="6" width="2" height="1" fill="#F0A030"/><rect x="12" y="6" width="2" height="1" fill="#FFFFFF"/><rect x="14" y="6" width="1" height="1" fill="#000000"/><rect x="0" y="7" width="1" height="1" fill="#000000"/><rect x="1" y="7" width="4" height="1" fill="#FFFFFF"/><rect x="5" y="7" width="6" height="1" fill="#F0A030"/><rect x="11" y="7" width="4" height="1" fill="#FFFFFF"/><rect x="15" y="7" width="1" height="1" fill="#000000"/><rect x="1" y="8" width="1" height="1" fill="#000000"/><rect x="2" y="8" width="2" height="1" fill="#FFFFFF"/><rect x="4" y="8" width="5" height="1" fill="#F0A030"/><rect x="9" y="8" width="1" height="1" fill="#000000"/><rect x="10" y="8" width="4" height="1" fill="#FFFFFF"/><rect x="14" y="8" width="1" height="1" fill="#000000"/><rect x="2" y="9" width="1" height="1" fill="#000000"/><rect x="3" y="9" width="4" height="1" fill="#F0A030"/><rect x="7" y="9" width="1" height="1" fill="#000000"/><rect x="8" y="9" width="5" height="1" fill="#FFFFFF"/><rect x="13" y="9" width="1" height="1" fill="#000000"/><rect x="1" y="10" width="1" height="1" fill="#000000"/><rect x="2" y="10" width="3" height="1" fill="#F0A030"/><rect x="5" y="10" width="1" height="1" fill="#000000"/><rect x="6" y="10" width="6" height="1" fill="#FFFFFF"/><rect x="12" y="10" width="1" height="1" fill="#000000"/><rect x="0" y="11" width="1" height="1" fill="#000000"/><rect x="1" y="11" width="2" height="1" fill="#F0A030"/><rect x="3" y="11" width="2" height="1" fill="#000000"/><rect x="5" y="11" width="6" height="1" fill="#FFFFFF"/><rect x="11" y="11" width="1" height="1" fill="#000000"/><rect x="0" y="12" width="3" height="1" fill="#000000"/><rect x="4" y="12" width="1" height="1" fill="#000000"/><rect x="5" y="12" width="5" height="1" fill="#FFFFFF"/><rect x="10" y="12" width="1" height="1" fill="#000000"/><rect x="5" y="13" width="1" height="1" fill="#000000"/><rect x="6" y="13" width="3" height="1" fill="#FFFFFF"/><rect x="9" y="13" width="1" height="1" fill="#000000"/><rect x="6" y="14" width="3" height="1" fill="#000000"/></svg>
<svg style="left:149px;top:843px;" width="16" height="14" viewBox="0 0 16 14" shape-rendering="crispEdges"><rect x="5" y="0" width="6" height="1" fill="#2878D8"/><rect x="3" y="1" width="4" height="1" fill="#2878D8"/><rect x="7" y="1" width="3" height="1" fill="#FFFFFF"/><rect x="10" y="1" width="3" height="1" fill="#2878D8"/><rect x="2" y="2" width="5" height="1" fill="#2878D8"/><rect x="7" y="2" width="3" height="1" fill="#FFFFFF"/><rect x="10" y="2" width="4" height="1" fill="#2878D8"/><rect x="1" y="3" width="14" height="1" fill="#2878D8"/><rect x="1" y="4" width="1" height="1" fill="#2878D8"/><rect x="2" y="4" width="3" height="1" fill="#10E010"/><rect x="5" y="4" width="6" height="1" fill="#2878D8"/><rect x="11" y="4" width="3" height="1" fill="#10E010"/><rect x="14" y="4" width="1" height="1" fill="#2878D8"/><rect x="0" y="5" width="3" height="1" fill="#2878D8"/><rect x="3" y="5" width="4" height="1" fill="#10E010"/><rect x="7" y="5" width="2" height="1" fill="#2878D8"/><rect x="9" y="5" width="4" height="1" fill="#10E010"/><rect x="13" y="5" width="3" height="1" fill="#2878D8"/><rect x="0" y="6" width="4" height="1" fill="#2878D8"/><rect x="4" y="6" width="8" height="1" fill="#10E010"/><rect x="12" y="6" width="4" height="1" fill="#2878D8"/><rect x="0" y="7" width="5" height="1" fill="#2878D8"/><rect x="5" y="7" width="2" height="1" fill="#10E010"/><rect x="7" y="7" width="3" height="1" fill="#D84040"/><rect x="10" y="7" width="1" height="1" fill="#10E010"/><rect x="11" y="7" width="5" height="1" fill="#2878D8"/><rect x="0" y="8" width="6" height="1" fill="#2878D8"/><rect x="6" y="8" width="2" height="1" fill="#10E010"/><rect x="8" y="8" width="1" height="1" fill="#D84040"/><rect x="9" y="8" width="1" height="1" fill="#10E010"/><rect x="10" y="8" width="6" height="1" fill="#2878D8"/><rect x="1" y="9" width="5" height="1" fill="#2878D8"/><rect x="6" y="9" width="3" height="1" fill="#10E010"/><rect x="9" y="9" width="6" height="1" fill="#2878D8"/><rect x="1" y="10" width="6" height="1" fill="#2878D8"/><rect x="7" y="10" width="1" height="1" fill="#10E010"/><rect x="8" y="10" width="7" height="1" fill="#2878D8"/><rect x="2" y="11" width="5" height="1" fill="#2878D8"/><rect x="7" y="11" width="1" height="1" fill="#10E010"/><rect x="8" y="11" width="6" height="1" fill="#2878D8"/><rect x="3" y="12" width="10" height="1" fill="#2878D8"/><rect x="5" y="13" width="6" height="1" fill="#2878D8"/></svg>
<div class="t" style="left:192px;top:843px;font-size:12px;font-weight:bold;line-height:12px">»</div>
<div class="sep" style="left:203px;top:841px;height:20px"></div>
<div style="left:207px;top:843px;width:3px;height:17px;border-left:1px solid #C8E4DC;border-top:1px solid #C8E4DC;border-right:1px solid #4E8A82;border-bottom:1px solid #4E8A82"></div>
<div class="rb" style="left:213px;top:840px;width:126px;height:22px;"></div>
<div class="t" style="left:235px;top:845px;font-size:13px;line-height:13px;letter-spacing:1.6px">музыка</div>
<div class="rb" style="left:342px;top:840px;width:126px;height:22px;"></div>
<div class="t" style="left:363px;top:845px;font-size:13px;line-height:13px;letter-spacing:0px">22. Yaki-Da - I ...</div>
<div class="rb" style="left:471px;top:840px;width:126px;height:22px;"></div>
<div class="t" style="left:492px;top:845px;font-size:13px;line-height:13px;letter-spacing:0.35px">КР БД</div>
<div class="rb" style="left:600px;top:840px;width:126px;height:22px;"></div>
<div class="t" style="left:621px;top:845px;font-size:13px;line-height:13px;letter-spacing:0.76px">бд лекарстве...</div>
<div class="rb" style="left:729px;top:840px;width:126px;height:22px;"></div>
<div class="t" style="left:751px;top:845px;font-size:13px;line-height:13px;letter-spacing:0.98px">текстовая ча...</div>
<div style="left:857px;top:840px;width:127px;height:22px;background:#C0DCD4;border:1px solid;border-color:#000 #C8E4DC #C8E4DC #000;box-shadow:inset 1px 1px 0 #4E8A82"></div>
<div class="t" style="left:880px;top:846px;font-size:13px;font-weight:bold;line-height:13px;letter-spacing:1.48px">лекарствен...</div>
<svg style="left:217px;top:844px;" width="16" height="13" viewBox="0 0 16 13" shape-rendering="crispEdges"><rect x="3" y="0" width="5" height="1" fill="#A0A000"/><rect x="2" y="1" width="1" height="1" fill="#A0A000"/><rect x="3" y="1" width="5" height="1" fill="#FFFFFF"/><rect x="8" y="1" width="1" height="1" fill="#A0A000"/><rect x="2" y="2" width="1" height="1" fill="#A0A000"/><rect x="3" y="2" width="1" height="1" fill="#FFFFFF"/><rect x="4" y="2" width="4" height="1" fill="#FFFF90"/><rect x="8" y="2" width="1" height="1" fill="#FFFFFF"/><rect x="9" y="2" width="6" height="1" fill="#A0A000"/><rect x="2" y="3" width="1" height="1" fill="#A0A000"/><rect x="3" y="3" width="1" height="1" fill="#FFFFFF"/><rect x="4" y="3" width="6" height="1" fill="#FFFF90"/><rect x="10" y="3" width="4" height="1" fill="#FFFFFF"/><rect x="14" y="3" width="1" height="1" fill="#FFFF90"/><rect x="15" y="3" width="1" height="1" fill="#000000"/><rect x="2" y="4" width="1" height="1" fill="#A0A000"/><rect x="3" y="4" width="1" height="1" fill="#FFFFFF"/><rect x="4" y="4" width="11" height="1" fill="#FFFF90"/><rect x="15" y="4" width="1" height="1" fill="#000000"/><rect x="1" y="5" width="11" height="1" fill="#A0A000"/><rect x="12" y="5" width="3" height="1" fill="#FFFF90"/><rect x="15" y="5" width="1" height="1" fill="#000000"/><rect x="1" y="6" width="1" height="1" fill="#A0A000"/><rect x="2" y="6" width="1" height="1" fill="#FFFFFF"/><rect x="3" y="6" width="7" height="1" fill="#FFFF90"/><rect x="10" y="6" width="1" height="1" fill="#F8C8A0"/><rect x="11" y="6" width="1" height="1" fill="#000000"/><rect x="12" y="6" width="3" height="1" fill="#FFFF90"/><rect x="15" y="6" width="1" height="1" fill="#000000"/><rect x="2" y="7" width="1" height="1" fill="#FFFFFF"/><rect x="3" y="7" width="4" height="1" fill="#FFFF90"/><rect x="7" y="7" width="1" height="1" fill="#F8C8A0"/><rect x="8" y="7" width="4" height="1" fill="#FFFF90"/><rect x="12" y="7" width="1" height="1" fill="#000000"/><rect x="13" y="7" width="2" height="1" fill="#FFFF90"/><rect x="15" y="7" width="1" height="1" fill="#000000"/><rect x="2" y="8" width="1" height="1" fill="#A0A000"/><rect x="3" y="8" width="1" height="1" fill="#FFFFFF"/><rect x="4" y="8" width="2" height="1" fill="#FFFF90"/><rect x="6" y="8" width="1" height="1" fill="#F8C8A0"/><rect x="7" y="8" width="1" height="1" fill="#FFFF90"/><rect x="8" y="8" width="1" height="1" fill="#F8C8A0"/><rect x="9" y="8" width="1" height="1" fill="#FFFF90"/><rect x="10" y="8" width="2" height="1" fill="#F8C8A0"/><rect x="12" y="8" width="1" height="1" fill="#000000"/><rect x="13" y="8" width="2" height="1" fill="#FFFF90"/><rect x="15" y="8" width="1" height="1" fill="#000000"/><rect x="2" y="9" width="1" height="1" fill="#A0A000"/><rect x="3" y="9" width="1" height="1" fill="#FFFFFF"/><rect x="4" y="9" width="1" height="1" fill="#FFFF90"/><rect x="5" y="9" width="1" height="1" fill="#F8C8A0"/><rect x="6" y="9" width="1" height="1" fill="#FFFF90"/><rect x="7" y="9" width="6" height="1" fill="#F8C8A0"/><rect x="13" y="9" width="1" height="1" fill="#FFFF90"/><rect x="14" y="9" width="1" height="1" fill="#000000"/><rect x="3" y="10" width="1" height="1" fill="#A0A000"/><rect x="4" y="10" width="1" height="1" fill="#FFFFFF"/><rect x="5" y="10" width="2" height="1" fill="#F8C8A0"/><rect x="7" y="10" width="1" height="1" fill="#FFFF90"/><rect x="8" y="10" width="5" height="1" fill="#F8C8A0"/><rect x="13" y="10" width="1" height="1" fill="#FFFF90"/><rect x="14" y="10" width="1" height="1" fill="#000000"/><rect x="3" y="11" width="11" height="1" fill="#A0A000"/><rect x="14" y="11" width="1" height="1" fill="#000000"/><rect x="4" y="12" width="11" height="1" fill="#000000"/></svg>
<svg style="left:346px;top:843px;" width="16" height="15" viewBox="0 0 16 15" shape-rendering="crispEdges"><rect x="7" y="0" width="2" height="1" fill="#000000"/><rect x="6" y="1" width="1" height="1" fill="#000000"/><rect x="7" y="1" width="2" height="1" fill="#FFFFFF"/><rect x="9" y="1" width="1" height="1" fill="#000000"/><rect x="12" y="1" width="2" height="1" fill="#000000"/><rect x="5" y="2" width="1" height="1" fill="#000000"/><rect x="6" y="2" width="4" height="1" fill="#FFFFFF"/><rect x="10" y="2" width="2" height="1" fill="#000000"/><rect x="12" y="2" width="2" height="1" fill="#F0A030"/><rect x="14" y="2" width="1" height="1" fill="#000000"/><rect x="4" y="3" width="1" height="1" fill="#000000"/><rect x="5" y="3" width="5" height="1" fill="#FFFFFF"/><rect x="10" y="3" width="1" height="1" fill="#000000"/><rect x="11" y="3" width="3" height="1" fill="#F0A030"/><rect x="14" y="3" width="1" height="1" fill="#000000"/><rect x="3" y="4" width="1" height="1" fill="#000000"/><rect x="4" y="4" width="5" height="1" fill="#FFFFFF"/><rect x="9" y="4" width="1" height="1" fill="#000000"/><rect x="10" y="4" width="3" height="1" fill="#F0A030"/><rect x="13" y="4" width="1" height="1" fill="#000000"/><rect x="2" y="5" width="1" height="1" fill="#000000"/><rect x="3" y="5" width="4" height="1" fill="#FFFFFF"/><rect x="7" y="5" width="1" height="1" fill="#000000"/><rect x="8" y="5" width="4" height="1" fill="#F0A030"/><rect x="12" y="5" width="1" height="1" fill="#FFFFFF"/><rect x="13" y="5" width="1" height="1" fill="#000000"/><rect x="1" y="6" width="1" height="1" fill="#000000"/><rect x="2" y="6" width="4" height="1" fill="#FFFFFF"/><rect x="6" y="6" width="1" height="1" fill="#000000"/><rect x="7" y="6" width="2" height="1" fill="#F0A030"/><rect x="9" y="6" width="1" height="1" fill="#D84040"/><rect x="10" y="6" width="2" height="1" fill="#F0A030"/><rect x="12" y="6" width="2" height="1" fill="#FFFFFF"/><rect x="14" y="6" width="1" height="1" fill="#000000"/><rect x="0" y="7" width="1" height="1" fill="#000000"/><rect x="1" y="7" width="4" height="1" fill="#FFFFFF"/><rect x="5" y="7" width="6" height="1" fill="#F0A030"/><rect x="11" y="7" width="4" height="1" fill="#FFFFFF"/><rect x="15" y="7" width="1" height="1" fill="#000000"/><rect x="1" y="8" width="1" height="1" fill="#000000"/><rect x="2" y="8" width="2" height="1" fill="#FFFFFF"/><rect x="4" y="8" width="5" height="1" fill="#F0A030"/><rect x="9" y="8" width="1" height="1" fill="#000000"/><rect x="10" y="8" width="4" height="1" fill="#FFFFFF"/><rect x="14" y="8" width="1" height="1" fill="#000000"/><rect x="2" y="9" width="1" height="1" fill="#000000"/><rect x="3" y="9" width="4" height="1" fill="#F0A030"/><rect x="7" y="9" width="1" height="1" fill="#000000"/><rect x="8" y="9" width="5" height="1" fill="#FFFFFF"/><rect x="13" y="9" width="1" height="1" fill="#000000"/><rect x="1" y="10" width="1" height="1" fill="#000000"/><rect x="2" y="10" width="3" height="1" fill="#F0A030"/><rect x="5" y="10" width="1" height="1" fill="#000000"/><rect x="6" y="10" width="6" height="1" fill="#FFFFFF"/><rect x="12" y="10" width="1" height="1" fill="#000000"/><rect x="0" y="11" width="1" height="1" fill="#000000"/><rect x="1" y="11" width="2" height="1" fill="#F0A030"/><rect x="3" y="11" width="2" height="1" fill="#000000"/><rect x="5" y="11" width="6" height="1" fill="#FFFFFF"/><rect x="11" y="11" width="1" height="1" fill="#000000"/><rect x="0" y="12" width="3" height="1" fill="#000000"/><rect x="4" y="12" width="1" height="1" fill="#000000"/><rect x="5" y="12" width="5" height="1" fill="#FFFFFF"/><rect x="10" y="12" width="1" height="1" fill="#000000"/><rect x="5" y="13" width="1" height="1" fill="#000000"/><rect x="6" y="13" width="3" height="1" fill="#FFFFFF"/><rect x="9" y="13" width="1" height="1" fill="#000000"/><rect x="6" y="14" width="3" height="1" fill="#000000"/></svg>
<svg style="left:475px;top:844px;" width="16" height="13" viewBox="0 0 16 13" shape-rendering="crispEdges"><rect x="3" y="0" width="5" height="1" fill="#A0A000"/><rect x="2" y="1" width="1" height="1" fill="#A0A000"/><rect x="3" y="1" width="5" height="1" fill="#FFFFFF"/><rect x="8" y="1" width="1" height="1" fill="#A0A000"/><rect x="2" y="2" width="1" height="1" fill="#A0A000"/><rect x="3" y="2" width="1" height="1" fill="#FFFFFF"/><rect x="4" y="2" width="4" height="1" fill="#FFFF90"/><rect x="8" y="2" width="1" height="1" fill="#FFFFFF"/><rect x="9" y="2" width="6" height="1" fill="#A0A000"/><rect x="2" y="3" width="1" height="1" fill="#A0A000"/><rect x="3" y="3" width="1" height="1" fill="#FFFFFF"/><rect x="4" y="3" width="6" height="1" fill="#FFFF90"/><rect x="10" y="3" width="4" height="1" fill="#FFFFFF"/><rect x="14" y="3" width="1" height="1" fill="#FFFF90"/><rect x="15" y="3" width="1" height="1" fill="#000000"/><rect x="2" y="4" width="1" height="1" fill="#A0A000"/><rect x="3" y="4" width="1" height="1" fill="#FFFFFF"/><rect x="4" y="4" width="11" height="1" fill="#FFFF90"/><rect x="15" y="4" width="1" height="1" fill="#000000"/><rect x="1" y="5" width="11" height="1" fill="#A0A000"/><rect x="12" y="5" width="3" height="1" fill="#FFFF90"/><rect x="15" y="5" width="1" height="1" fill="#000000"/><rect x="1" y="6" width="1" height="1" fill="#A0A000"/><rect x="2" y="6" width="1" height="1" fill="#FFFFFF"/><rect x="3" y="6" width="7" height="1" fill="#FFFF90"/><rect x="10" y="6" width="1" height="1" fill="#F8C8A0"/><rect x="11" y="6" width="1" height="1" fill="#000000"/><rect x="12" y="6" width="3" height="1" fill="#FFFF90"/><rect x="15" y="6" width="1" height="1" fill="#000000"/><rect x="2" y="7" width="1" height="1" fill="#FFFFFF"/><rect x="3" y="7" width="4" height="1" fill="#FFFF90"/><rect x="7" y="7" width="1" height="1" fill="#F8C8A0"/><rect x="8" y="7" width="4" height="1" fill="#FFFF90"/><rect x="12" y="7" width="1" height="1" fill="#000000"/><rect x="13" y="7" width="2" height="1" fill="#FFFF90"/><rect x="15" y="7" width="1" height="1" fill="#000000"/><rect x="2" y="8" width="1" height="1" fill="#A0A000"/><rect x="3" y="8" width="1" height="1" fill="#FFFFFF"/><rect x="4" y="8" width="2" height="1" fill="#FFFF90"/><rect x="6" y="8" width="1" height="1" fill="#F8C8A0"/><rect x="7" y="8" width="1" height="1" fill="#FFFF90"/><rect x="8" y="8" width="1" height="1" fill="#F8C8A0"/><rect x="9" y="8" width="1" height="1" fill="#FFFF90"/><rect x="10" y="8" width="2" height="1" fill="#F8C8A0"/><rect x="12" y="8" width="1" height="1" fill="#000000"/><rect x="13" y="8" width="2" height="1" fill="#FFFF90"/><rect x="15" y="8" width="1" height="1" fill="#000000"/><rect x="2" y="9" width="1" height="1" fill="#A0A000"/><rect x="3" y="9" width="1" height="1" fill="#FFFFFF"/><rect x="4" y="9" width="1" height="1" fill="#FFFF90"/><rect x="5" y="9" width="1" height="1" fill="#F8C8A0"/><rect x="6" y="9" width="1" height="1" fill="#FFFF90"/><rect x="7" y="9" width="6" height="1" fill="#F8C8A0"/><rect x="13" y="9" width="1" height="1" fill="#FFFF90"/><rect x="14" y="9" width="1" height="1" fill="#000000"/><rect x="3" y="10" width="1" height="1" fill="#A0A000"/><rect x="4" y="10" width="1" height="1" fill="#FFFFFF"/><rect x="5" y="10" width="2" height="1" fill="#F8C8A0"/><rect x="7" y="10" width="1" height="1" fill="#FFFF90"/><rect x="8" y="10" width="5" height="1" fill="#F8C8A0"/><rect x="13" y="10" width="1" height="1" fill="#FFFF90"/><rect x="14" y="10" width="1" height="1" fill="#000000"/><rect x="3" y="11" width="11" height="1" fill="#A0A000"/><rect x="14" y="11" width="1" height="1" fill="#000000"/><rect x="4" y="12" width="11" height="1" fill="#000000"/></svg>
<svg style="left:604px;top:843px;" width="16" height="15" viewBox="0 0 16 15" shape-rendering="crispEdges"><rect x="2" y="0" width="10" height="1" fill="#000080"/><rect x="2" y="1" width="10" height="1" fill="#000080"/><rect x="2" y="2" width="1" height="1" fill="#000000"/><rect x="3" y="2" width="8" height="1" fill="#FFFFFF"/><rect x="11" y="2" width="1" height="1" fill="#000000"/><rect x="2" y="3" width="1" height="1" fill="#000000"/><rect x="3" y="3" width="2" height="1" fill="#FFFFFF"/><rect x="5" y="3" width="11" height="1" fill="#000080"/><rect x="2" y="4" width="1" height="1" fill="#000000"/><rect x="3" y="4" width="2" height="1" fill="#FFFFFF"/><rect x="5" y="4" width="11" height="1" fill="#000080"/><rect x="0" y="5" width="5" height="1" fill="#000080"/><rect x="5" y="5" width="10" height="1" fill="#FFFFFF"/><rect x="15" y="5" width="1" height="1" fill="#000000"/><rect x="0" y="6" width="5" height="1" fill="#000080"/><rect x="5" y="6" width="1" height="1" fill="#FFFFFF"/><rect x="6" y="6" width="2" height="1" fill="#808080"/><rect x="8" y="6" width="1" height="1" fill="#FFFFFF"/><rect x="9" y="6" width="2" height="1" fill="#808080"/><rect x="11" y="6" width="1" height="1" fill="#FFFFFF"/><rect x="12" y="6" width="2" height="1" fill="#808080"/><rect x="14" y="6" width="1" height="1" fill="#FFFFFF"/><rect x="15" y="6" width="1" height="1" fill="#000000"/><rect x="0" y="7" width="1" height="1" fill="#000000"/><rect x="1" y="7" width="3" height="1" fill="#FFFFFF"/><rect x="4" y="7" width="1" height="1" fill="#000000"/><rect x="5" y="7" width="10" height="1" fill="#FFFFFF"/><rect x="15" y="7" width="1" height="1" fill="#000000"/><rect x="0" y="8" width="1" height="1" fill="#000000"/><rect x="1" y="8" width="1" height="1" fill="#FFFFFF"/><rect x="2" y="8" width="2" height="1" fill="#808080"/><rect x="4" y="8" width="1" height="1" fill="#000000"/><rect x="5" y="8" width="1" height="1" fill="#FFFFFF"/><rect x="6" y="8" width="2" height="1" fill="#808080"/><rect x="8" y="8" width="1" height="1" fill="#FFFFFF"/><rect x="9" y="8" width="2" height="1" fill="#808080"/><rect x="11" y="8" width="1" height="1" fill="#FFFFFF"/><rect x="12" y="8" width="2" height="1" fill="#808080"/><rect x="14" y="8" width="1" height="1" fill="#FFFFFF"/><rect x="15" y="8" width="1" height="1" fill="#000000"/><rect x="0" y="9" width="1" height="1" fill="#000000"/><rect x="1" y="9" width="3" height="1" fill="#FFFFFF"/><rect x="4" y="9" width="1" height="1" fill="#000000"/><rect x="5" y="9" width="10" height="1" fill="#FFFFFF"/><rect x="15" y="9" width="1" height="1" fill="#000000"/><rect x="0" y="10" width="1" height="1" fill="#000000"/><rect x="1" y="10" width="1" height="1" fill="#FFFFFF"/><rect x="2" y="10" width="2" height="1" fill="#808080"/><rect x="4" y="10" width="1" height="1" fill="#000000"/><rect x="5" y="10" width="1" height="1" fill="#FFFFFF"/><rect x="6" y="10" width="2" height="1" fill="#808080"/><rect x="8" y="10" width="1" height="1" fill="#FFFFFF"/><rect x="9" y="10" width="2" height="1" fill="#808080"/><rect x="11" y="10" width="1" height="1" fill="#FFFFFF"/><rect x="12" y="10" width="2" height="1" fill="#808080"/><rect x="14" y="10" width="1" height="1" fill="#FFFFFF"/><rect x="15" y="10" width="1" height="1" fill="#000000"/><rect x="0" y="11" width="1" height="1" fill="#000000"/><rect x="1" y="11" width="3" height="1" fill="#FFFFFF"/><rect x="4" y="11" width="1" height="1" fill="#000000"/><rect x="5" y="11" width="10" height="1" fill="#FFFFFF"/><rect x="15" y="11" width="1" height="1" fill="#000000"/><rect x="0" y="12" width="1" height="1" fill="#000000"/><rect x="1" y="12" width="1" height="1" fill="#FFFFFF"/><rect x="2" y="12" width="2" height="1" fill="#808080"/><rect x="4" y="12" width="12" height="1" fill="#000000"/><rect x="0" y="13" width="1" height="1" fill="#000000"/><rect x="1" y="13" width="9" height="1" fill="#FFFFFF"/><rect x="10" y="13" width="1" height="1" fill="#000000"/><rect x="0" y="14" width="11" height="1" fill="#000000"/></svg>
<svg style="left:733px;top:843px;" width="16" height="12" viewBox="0 0 16 12" shape-rendering="crispEdges"><rect x="3" y="0" width="8" height="1" fill="#404040"/><rect x="3" y="1" width="1" height="1" fill="#404040"/><rect x="4" y="1" width="5" height="1" fill="#FFFFFF"/><rect x="9" y="1" width="1" height="1" fill="#404040"/><rect x="10" y="1" width="1" height="1" fill="#FFFFFF"/><rect x="11" y="1" width="1" height="1" fill="#404040"/><rect x="0" y="2" width="8" height="1" fill="#000080"/><rect x="8" y="2" width="1" height="1" fill="#FFFFFF"/><rect x="9" y="2" width="1" height="1" fill="#404040"/><rect x="10" y="2" width="2" height="1" fill="#FFFFFF"/><rect x="12" y="2" width="1" height="1" fill="#404040"/><rect x="0" y="3" width="1" height="1" fill="#000080"/><rect x="1" y="3" width="6" height="1" fill="#6060FF"/><rect x="7" y="3" width="1" height="1" fill="#000080"/><rect x="8" y="3" width="1" height="1" fill="#FFFFFF"/><rect x="9" y="3" width="5" height="1" fill="#404040"/><rect x="0" y="4" width="1" height="1" fill="#000080"/><rect x="1" y="4" width="1" height="1" fill="#6060FF"/><rect x="2" y="4" width="1" height="1" fill="#FFFFFF"/><rect x="3" y="4" width="1" height="1" fill="#6060FF"/><rect x="4" y="4" width="1" height="1" fill="#FFFFFF"/><rect x="5" y="4" width="1" height="1" fill="#6060FF"/><rect x="6" y="4" width="1" height="1" fill="#FFFFFF"/><rect x="7" y="4" width="1" height="1" fill="#000080"/><rect x="8" y="4" width="5" height="1" fill="#FFFFFF"/><rect x="13" y="4" width="1" height="1" fill="#404040"/><rect x="0" y="5" width="1" height="1" fill="#000080"/><rect x="1" y="5" width="1" height="1" fill="#6060FF"/><rect x="2" y="5" width="1" height="1" fill="#FFFFFF"/><rect x="3" y="5" width="1" height="1" fill="#6060FF"/><rect x="4" y="5" width="1" height="1" fill="#FFFFFF"/><rect x="5" y="5" width="1" height="1" fill="#6060FF"/><rect x="6" y="5" width="1" height="1" fill="#FFFFFF"/><rect x="7" y="5" width="1" height="1" fill="#000080"/><rect x="8" y="5" width="5" height="1" fill="#FFFFFF"/><rect x="13" y="5" width="1" height="1" fill="#404040"/><rect x="0" y="6" width="1" height="1" fill="#000080"/><rect x="1" y="6" width="1" height="1" fill="#6060FF"/><rect x="2" y="6" width="4" height="1" fill="#FFFFFF"/><rect x="6" y="6" width="1" height="1" fill="#6060FF"/><rect x="7" y="6" width="1" height="1" fill="#000080"/><rect x="8" y="6" width="5" height="1" fill="#FFFFFF"/><rect x="13" y="6" width="1" height="1" fill="#404040"/><rect x="0" y="7" width="1" height="1" fill="#000080"/><rect x="1" y="7" width="2" height="1" fill="#6060FF"/><rect x="3" y="7" width="1" height="1" fill="#FFFFFF"/><rect x="4" y="7" width="1" height="1" fill="#6060FF"/><rect x="5" y="7" width="1" height="1" fill="#FFFFFF"/><rect x="6" y="7" width="1" height="1" fill="#6060FF"/><rect x="7" y="7" width="1" height="1" fill="#000080"/><rect x="8" y="7" width="5" height="1" fill="#FFFFFF"/><rect x="13" y="7" width="1" height="1" fill="#404040"/><rect x="0" y="8" width="8" height="1" fill="#000080"/><rect x="8" y="8" width="5" height="1" fill="#FFFFFF"/><rect x="13" y="8" width="1" height="1" fill="#404040"/><rect x="3" y="9" width="1" height="1" fill="#404040"/><rect x="4" y="9" width="9" height="1" fill="#FFFFFF"/><rect x="13" y="9" width="1" height="1" fill="#404040"/><rect x="3" y="10" width="1" height="1" fill="#404040"/><rect x="4" y="10" width="9" height="1" fill="#FFFFFF"/><rect x="13" y="10" width="1" height="1" fill="#404040"/><rect x="3" y="11" width="12" height="1" fill="#404040"/></svg>
<svg style="left:864px;top:846px;" width="13" height="12" viewBox="0 0 13 12" shape-rendering="crispEdges"><rect x="0" y="0" width="12" height="1" fill="#000080"/><rect x="12" y="0" width="1" height="1" fill="#000000"/><rect x="0" y="1" width="12" height="1" fill="#000080"/><rect x="12" y="1" width="1" height="1" fill="#000000"/><rect x="0" y="2" width="1" height="1" fill="#000000"/><rect x="1" y="2" width="3" height="1" fill="#FFFFFF"/><rect x="4" y="2" width="1" height="1" fill="#808080"/><rect x="5" y="2" width="3" height="1" fill="#FFFFFF"/><rect x="8" y="2" width="1" height="1" fill="#808080"/><rect x="9" y="2" width="3" height="1" fill="#FFFFFF"/><rect x="12" y="2" width="1" height="1" fill="#000000"/><rect x="0" y="3" width="1" height="1" fill="#000000"/><rect x="1" y="3" width="11" height="1" fill="#808080"/><rect x="12" y="3" width="1" height="1" fill="#000000"/><rect x="0" y="4" width="1" height="1" fill="#000000"/><rect x="1" y="4" width="3" height="1" fill="#FFFFFF"/><rect x="4" y="4" width="1" height="1" fill="#808080"/><rect x="5" y="4" width="3" height="1" fill="#FFFFFF"/><rect x="8" y="4" width="1" height="1" fill="#808080"/><rect x="9" y="4" width="3" height="1" fill="#FFFFFF"/><rect x="12" y="4" width="1" height="1" fill="#000000"/><rect x="0" y="5" width="1" height="1" fill="#000000"/><rect x="1" y="5" width="11" height="1" fill="#808080"/><rect x="12" y="5" width="1" height="1" fill="#000000"/><rect x="0" y="6" width="1" height="1" fill="#000000"/><rect x="1" y="6" width="3" height="1" fill="#FFFFFF"/><rect x="4" y="6" width="1" height="1" fill="#808080"/><rect x="5" y="6" width="3" height="1" fill="#FFFFFF"/><rect x="8" y="6" width="1" height="1" fill="#808080"/><rect x="9" y="6" width="3" height="1" fill="#FFFFFF"/><rect x="12" y="6" width="1" height="1" fill="#000000"/><rect x="0" y="7" width="1" height="1" fill="#000000"/><rect x="1" y="7" width="11" height="1" fill="#808080"/><rect x="12" y="7" width="1" height="1" fill="#000000"/><rect x="0" y="8" width="1" height="1" fill="#000000"/><rect x="1" y="8" width="3" height="1" fill="#FFFFFF"/><rect x="4" y="8" width="1" height="1" fill="#808080"/><rect x="5" y="8" width="3" height="1" fill="#FFFFFF"/><rect x="8" y="8" width="1" height="1" fill="#808080"/><rect x="9" y="8" width="3" height="1" fill="#FFFFFF"/><rect x="12" y="8" width="1" height="1" fill="#000000"/><rect x="0" y="9" width="1" height="1" fill="#000000"/><rect x="1" y="9" width="11" height="1" fill="#808080"/><rect x="12" y="9" width="1" height="1" fill="#000000"/><rect x="0" y="10" width="1" height="1" fill="#000000"/><rect x="1" y="10" width="3" height="1" fill="#FFFFFF"/><rect x="4" y="10" width="1" height="1" fill="#808080"/><rect x="5" y="10" width="3" height="1" fill="#FFFFFF"/><rect x="8" y="10" width="1" height="1" fill="#808080"/><rect x="9" y="10" width="3" height="1" fill="#FFFFFF"/><rect x="12" y="10" width="1" height="1" fill="#000000"/><rect x="0" y="11" width="13" height="1" fill="#000000"/></svg>
<div class="sep" style="left:991px;top:841px;height:20px"></div>
<div style="left:996px;top:840px;width:155px;height:22px;border:1px solid;border-color:#4E8A82 #C8E4DC #C8E4DC #4E8A82"></div>
<svg style="left:999px;top:843px;" width="16" height="15" viewBox="0 0 16 15" shape-rendering="crispEdges"><rect x="0" y="0" width="3" height="1" fill="#000000"/><rect x="4" y="0" width="3" height="1" fill="#000000"/><rect x="0" y="1" width="1" height="1" fill="#000000"/><rect x="1" y="1" width="1" height="1" fill="#4040C0"/><rect x="2" y="1" width="1" height="1" fill="#000000"/><rect x="4" y="1" width="1" height="1" fill="#000000"/><rect x="5" y="1" width="1" height="1" fill="#4040C0"/><rect x="6" y="1" width="1" height="1" fill="#000000"/><rect x="0" y="2" width="1" height="1" fill="#000000"/><rect x="1" y="2" width="1" height="1" fill="#FFFFFF"/><rect x="2" y="2" width="1" height="1" fill="#000000"/><rect x="4" y="2" width="1" height="1" fill="#000000"/><rect x="5" y="2" width="1" height="1" fill="#FFFFFF"/><rect x="6" y="2" width="1" height="1" fill="#000000"/><rect x="7" y="2" width="6" height="1" fill="#000080"/><rect x="0" y="3" width="1" height="1" fill="#000000"/><rect x="1" y="3" width="1" height="1" fill="#4040C0"/><rect x="2" y="3" width="1" height="1" fill="#000000"/><rect x="4" y="3" width="1" height="1" fill="#000000"/><rect x="5" y="3" width="1" height="1" fill="#4040C0"/><rect x="6" y="3" width="1" height="1" fill="#000000"/><rect x="7" y="3" width="5" height="1" fill="#FFFFFF"/><rect x="12" y="3" width="1" height="1" fill="#000000"/><rect x="0" y="4" width="7" height="1" fill="#000000"/><rect x="7" y="4" width="5" height="1" fill="#FFFFFF"/><rect x="12" y="4" width="1" height="1" fill="#000000"/><rect x="1" y="5" width="1" height="1" fill="#000000"/><rect x="2" y="5" width="10" height="1" fill="#FFFFFF"/><rect x="12" y="5" width="1" height="1" fill="#000000"/><rect x="1" y="6" width="1" height="1" fill="#000000"/><rect x="2" y="6" width="10" height="1" fill="#FFFFFF"/><rect x="12" y="6" width="1" height="1" fill="#000000"/><rect x="1" y="7" width="1" height="1" fill="#000000"/><rect x="2" y="7" width="7" height="1" fill="#FFFFFF"/><rect x="9" y="7" width="5" height="1" fill="#D84040"/><rect x="1" y="8" width="1" height="1" fill="#000000"/><rect x="2" y="8" width="6" height="1" fill="#FFFFFF"/><rect x="8" y="8" width="1" height="1" fill="#D84040"/><rect x="9" y="8" width="5" height="1" fill="#FFFFFF"/><rect x="14" y="8" width="1" height="1" fill="#D84040"/><rect x="1" y="9" width="1" height="1" fill="#000000"/><rect x="2" y="9" width="5" height="1" fill="#FFFFFF"/><rect x="7" y="9" width="1" height="1" fill="#D84040"/><rect x="8" y="9" width="3" height="1" fill="#FFFFFF"/><rect x="11" y="9" width="1" height="1" fill="#000080"/><rect x="12" y="9" width="3" height="1" fill="#FFFFFF"/><rect x="15" y="9" width="1" height="1" fill="#D84040"/><rect x="1" y="10" width="1" height="1" fill="#000000"/><rect x="2" y="10" width="5" height="1" fill="#FFFFFF"/><rect x="7" y="10" width="1" height="1" fill="#D84040"/><rect x="8" y="10" width="4" height="1" fill="#FFFFFF"/><rect x="12" y="10" width="1" height="1" fill="#000080"/><rect x="13" y="10" width="2" height="1" fill="#FFFFFF"/><rect x="15" y="10" width="1" height="1" fill="#D84040"/><rect x="1" y="11" width="6" height="1" fill="#000000"/><rect x="7" y="11" width="1" height="1" fill="#D84040"/><rect x="8" y="11" width="7" height="1" fill="#FFFFFF"/><rect x="15" y="11" width="1" height="1" fill="#D84040"/><rect x="8" y="12" width="1" height="1" fill="#D84040"/><rect x="9" y="12" width="5" height="1" fill="#FFFFFF"/><rect x="14" y="12" width="1" height="1" fill="#D84040"/><rect x="9" y="13" width="5" height="1" fill="#D84040"/></svg>
<div style="left:1016px;top:843px;width:16px;height:16px;background:#008080"></div><div class="t" style="left:1016px;top:845px;font-size:13px;line-height:13px;color:#fff;letter-spacing:-0.3px">Ru</div>
<svg style="left:1033px;top:843px;" width="16" height="13" viewBox="0 0 16 13" shape-rendering="crispEdges"><rect x="7" y="0" width="2" height="1" fill="#000000"/><rect x="6" y="1" width="1" height="1" fill="#000000"/><rect x="7" y="1" width="1" height="1" fill="#FFFF00"/><rect x="8" y="1" width="1" height="1" fill="#000000"/><rect x="5" y="2" width="1" height="1" fill="#000000"/><rect x="6" y="2" width="2" height="1" fill="#FFFF00"/><rect x="8" y="2" width="1" height="1" fill="#000000"/><rect x="4" y="3" width="1" height="1" fill="#000000"/><rect x="5" y="3" width="3" height="1" fill="#FFFF00"/><rect x="8" y="3" width="1" height="1" fill="#000000"/><rect x="12" y="3" width="1" height="1" fill="#C8C8C8"/><rect x="0" y="4" width="4" height="1" fill="#000000"/><rect x="4" y="4" width="4" height="1" fill="#FFFF00"/><rect x="8" y="4" width="1" height="1" fill="#000000"/><rect x="11" y="4" width="1" height="1" fill="#C8C8C8"/><rect x="0" y="5" width="1" height="1" fill="#000000"/><rect x="1" y="5" width="2" height="1" fill="#FFFF00"/><rect x="3" y="5" width="1" height="1" fill="#FFFFFF"/><rect x="4" y="5" width="4" height="1" fill="#FFFF00"/><rect x="8" y="5" width="1" height="1" fill="#000000"/><rect x="0" y="6" width="1" height="1" fill="#000000"/><rect x="1" y="6" width="1" height="1" fill="#FFFF00"/><rect x="2" y="6" width="1" height="1" fill="#FFFFFF"/><rect x="3" y="6" width="5" height="1" fill="#FFFF00"/><rect x="8" y="6" width="1" height="1" fill="#000000"/><rect x="10" y="6" width="3" height="1" fill="#C8C8C8"/><rect x="0" y="7" width="1" height="1" fill="#000000"/><rect x="1" y="7" width="2" height="1" fill="#FFFF00"/><rect x="3" y="7" width="1" height="1" fill="#FFFFFF"/><rect x="4" y="7" width="4" height="1" fill="#FFFF00"/><rect x="8" y="7" width="1" height="1" fill="#000000"/><rect x="0" y="8" width="4" height="1" fill="#000000"/><rect x="4" y="8" width="4" height="1" fill="#FFFF00"/><rect x="8" y="8" width="1" height="1" fill="#000000"/><rect x="11" y="8" width="1" height="1" fill="#C8C8C8"/><rect x="4" y="9" width="1" height="1" fill="#000000"/><rect x="5" y="9" width="3" height="1" fill="#FFFF00"/><rect x="8" y="9" width="1" height="1" fill="#000000"/><rect x="12" y="9" width="1" height="1" fill="#C8C8C8"/><rect x="5" y="10" width="1" height="1" fill="#000000"/><rect x="6" y="10" width="2" height="1" fill="#FFFF00"/><rect x="8" y="10" width="1" height="1" fill="#000000"/><rect x="6" y="11" width="1" height="1" fill="#000000"/><rect x="7" y="11" width="1" height="1" fill="#FFFF00"/><rect x="8" y="11" width="1" height="1" fill="#000000"/><rect x="7" y="12" width="2" height="1" fill="#000000"/></svg>
<svg style="left:1050px;top:843px;" width="16" height="13" viewBox="0 0 16 13" shape-rendering="crispEdges"><rect x="2" y="0" width="1" height="1" fill="#000000"/><rect x="3" y="0" width="8" height="1" fill="#FFFFFF"/><rect x="11" y="0" width="1" height="1" fill="#000000"/><rect x="1" y="1" width="1" height="1" fill="#000000"/><rect x="2" y="1" width="1" height="1" fill="#C8C8C8"/><rect x="3" y="1" width="4" height="1" fill="#FF00FF"/><rect x="7" y="1" width="4" height="1" fill="#00E000"/><rect x="11" y="1" width="1" height="1" fill="#C8C8C8"/><rect x="12" y="1" width="1" height="1" fill="#000000"/><rect x="1" y="2" width="1" height="1" fill="#000000"/><rect x="2" y="2" width="1" height="1" fill="#C8C8C8"/><rect x="3" y="2" width="4" height="1" fill="#FF00FF"/><rect x="7" y="2" width="4" height="1" fill="#00E000"/><rect x="11" y="2" width="1" height="1" fill="#C8C8C8"/><rect x="12" y="2" width="1" height="1" fill="#000000"/><rect x="2" y="3" width="1" height="1" fill="#000000"/><rect x="3" y="3" width="1" height="1" fill="#C8C8C8"/><rect x="4" y="3" width="3" height="1" fill="#FF00FF"/><rect x="7" y="3" width="4" height="1" fill="#00E000"/><rect x="11" y="3" width="1" height="1" fill="#C8C8C8"/><rect x="12" y="3" width="1" height="1" fill="#000000"/><rect x="2" y="4" width="1" height="1" fill="#000000"/><rect x="3" y="4" width="1" height="1" fill="#C8C8C8"/><rect x="4" y="4" width="3" height="1" fill="#FFFF00"/><rect x="7" y="4" width="4" height="1" fill="#0000F0"/><rect x="11" y="4" width="1" height="1" fill="#C8C8C8"/><rect x="12" y="4" width="1" height="1" fill="#000000"/><rect x="3" y="5" width="1" height="1" fill="#000000"/><rect x="4" y="5" width="1" height="1" fill="#C8C8C8"/><rect x="5" y="5" width="3" height="1" fill="#FFFF00"/><rect x="8" y="5" width="4" height="1" fill="#0000F0"/><rect x="12" y="5" width="1" height="1" fill="#C8C8C8"/><rect x="13" y="5" width="1" height="1" fill="#000000"/><rect x="3" y="6" width="1" height="1" fill="#000000"/><rect x="4" y="6" width="1" height="1" fill="#C8C8C8"/><rect x="5" y="6" width="3" height="1" fill="#FFFF00"/><rect x="8" y="6" width="4" height="1" fill="#0000F0"/><rect x="12" y="6" width="1" height="1" fill="#C8C8C8"/><rect x="13" y="6" width="1" height="1" fill="#000000"/><rect x="4" y="7" width="1" height="1" fill="#000000"/><rect x="5" y="7" width="8" height="1" fill="#C8C8C8"/><rect x="13" y="7" width="1" height="1" fill="#000000"/><rect x="2" y="8" width="2" height="1" fill="#000000"/><rect x="5" y="8" width="1" height="1" fill="#000000"/><rect x="6" y="8" width="5" height="1" fill="#C8C8C8"/><rect x="11" y="8" width="1" height="1" fill="#000000"/><rect x="13" y="8" width="2" height="1" fill="#000000"/><rect x="4" y="9" width="1" height="1" fill="#000000"/><rect x="5" y="9" width="7" height="1" fill="#C8C8C8"/><rect x="12" y="9" width="1" height="1" fill="#000000"/><rect x="3" y="10" width="1" height="1" fill="#000000"/><rect x="4" y="10" width="8" height="1" fill="#C8C8C8"/><rect x="12" y="10" width="1" height="1" fill="#000000"/><rect x="2" y="11" width="1" height="1" fill="#000000"/><rect x="3" y="11" width="10" height="1" fill="#C8C8C8"/><rect x="13" y="11" width="1" height="1" fill="#000000"/><rect x="2" y="12" width="12" height="1" fill="#000000"/></svg>
<div style="left:1067px;top:843px;width:16px;height:16px;background:#000080"></div><div class="t" style="left:1067px;top:845px;font-size:13px;line-height:13px;color:#fff;letter-spacing:-0.3px">Ru</div>
<svg style="left:1084px;top:843px;" width="16" height="15" viewBox="0 0 16 15" shape-rendering="crispEdges"><rect x="5" y="0" width="6" height="1" fill="#0000F0"/><rect x="3" y="1" width="10" height="1" fill="#0000F0"/><rect x="2" y="2" width="5" height="1" fill="#0000F0"/><rect x="7" y="2" width="2" height="1" fill="#FFFFFF"/><rect x="9" y="2" width="5" height="1" fill="#0000F0"/><rect x="1" y="3" width="5" height="1" fill="#0000F0"/><rect x="6" y="3" width="4" height="1" fill="#FFFFFF"/><rect x="10" y="3" width="5" height="1" fill="#0000F0"/><rect x="1" y="4" width="6" height="1" fill="#0000F0"/><rect x="7" y="4" width="2" height="1" fill="#FFFFFF"/><rect x="9" y="4" width="6" height="1" fill="#0000F0"/><rect x="0" y="5" width="2" height="1" fill="#0000F0"/><rect x="2" y="5" width="3" height="1" fill="#00E000"/><rect x="5" y="5" width="6" height="1" fill="#0000F0"/><rect x="11" y="5" width="3" height="1" fill="#00E000"/><rect x="14" y="5" width="2" height="1" fill="#0000F0"/><rect x="0" y="6" width="3" height="1" fill="#0000F0"/><rect x="3" y="6" width="10" height="1" fill="#00E000"/><rect x="13" y="6" width="3" height="1" fill="#0000F0"/><rect x="0" y="7" width="4" height="1" fill="#0000F0"/><rect x="4" y="7" width="2" height="1" fill="#00E000"/><rect x="6" y="7" width="4" height="1" fill="#D84040"/><rect x="10" y="7" width="2" height="1" fill="#00E000"/><rect x="12" y="7" width="4" height="1" fill="#0000F0"/><rect x="0" y="8" width="4" height="1" fill="#0000F0"/><rect x="4" y="8" width="2" height="1" fill="#00E000"/><rect x="6" y="8" width="4" height="1" fill="#D84040"/><rect x="10" y="8" width="2" height="1" fill="#00E000"/><rect x="12" y="8" width="4" height="1" fill="#0000F0"/><rect x="1" y="9" width="4" height="1" fill="#0000F0"/><rect x="5" y="9" width="2" height="1" fill="#00E000"/><rect x="7" y="9" width="2" height="1" fill="#D84040"/><rect x="9" y="9" width="2" height="1" fill="#00E000"/><rect x="11" y="9" width="4" height="1" fill="#0000F0"/><rect x="1" y="10" width="5" height="1" fill="#0000F0"/><rect x="6" y="10" width="4" height="1" fill="#00E000"/><rect x="10" y="10" width="5" height="1" fill="#0000F0"/><rect x="2" y="11" width="5" height="1" fill="#0000F0"/><rect x="7" y="11" width="3" height="1" fill="#00E000"/><rect x="10" y="11" width="4" height="1" fill="#0000F0"/><rect x="3" y="12" width="4" height="1" fill="#0000F0"/><rect x="7" y="12" width="1" height="1" fill="#00E000"/><rect x="8" y="12" width="5" height="1" fill="#0000F0"/><rect x="5" y="13" width="2" height="1" fill="#0000F0"/><rect x="7" y="13" width="1" height="1" fill="#00E000"/><rect x="8" y="13" width="3" height="1" fill="#0000F0"/><rect x="6" y="14" width="4" height="1" fill="#0000F0"/></svg>
<div class="t" style="left:1113px;top:845px;font-size:13px;line-height:13px">4:47</div>
</body></html>
